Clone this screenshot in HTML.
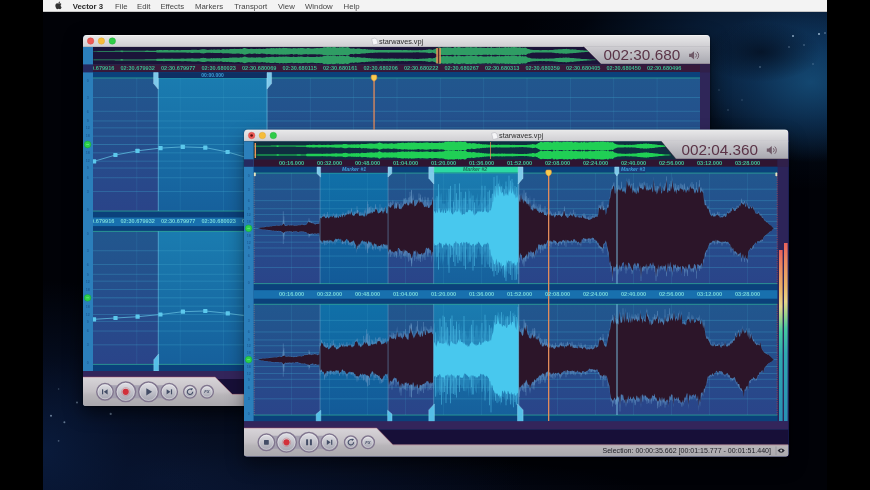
<!DOCTYPE html>
<html><head><meta charset="utf-8"><title>Vector 3</title>
<style>
html,body{margin:0;padding:0;background:#000;}
body{width:870px;height:490px;overflow:hidden;position:relative;font-family:"Liberation Sans", sans-serif;}
.abs{position:absolute;}
svg{position:absolute;left:0;top:0;overflow:hidden;}
.t{position:absolute;white-space:nowrap;line-height:1;}
.menu{font-size:7.8px;color:#454545;top:2.7px;}
.rl{font-size:5.6px;font-weight:bold;transform:translateX(-50%);}
.title{font-size:7.3px;color:#2e2e2e;}
.time{font-size:15.3px;color:#5b3447;}
.mk{font-size:5.2px;font-style:italic;font-weight:bold;}
.status{font-size:7.05px;color:#22222a;}
#all{position:absolute;left:0;top:0;width:870px;height:490px;overflow:hidden;filter:blur(0.45px);}
</style></head><body><div id="all">

<div class="abs" style="left:43px;top:0;width:784px;height:490px;overflow:hidden;
background:
radial-gradient(ellipse 60px 30px at 718px 52px, rgba(3,10,24,0.7) 0%, rgba(3,10,24,0) 100%),
radial-gradient(ellipse 110px 80px at 768px 82px, rgba(22,80,124,0.8) 0%, rgba(16,62,104,0.5) 50%, rgba(0,0,0,0) 100%),
radial-gradient(ellipse 300px 135px at 770px 55px, rgba(12,46,84,0.95) 0%, rgba(10,36,68,0.7) 45%, rgba(4,14,30,0.3) 80%, rgba(0,0,0,0) 100%),
radial-gradient(ellipse 170px 170px at 0px 450px, rgba(10,28,62,0.9) 0%, rgba(7,19,46,0.6) 50%, rgba(0,0,0,0) 100%),
radial-gradient(ellipse 360px 130px at 120px 480px, rgba(10,24,54,0.85) 0%, rgba(8,18,42,0.55) 55%, rgba(0,0,0,0) 100%),
radial-gradient(ellipse 430px 45px at 180px 495px, rgba(8,18,46,0.75) 0%, rgba(0,0,0,0) 100%),
#010207;"></div>

<svg width="870" height="490">
<circle cx="51" cy="415.7" r="1" fill="#bcd6ee" opacity="0.55"/>
<circle cx="64.4" cy="422.3" r="1" fill="#bcd6ee" opacity="0.5"/>
<circle cx="77" cy="402.5" r="1" fill="#bcd6ee" opacity="0.45"/>
<circle cx="110.7" cy="413.9" r="1.1" fill="#bcd6ee" opacity="0.5"/>
<circle cx="58.6" cy="440.8" r="0.9" fill="#bcd6ee" opacity="0.35"/>
<circle cx="58.6" cy="389" r="0.8" fill="#bcd6ee" opacity="0.3"/>
<circle cx="793" cy="36" r="1" fill="#bcd6ee" opacity="0.7"/>
<circle cx="819" cy="34" r="1" fill="#bcd6ee" opacity="0.8"/>
<circle cx="825" cy="33" r="0.8" fill="#bcd6ee" opacity="0.6"/>
<circle cx="804" cy="45" r="0.8" fill="#bcd6ee" opacity="0.45"/>
<circle cx="789" cy="47" r="0.8" fill="#bcd6ee" opacity="0.45"/>
<circle cx="760" cy="67" r="0.8" fill="#bcd6ee" opacity="0.5"/>
<circle cx="813" cy="64" r="0.8" fill="#bcd6ee" opacity="0.35"/>
<circle cx="728" cy="110" r="0.7" fill="#bcd6ee" opacity="0.35"/>
<circle cx="719" cy="90" r="0.7" fill="#bcd6ee" opacity="0.3"/>
<circle cx="742" cy="100" r="0.7" fill="#bcd6ee" opacity="0.3"/>
</svg>

<div class="abs" style="left:43px;top:0;width:784px;height:11.4px;background:#f3f3f3;border-bottom:0.6px solid #c6c6c6;"></div>

<svg width="870" height="490"><g transform="translate(54.4,1.3) scale(0.0094)" fill="#333">
<path d="M665 450c-1-105 86-156 90-158-49-72-125-82-152-83-64-7-126 38-159 38-33 0-83-37-137-36-70 1-135 41-171 104-74 127-19 315 52 418 35 50 76 107 130 105 53-2 72-34 136-34 63 0 81 34 136 33 56-1 92-51 126-102 40-58 56-115 57-118-1 0-109-42-110-167zM562 142c28-35 48-83 42-131-41 2-91 28-121 62-26 30-50 80-43 126 46 4 93-23 122-57z"/></g></svg>

<div class="t menu" style="left:72.7px;font-weight:bold;color:#2a2a2a;">Vector 3</div>
<div class="t menu" style="left:115px;">File</div>
<div class="t menu" style="left:137px;">Edit</div>
<div class="t menu" style="left:160.4px;">Effects</div>
<div class="t menu" style="left:195px;">Markers</div>
<div class="t menu" style="left:234.2px;">Transport</div>
<div class="t menu" style="left:278px;">View</div>
<div class="t menu" style="left:305px;">Window</div>
<div class="t menu" style="left:343.5px;">Help</div>


<div class="abs" style="left:83px;top:35px;width:627px;height:371px;border-radius:4px 4px 3px 3px;box-shadow:0 6px 18px rgba(0,0,0,0.6),0 0 2px rgba(0,0,0,0.7);background:#1a1240;"></div>

<svg width="870" height="490">
<defs>
<clipPath id="bw-win"><path d="M87,35 h619 a4,4 0 0 1 4,4 V403 a3,3 0 0 1 -3,3 H86 a3,3 0 0 1 -3,-3 V39 a4,4 0 0 1 4,-4z"/></clipPath>
<linearGradient id="bw-tb" x1="0" y1="0" x2="0" y2="1"><stop offset="0" stop-color="#e9e9ea"/><stop offset="1" stop-color="#cfced2"/></linearGradient>
<linearGradient id="bw-td" x1="0" y1="0" x2="0" y2="1"><stop offset="0" stop-color="#cfced2"/><stop offset="1" stop-color="#a8a8b0"/></linearGradient>
<linearGradient id="bw-un" x1="0" y1="0" x2="0" y2="1"><stop offset="0" stop-color="#21578e"/><stop offset="1" stop-color="#2a4489"/></linearGradient>
<linearGradient id="bw-sel" x1="0" y1="0" x2="0" y2="1"><stop offset="0" stop-color="#1a7cb0"/><stop offset="1" stop-color="#16609c"/></linearGradient>
<linearGradient id="bw-mk" x1="0" y1="0" x2="0" y2="1"><stop offset="0" stop-color="#1070a8"/><stop offset="1" stop-color="#135a98"/></linearGradient>
<linearGradient id="bw-tp" x1="0" y1="0" x2="0" y2="1"><stop offset="0" stop-color="#d8d5d9"/><stop offset="0.5" stop-color="#c4c0c5"/><stop offset="0.62" stop-color="#b8b5b9"/><stop offset="1" stop-color="#aaa8ad"/></linearGradient>
<linearGradient id="bw-btn" x1="0" y1="0" x2="0" y2="1"><stop offset="0" stop-color="#e2e2e7"/><stop offset="1" stop-color="#a3a3af"/></linearGradient>
<linearGradient id="bw-meter" x1="0" y1="0" x2="0" y2="1"><stop offset="0" stop-color="#e8615c"/><stop offset="0.1" stop-color="#ea8860"/><stop offset="0.24" stop-color="#e9b468"/><stop offset="0.33" stop-color="#e6d48a"/><stop offset="0.4" stop-color="#9fd48a"/><stop offset="0.48" stop-color="#45c9a0"/><stop offset="0.62" stop-color="#2fa8b0"/><stop offset="1" stop-color="#2890b4"/></linearGradient>
</defs>
<g clip-path="url(#bw-win)">
<rect x="83" y="35" width="627" height="371" fill="#0b417b"/>
<rect x="83" y="35" width="627" height="12" fill="url(#bw-tb)"/>
<rect x="83" y="35" width="627" height="0.6" fill="#fff" opacity="0.8"/>
<rect x="83" y="46.5" width="627" height="0.5" fill="#9a98a0" opacity="0.8"/>
<rect x="83" y="47" width="627" height="17.4" fill="#1b1439"/>
<rect x="83" y="64.4" width="627" height="8" fill="#37193a"/>
<rect x="93" y="72.4" width="607" height="5.6" fill="#0c4484"/>
<circle cx="90.6" cy="41" r="3.25" fill="#ee5a55" stroke="#d14540" stroke-width="0.4"/>
<circle cx="101.4" cy="41" r="3.25" fill="#f6bd3a" stroke="#d9a030" stroke-width="0.4"/>
<circle cx="112.3" cy="41" r="3.25" fill="#2fcc48" stroke="#22a838" stroke-width="0.4"/>
<path d="M93.4,50.9L94.5,50.9L95.7,50.9L96.9,50.9L98,50.9L99.2,50.9L100.3,50.9L101.5,50.9L102.6,50.9L103.8,50.9L105,50.9L106.1,50.9L107.3,50.9L108.4,50.9L109.6,50.9L110.7,50.9L111.9,50.9L113.1,50.9L114.2,50.9L115.4,50.8L116.5,50.8L117.7,50.8L118.8,50.8L120,50.8L121.2,50.5L122.3,50.4L123.5,50.8L124.6,50.8L125.8,50.8L126.9,50.8L128.1,50.8L129.3,50.8L130.4,50.8L131.6,50.8L132.7,50.8L133.9,50.8L135,50.8L136.2,50.8L137.4,50.8L138.5,50.8L139.7,50.8L140.8,50.8L142,50.8L143.1,50.8L144.3,50.8L145.5,50.7L146.6,50.6L147.8,50.6L148.9,50.7L150.1,50.7L151.2,50.7L152.4,50.7L153.6,50.7L154.7,50.7L155.9,50.7L157,50.1L158.2,50.2L159.3,50.1L160.5,50.1L161.7,50.1L162.8,50.2L164,50L165.1,50.1L166.3,50.1L167.4,50.1L168.6,50.2L169.8,50.2L170.9,50.1L172.1,50L173.2,50.1L174.4,50.2L175.5,50.2L176.7,50.1L177.9,50.1L179,50.2L180.2,50.2L181.3,50L182.5,50L183.6,50L184.8,50.1L185.9,50.1L187.1,49.9L188.3,49.9L189.4,50L190.6,49.9L191.7,49.7L192.9,49.7L194,49.8L195.2,49.8L196.4,49.8L197.5,49.9L198.7,49.9L199.8,49.8L201,49.4L202.1,49.3L203.3,49.2L204.5,49.3L205.6,49.5L206.8,49.8L207.9,49.9L209.1,49.8L210.2,49.8L211.4,49.5L212.6,49.8L213.7,49.5L214.9,49.6L216,49.7L217.2,49.5L218.3,49.6L219.5,49.5L220.7,49.9L221.8,49.6L223,49.1L224.1,49.3L225.3,49.4L226.4,49.3L227.6,49.3L228.8,49.4L229.9,49L231.1,49.1L232.2,48.9L233.4,48.9L234.5,48.8L235.7,48.9L236.9,49L238,49.1L239.2,49.1L240.3,48.7L241.5,48.9L242.6,48.7L243.8,48.1L245,47.9L246.1,48.4L247.3,48.7L248.4,48.9L249.6,49L250.7,48.8L251.9,48.7L253.1,48.9L254.2,49L255.4,49.1L256.5,48.7L257.7,48.9L258.8,48.7L260,48.7L261.2,49L262.3,49.1L263.5,48.8L264.6,48.9L265.8,48.7L266.9,48.2L268.1,48.6L269.3,48.5L270.4,48.3L271.6,48.1L272.7,48.2L273.9,48.1L275,48.6L276.2,48.1L277.4,48.3L278.5,48.2L279.7,47.8L280.8,48.2L282,48.2L283.1,47.8L284.3,48.1L285.5,47.9L286.6,48L287.8,48.2L288.9,48.2L290.1,48.3L291.2,48.5L292.4,48.5L293.6,47.9L294.7,48.3L295.9,48.3L297,48.5L298.2,47.9L299.3,48.2L300.5,47.9L301.7,47.9L302.8,48.1L304,48.3L305.1,48.4L306.3,48.5L307.4,48L308.6,48.1L309.8,48.3L310.9,48.4L312.1,48.4L313.2,48.4L314.4,48.3L315.5,48.3L316.7,48L317.9,48.1L319,48.3L320.2,48L321.3,48.1L322.5,47.9L323.6,47.3L324.8,47.3L326,47.4L327.1,47L328.3,47L329.4,47.3L330.6,47.1L331.7,47.4L332.9,47L334.1,47.1L335.2,47.1L336.4,47.7L337.5,47.4L338.7,47.7L339.8,46.9L341,47.5L342.2,47.1L343.3,47.3L344.5,47.5L345.6,47.6L346.8,47.2L347.9,47.1L349.1,47.7L350.3,48.5L351.4,48.5L352.6,48.6L353.7,48.2L354.9,48.8L356,48.9L357.2,48.5L358.4,48.6L359.5,48.6L360.7,48.9L361.8,49.1L363,49.2L364.1,49L365.3,49.1L366.5,49.5L367.6,49.3L368.8,49.7L369.9,49.5L371.1,49.8L372.2,49.6L373.4,49.8L374.5,49.8L375.7,50L376.9,49.9L378,50.1L379.2,50L380.3,50.1L381.5,50L382.6,50L383.8,50.1L385,50.1L386.1,50.1L387.3,50.1L388.4,49.9L389.6,50.1L390.7,50L391.9,50L393.1,50L394.2,50.1L395.4,50L396.5,50.1L397.7,50.1L398.8,50.1L400,50L401.2,50.1L402.3,50.2L403.5,50.1L404.6,50L405.8,50.1L406.9,50L408.1,50.2L409.3,50.2L410.4,50.1L411.6,50.2L412.7,50.2L413.9,50.3L415,50.2L416.2,50.3L417.4,50.3L418.5,50.3L419.7,50.1L420.8,50.2L422,50.2L423.1,50L424.3,50.1L425.5,50L426.6,49.8L427.8,49.8L428.9,49.3L430.1,49.5L431.2,49.6L432.4,50L433.6,49.5L434.7,49.3L435.9,48.5L437,48.3L438.2,47.6L439.3,47.3L440.5,47.4L441.7,47.9L442.8,47.4L444,47.5L445.1,47.6L446.3,47.4L447.4,47.3L448.6,47.6L449.8,47.6L450.9,47.5L452.1,47.9L453.2,47.9L454.4,47.1L455.5,47.1L456.7,47.8L457.9,47.1L459,47.1L460.2,47.3L461.3,47.7L462.5,47.5L463.6,47.7L464.8,47.7L466,47.3L467.1,47.2L468.3,47.3L469.4,47.4L470.6,47L471.7,47.2L472.9,47.4L474.1,47.5L475.2,47.2L476.4,47.1L477.5,47.7L478.7,47.8L479.8,47.5L481,47.4L482.2,47.7L483.3,47.8L484.5,47.8L485.6,47.9L486.8,47.9L487.9,47.3L489.1,48L490.3,47.7L491.4,47.1L492.6,47.9L493.7,47.7L494.9,47.9L496,47.8L497.2,47.5L498.4,47.7L499.5,47.1L500.7,47.9L501.8,47.5L503,47.7L504.1,47.6L505.3,47.1L506.5,47.4L507.6,47.4L508.8,47.1L509.9,47.7L511.1,47.1L512.2,47.2L513.4,47.1L514.6,47.1L515.7,47.3L516.9,47.3L518,47.8L519.2,47.2L520.3,47.2L521.5,48L522.7,47.4L523.8,48L525,47.6L526.1,47.7L527.3,48.7L528.4,49.1L529.6,49.2L530.8,49.7L531.9,49.8L533.1,50L534.2,49.9L535.4,50L536.5,50.1L537.7,50L538.9,50.1L540,50.2L541.2,50.2L542.3,50L543.5,50.1L544.6,50.1L545.8,50L547,50L548.1,50.2L549.3,50L550.4,50L551.6,50L552.7,49.9L553.9,49.8L555,49.6L556.2,49.4L557.4,49.5L558.5,49.3L559.7,49.2L560.8,49.2L562,49.3L563.1,48.9L564.3,49.1L565.5,48.9L566.6,48.8L567.8,49.2L568.9,49L570.1,49.4L571.2,49.4L572.4,49.3L573.6,49.5L574.7,49.6L575.9,49.6L577,49.9L578.2,49.9L579.3,50L580.5,50.2L581.7,50.3L582.8,50.3L584,50.4L585.1,50.5L586.3,50.5L587.4,50.6L588.6,50.7L589.8,50.8L590.9,50.8L592.1,50.9L593.2,50.9L594.4,50.9L595.5,50.9L595.5,51.6L594.4,51.6L593.2,51.7L592.1,51.7L590.9,51.8L589.8,51.8L588.6,51.9L587.4,52L586.3,52.1L585.1,52.1L584,52.2L582.8,52.3L581.7,52.3L580.5,52.4L579.3,52.6L578.2,52.7L577,52.7L575.9,53L574.7,53L573.6,53.1L572.4,53.3L571.2,53.2L570.1,53.2L568.9,53.6L567.8,53.4L566.6,53.8L565.5,53.7L564.3,53.5L563.1,53.7L562,53.3L560.8,53.4L559.7,53.4L558.5,53.3L557.4,53.1L556.2,53.2L555,53L553.9,52.8L552.7,52.7L551.6,52.6L550.4,52.6L549.3,52.6L548.1,52.4L547,52.6L545.8,52.6L544.6,52.5L543.5,52.5L542.3,52.6L541.2,52.4L540,52.4L538.9,52.5L537.7,52.6L536.5,52.5L535.4,52.6L534.2,52.7L533.1,52.6L531.9,52.8L530.8,52.9L529.6,53.4L528.4,53.5L527.3,53.9L526.1,54.9L525,55L523.8,54.6L522.7,55.2L521.5,54.6L520.3,55.4L519.2,55.4L518,54.8L516.9,55.3L515.7,55.3L514.6,55.5L513.4,55.5L512.2,55.4L511.1,55.5L509.9,54.9L508.8,55.5L507.6,55.2L506.5,55.2L505.3,55.5L504.1,55L503,54.9L501.8,55.1L500.7,54.7L499.5,55.5L498.4,54.9L497.2,55.1L496,54.8L494.9,54.7L493.7,54.9L492.6,54.7L491.4,55.5L490.3,54.9L489.1,54.6L487.9,55.3L486.8,54.7L485.6,54.7L484.5,54.8L483.3,54.8L482.2,54.9L481,55.2L479.8,55.1L478.7,54.8L477.5,54.9L476.4,55.5L475.2,55.4L474.1,55.1L472.9,55.2L471.7,55.4L470.6,55.6L469.4,55.2L468.3,55.3L467.1,55.4L466,55.3L464.8,54.9L463.6,54.9L462.5,55.1L461.3,54.9L460.2,55.3L459,55.5L457.9,55.5L456.7,54.8L455.5,55.5L454.4,55.5L453.2,54.7L452.1,54.7L450.9,55.1L449.8,55L448.6,55L447.4,55.3L446.3,55.2L445.1,55L444,55.1L442.8,55.2L441.7,54.7L440.5,55.2L439.3,55.3L438.2,55L437,54.3L435.9,54.1L434.7,53.3L433.6,53.1L432.4,52.6L431.2,53L430.1,53.1L428.9,53.3L427.8,52.8L426.6,52.8L425.5,52.6L424.3,52.5L423.1,52.6L422,52.4L420.8,52.4L419.7,52.5L418.5,52.3L417.4,52.3L416.2,52.3L415,52.4L413.9,52.3L412.7,52.4L411.6,52.4L410.4,52.5L409.3,52.4L408.1,52.4L406.9,52.6L405.8,52.5L404.6,52.6L403.5,52.5L402.3,52.4L401.2,52.5L400,52.6L398.8,52.5L397.7,52.5L396.5,52.5L395.4,52.6L394.2,52.5L393.1,52.6L391.9,52.6L390.7,52.6L389.6,52.5L388.4,52.7L387.3,52.5L386.1,52.5L385,52.5L383.8,52.5L382.6,52.6L381.5,52.6L380.3,52.5L379.2,52.6L378,52.5L376.9,52.7L375.7,52.6L374.5,52.8L373.4,52.8L372.2,53L371.1,52.8L369.9,53.1L368.8,52.9L367.6,53.3L366.5,53.1L365.3,53.5L364.1,53.6L363,53.4L361.8,53.5L360.7,53.7L359.5,54L358.4,54L357.2,54.1L356,53.7L354.9,53.8L353.7,54.4L352.6,54L351.4,54.1L350.3,54.1L349.1,54.9L347.9,55.5L346.8,55.4L345.6,55L344.5,55.1L343.3,55.3L342.2,55.5L341,55.1L339.8,55.7L338.7,54.9L337.5,55.2L336.4,54.9L335.2,55.5L334.1,55.5L332.9,55.6L331.7,55.2L330.6,55.5L329.4,55.3L328.3,55.6L327.1,55.6L326,55.2L324.8,55.3L323.6,55.3L322.5,54.7L321.3,54.5L320.2,54.6L319,54.3L317.9,54.5L316.7,54.6L315.5,54.3L314.4,54.3L313.2,54.2L312.1,54.2L310.9,54.2L309.8,54.3L308.6,54.5L307.4,54.6L306.3,54.1L305.1,54.2L304,54.3L302.8,54.5L301.7,54.7L300.5,54.7L299.3,54.4L298.2,54.7L297,54.1L295.9,54.3L294.7,54.3L293.6,54.7L292.4,54.1L291.2,54.1L290.1,54.3L288.9,54.4L287.8,54.4L286.6,54.6L285.5,54.7L284.3,54.5L283.1,54.8L282,54.4L280.8,54.4L279.7,54.8L278.5,54.4L277.4,54.3L276.2,54.5L275,54L273.9,54.5L272.7,54.4L271.6,54.5L270.4,54.3L269.3,54.1L268.1,54L266.9,54.4L265.8,53.9L264.6,53.7L263.5,53.8L262.3,53.5L261.2,53.6L260,53.9L258.8,53.9L257.7,53.7L256.5,53.9L255.4,53.5L254.2,53.6L253.1,53.7L251.9,53.9L250.7,53.8L249.6,53.6L248.4,53.7L247.3,53.9L246.1,54.2L245,54.7L243.8,54.5L242.6,53.9L241.5,53.7L240.3,53.9L239.2,53.5L238,53.5L236.9,53.6L235.7,53.7L234.5,53.8L233.4,53.7L232.2,53.7L231.1,53.5L229.9,53.6L228.8,53.2L227.6,53.3L226.4,53.3L225.3,53.2L224.1,53.3L223,53.5L221.8,53L220.7,52.7L219.5,53.1L218.3,53L217.2,53.1L216,52.9L214.9,53L213.7,53.1L212.6,52.8L211.4,53.1L210.2,52.8L209.1,52.8L207.9,52.7L206.8,52.8L205.6,53.1L204.5,53.3L203.3,53.4L202.1,53.3L201,53.2L199.8,52.8L198.7,52.7L197.5,52.7L196.4,52.8L195.2,52.8L194,52.8L192.9,52.9L191.7,52.9L190.6,52.7L189.4,52.6L188.3,52.7L187.1,52.7L185.9,52.5L184.8,52.5L183.6,52.6L182.5,52.6L181.3,52.6L180.2,52.4L179,52.4L177.9,52.5L176.7,52.5L175.5,52.4L174.4,52.4L173.2,52.5L172.1,52.6L170.9,52.5L169.8,52.4L168.6,52.4L167.4,52.5L166.3,52.5L165.1,52.5L164,52.6L162.8,52.4L161.7,52.5L160.5,52.5L159.3,52.5L158.2,52.4L157,52.5L155.9,51.9L154.7,51.9L153.6,51.9L152.4,51.9L151.2,51.9L150.1,51.9L148.9,51.9L147.8,52L146.6,52L145.5,51.9L144.3,51.8L143.1,51.8L142,51.8L140.8,51.8L139.7,51.8L138.5,51.8L137.4,51.8L136.2,51.8L135,51.8L133.9,51.8L132.7,51.8L131.6,51.8L130.4,51.8L129.3,51.8L128.1,51.8L126.9,51.8L125.8,51.8L124.6,51.8L123.5,51.8L122.3,52.2L121.2,52.1L120,51.8L118.8,51.8L117.7,51.8L116.5,51.8L115.4,51.8L114.2,51.7L113.1,51.7L111.9,51.7L110.7,51.7L109.6,51.7L108.4,51.7L107.3,51.7L106.1,51.7L105,51.7L103.8,51.7L102.6,51.7L101.5,51.7L100.3,51.7L99.2,51.7L98,51.7L96.9,51.6L95.7,51.6L94.5,51.6L93.4,51.6Z" fill="#2f9d64"/>
<path d="M93.4,59.5L94.5,59.5L95.7,59.5L96.9,59.5L98,59.5L99.2,59.5L100.3,59.5L101.5,59.5L102.6,59.5L103.8,59.5L105,59.5L106.1,59.5L107.3,59.5L108.4,59.5L109.6,59.5L110.7,59.5L111.9,59.5L113.1,59.5L114.2,59.5L115.4,59.4L116.5,59.4L117.7,59.4L118.8,59.4L120,59.4L121.2,59.1L122.3,59L123.5,59.4L124.6,59.4L125.8,59.4L126.9,59.4L128.1,59.4L129.3,59.4L130.4,59.4L131.6,59.4L132.7,59.4L133.9,59.4L135,59.4L136.2,59.4L137.4,59.4L138.5,59.4L139.7,59.4L140.8,59.4L142,59.4L143.1,59.4L144.3,59.4L145.5,59.3L146.6,59.2L147.8,59.2L148.9,59.3L150.1,59.3L151.2,59.3L152.4,59.3L153.6,59.3L154.7,59.3L155.9,59.3L157,58.7L158.2,58.8L159.3,58.7L160.5,58.7L161.7,58.7L162.8,58.8L164,58.6L165.1,58.7L166.3,58.7L167.4,58.7L168.6,58.8L169.8,58.8L170.9,58.7L172.1,58.6L173.2,58.7L174.4,58.8L175.5,58.8L176.7,58.7L177.9,58.7L179,58.8L180.2,58.8L181.3,58.6L182.5,58.6L183.6,58.6L184.8,58.7L185.9,58.7L187.1,58.5L188.3,58.5L189.4,58.6L190.6,58.5L191.7,58.3L192.9,58.3L194,58.4L195.2,58.4L196.4,58.4L197.5,58.5L198.7,58.5L199.8,58.4L201,58L202.1,57.9L203.3,57.8L204.5,57.9L205.6,58.1L206.8,58.4L207.9,58.5L209.1,58.4L210.2,58.4L211.4,58.1L212.6,58.4L213.7,58.1L214.9,58.2L216,58.3L217.2,58.1L218.3,58.2L219.5,58.1L220.7,58.5L221.8,58.2L223,57.7L224.1,57.9L225.3,58L226.4,57.9L227.6,57.9L228.8,58L229.9,57.6L231.1,57.7L232.2,57.5L233.4,57.5L234.5,57.4L235.7,57.5L236.9,57.6L238,57.7L239.2,57.7L240.3,57.3L241.5,57.5L242.6,57.3L243.8,56.7L245,56.5L246.1,57L247.3,57.3L248.4,57.5L249.6,57.6L250.7,57.4L251.9,57.3L253.1,57.5L254.2,57.6L255.4,57.7L256.5,57.3L257.7,57.5L258.8,57.3L260,57.3L261.2,57.6L262.3,57.7L263.5,57.4L264.6,57.5L265.8,57.3L266.9,56.8L268.1,57.2L269.3,57.1L270.4,56.9L271.6,56.7L272.7,56.8L273.9,56.7L275,57.2L276.2,56.7L277.4,56.9L278.5,56.8L279.7,56.4L280.8,56.8L282,56.8L283.1,56.4L284.3,56.7L285.5,56.5L286.6,56.6L287.8,56.8L288.9,56.8L290.1,56.9L291.2,57.1L292.4,57.1L293.6,56.5L294.7,56.9L295.9,56.9L297,57.1L298.2,56.5L299.3,56.8L300.5,56.5L301.7,56.5L302.8,56.7L304,56.9L305.1,57L306.3,57.1L307.4,56.6L308.6,56.7L309.8,56.9L310.9,57L312.1,57L313.2,57L314.4,56.9L315.5,56.9L316.7,56.6L317.9,56.7L319,56.9L320.2,56.6L321.3,56.7L322.5,56.5L323.6,55.9L324.8,55.9L326,56L327.1,55.6L328.3,55.6L329.4,55.9L330.6,55.7L331.7,56L332.9,55.6L334.1,55.7L335.2,55.7L336.4,56.3L337.5,56L338.7,56.3L339.8,55.5L341,56.1L342.2,55.7L343.3,55.9L344.5,56.1L345.6,56.2L346.8,55.8L347.9,55.7L349.1,56.3L350.3,57.1L351.4,57.1L352.6,57.2L353.7,56.8L354.9,57.4L356,57.5L357.2,57.1L358.4,57.2L359.5,57.2L360.7,57.5L361.8,57.7L363,57.8L364.1,57.6L365.3,57.7L366.5,58.1L367.6,57.9L368.8,58.3L369.9,58.1L371.1,58.4L372.2,58.2L373.4,58.4L374.5,58.4L375.7,58.6L376.9,58.5L378,58.7L379.2,58.6L380.3,58.7L381.5,58.6L382.6,58.6L383.8,58.7L385,58.7L386.1,58.7L387.3,58.7L388.4,58.5L389.6,58.7L390.7,58.6L391.9,58.6L393.1,58.6L394.2,58.7L395.4,58.6L396.5,58.7L397.7,58.7L398.8,58.7L400,58.6L401.2,58.7L402.3,58.8L403.5,58.7L404.6,58.6L405.8,58.7L406.9,58.6L408.1,58.8L409.3,58.8L410.4,58.7L411.6,58.8L412.7,58.8L413.9,58.9L415,58.8L416.2,58.9L417.4,58.9L418.5,58.9L419.7,58.7L420.8,58.8L422,58.8L423.1,58.6L424.3,58.7L425.5,58.6L426.6,58.4L427.8,58.4L428.9,57.9L430.1,58.1L431.2,58.2L432.4,58.6L433.6,58.1L434.7,57.9L435.9,57.1L437,56.9L438.2,56.2L439.3,55.9L440.5,56L441.7,56.5L442.8,56L444,56.1L445.1,56.2L446.3,56L447.4,55.9L448.6,56.2L449.8,56.2L450.9,56.1L452.1,56.5L453.2,56.5L454.4,55.7L455.5,55.7L456.7,56.4L457.9,55.7L459,55.7L460.2,55.9L461.3,56.3L462.5,56.1L463.6,56.3L464.8,56.3L466,55.9L467.1,55.8L468.3,55.9L469.4,56L470.6,55.6L471.7,55.8L472.9,56L474.1,56.1L475.2,55.8L476.4,55.7L477.5,56.3L478.7,56.4L479.8,56.1L481,56L482.2,56.3L483.3,56.4L484.5,56.4L485.6,56.5L486.8,56.5L487.9,55.9L489.1,56.6L490.3,56.3L491.4,55.7L492.6,56.5L493.7,56.3L494.9,56.5L496,56.4L497.2,56.1L498.4,56.3L499.5,55.7L500.7,56.5L501.8,56.1L503,56.3L504.1,56.2L505.3,55.7L506.5,56L507.6,56L508.8,55.7L509.9,56.3L511.1,55.7L512.2,55.8L513.4,55.7L514.6,55.7L515.7,55.9L516.9,55.9L518,56.4L519.2,55.8L520.3,55.8L521.5,56.6L522.7,56L523.8,56.6L525,56.2L526.1,56.3L527.3,57.3L528.4,57.7L529.6,57.8L530.8,58.3L531.9,58.4L533.1,58.6L534.2,58.5L535.4,58.6L536.5,58.7L537.7,58.6L538.9,58.7L540,58.8L541.2,58.8L542.3,58.6L543.5,58.7L544.6,58.7L545.8,58.6L547,58.6L548.1,58.8L549.3,58.6L550.4,58.6L551.6,58.6L552.7,58.5L553.9,58.4L555,58.2L556.2,58L557.4,58.1L558.5,57.9L559.7,57.8L560.8,57.8L562,57.9L563.1,57.5L564.3,57.7L565.5,57.5L566.6,57.4L567.8,57.8L568.9,57.6L570.1,58L571.2,58L572.4,57.9L573.6,58.1L574.7,58.2L575.9,58.2L577,58.5L578.2,58.5L579.3,58.6L580.5,58.8L581.7,58.9L582.8,58.9L584,59L585.1,59.1L586.3,59.1L587.4,59.2L588.6,59.3L589.8,59.4L590.9,59.4L592.1,59.5L593.2,59.5L594.4,59.5L595.5,59.5L595.5,60.2L594.4,60.2L593.2,60.3L592.1,60.3L590.9,60.4L589.8,60.4L588.6,60.5L587.4,60.6L586.3,60.7L585.1,60.7L584,60.8L582.8,60.9L581.7,60.9L580.5,61L579.3,61.2L578.2,61.3L577,61.3L575.9,61.6L574.7,61.6L573.6,61.7L572.4,61.9L571.2,61.8L570.1,61.8L568.9,62.2L567.8,62L566.6,62.4L565.5,62.3L564.3,62.1L563.1,62.3L562,61.9L560.8,62L559.7,62L558.5,61.9L557.4,61.7L556.2,61.8L555,61.6L553.9,61.4L552.7,61.3L551.6,61.2L550.4,61.2L549.3,61.2L548.1,61L547,61.2L545.8,61.2L544.6,61.1L543.5,61.1L542.3,61.2L541.2,61L540,61L538.9,61.1L537.7,61.2L536.5,61.1L535.4,61.2L534.2,61.3L533.1,61.2L531.9,61.4L530.8,61.5L529.6,62L528.4,62.1L527.3,62.5L526.1,63.5L525,63.6L523.8,63.2L522.7,63.8L521.5,63.2L520.3,64L519.2,64L518,63.4L516.9,63.9L515.7,63.9L514.6,64.1L513.4,64.1L512.2,64L511.1,64.1L509.9,63.5L508.8,64.1L507.6,63.8L506.5,63.8L505.3,64.1L504.1,63.6L503,63.5L501.8,63.7L500.7,63.3L499.5,64.1L498.4,63.5L497.2,63.7L496,63.4L494.9,63.3L493.7,63.5L492.6,63.3L491.4,64.1L490.3,63.5L489.1,63.2L487.9,63.9L486.8,63.3L485.6,63.3L484.5,63.4L483.3,63.4L482.2,63.5L481,63.8L479.8,63.7L478.7,63.4L477.5,63.5L476.4,64.1L475.2,64L474.1,63.7L472.9,63.8L471.7,64L470.6,64.2L469.4,63.8L468.3,63.9L467.1,64L466,63.9L464.8,63.5L463.6,63.5L462.5,63.7L461.3,63.5L460.2,63.9L459,64.1L457.9,64.1L456.7,63.4L455.5,64.1L454.4,64.1L453.2,63.3L452.1,63.3L450.9,63.7L449.8,63.6L448.6,63.6L447.4,63.9L446.3,63.8L445.1,63.6L444,63.7L442.8,63.8L441.7,63.3L440.5,63.8L439.3,63.9L438.2,63.6L437,62.9L435.9,62.7L434.7,61.9L433.6,61.7L432.4,61.2L431.2,61.6L430.1,61.7L428.9,61.9L427.8,61.4L426.6,61.4L425.5,61.2L424.3,61.1L423.1,61.2L422,61L420.8,61L419.7,61.1L418.5,60.9L417.4,60.9L416.2,60.9L415,61L413.9,60.9L412.7,61L411.6,61L410.4,61.1L409.3,61L408.1,61L406.9,61.2L405.8,61.1L404.6,61.2L403.5,61.1L402.3,61L401.2,61.1L400,61.2L398.8,61.1L397.7,61.1L396.5,61.1L395.4,61.2L394.2,61.1L393.1,61.2L391.9,61.2L390.7,61.2L389.6,61.1L388.4,61.3L387.3,61.1L386.1,61.1L385,61.1L383.8,61.1L382.6,61.2L381.5,61.2L380.3,61.1L379.2,61.2L378,61.1L376.9,61.3L375.7,61.2L374.5,61.4L373.4,61.4L372.2,61.6L371.1,61.4L369.9,61.7L368.8,61.5L367.6,61.9L366.5,61.7L365.3,62.1L364.1,62.2L363,62L361.8,62.1L360.7,62.3L359.5,62.6L358.4,62.6L357.2,62.7L356,62.3L354.9,62.4L353.7,63L352.6,62.6L351.4,62.7L350.3,62.7L349.1,63.5L347.9,64.1L346.8,64L345.6,63.6L344.5,63.7L343.3,63.9L342.2,64.1L341,63.7L339.8,64.3L338.7,63.5L337.5,63.8L336.4,63.5L335.2,64.1L334.1,64.1L332.9,64.2L331.7,63.8L330.6,64.1L329.4,63.9L328.3,64.2L327.1,64.2L326,63.8L324.8,63.9L323.6,63.9L322.5,63.3L321.3,63.1L320.2,63.2L319,62.9L317.9,63.1L316.7,63.2L315.5,62.9L314.4,62.9L313.2,62.8L312.1,62.8L310.9,62.8L309.8,62.9L308.6,63.1L307.4,63.2L306.3,62.7L305.1,62.8L304,62.9L302.8,63.1L301.7,63.3L300.5,63.3L299.3,63L298.2,63.3L297,62.7L295.9,62.9L294.7,62.9L293.6,63.3L292.4,62.7L291.2,62.7L290.1,62.9L288.9,63L287.8,63L286.6,63.2L285.5,63.3L284.3,63.1L283.1,63.4L282,63L280.8,63L279.7,63.4L278.5,63L277.4,62.9L276.2,63.1L275,62.6L273.9,63.1L272.7,63L271.6,63.1L270.4,62.9L269.3,62.7L268.1,62.6L266.9,63L265.8,62.5L264.6,62.3L263.5,62.4L262.3,62.1L261.2,62.2L260,62.5L258.8,62.5L257.7,62.3L256.5,62.5L255.4,62.1L254.2,62.2L253.1,62.3L251.9,62.5L250.7,62.4L249.6,62.2L248.4,62.3L247.3,62.5L246.1,62.8L245,63.3L243.8,63.1L242.6,62.5L241.5,62.3L240.3,62.5L239.2,62.1L238,62.1L236.9,62.2L235.7,62.3L234.5,62.4L233.4,62.3L232.2,62.3L231.1,62.1L229.9,62.2L228.8,61.8L227.6,61.9L226.4,61.9L225.3,61.8L224.1,61.9L223,62.1L221.8,61.6L220.7,61.3L219.5,61.7L218.3,61.6L217.2,61.7L216,61.5L214.9,61.6L213.7,61.7L212.6,61.4L211.4,61.7L210.2,61.4L209.1,61.4L207.9,61.3L206.8,61.4L205.6,61.7L204.5,61.9L203.3,62L202.1,61.9L201,61.8L199.8,61.4L198.7,61.3L197.5,61.3L196.4,61.4L195.2,61.4L194,61.4L192.9,61.5L191.7,61.5L190.6,61.3L189.4,61.2L188.3,61.3L187.1,61.3L185.9,61.1L184.8,61.1L183.6,61.2L182.5,61.2L181.3,61.2L180.2,61L179,61L177.9,61.1L176.7,61.1L175.5,61L174.4,61L173.2,61.1L172.1,61.2L170.9,61.1L169.8,61L168.6,61L167.4,61.1L166.3,61.1L165.1,61.1L164,61.2L162.8,61L161.7,61.1L160.5,61.1L159.3,61.1L158.2,61L157,61.1L155.9,60.5L154.7,60.5L153.6,60.5L152.4,60.5L151.2,60.5L150.1,60.5L148.9,60.5L147.8,60.6L146.6,60.6L145.5,60.5L144.3,60.4L143.1,60.4L142,60.4L140.8,60.4L139.7,60.4L138.5,60.4L137.4,60.4L136.2,60.4L135,60.4L133.9,60.4L132.7,60.4L131.6,60.4L130.4,60.4L129.3,60.4L128.1,60.4L126.9,60.4L125.8,60.4L124.6,60.4L123.5,60.4L122.3,60.8L121.2,60.7L120,60.4L118.8,60.4L117.7,60.4L116.5,60.4L115.4,60.4L114.2,60.3L113.1,60.3L111.9,60.3L110.7,60.3L109.6,60.3L108.4,60.3L107.3,60.3L106.1,60.3L105,60.3L103.8,60.3L102.6,60.3L101.5,60.3L100.3,60.3L99.2,60.3L98,60.3L96.9,60.2L95.7,60.2L94.5,60.2L93.4,60.2Z" fill="#2f9d64"/>
<rect x="436.3" y="48" width="1.6" height="15.5" fill="#e8955a"/>
<rect x="439.2" y="48" width="1.6" height="15.5" fill="#e8955a"/>
<rect x="437.9" y="48" width="1.3" height="15.5" fill="#5a2a30"/>
<path d="M583.5,46.4 L710,46.4 L710,64 L601,64Z" fill="url(#bw-td)"/>
<path d="M583.5,46.7 L601,64 L710,64" fill="none" stroke="#3a1830" stroke-width="0.7" opacity="0.55"/>
<g transform="translate(694.3,55.4)" fill="#6f5a68" stroke="none">
<path d="M-5.2,-1.6 h2 l3,-2.6 v8.4 l-3,-2.6 h-2z"/>
<path d="M1.3,-2 a2.8,2.8 0 0 1 0,4" fill="none" stroke="#6f5a68" stroke-width="1"/>
<path d="M2.7,-3.6 a4.8,4.8 0 0 1 0,7.2" fill="none" stroke="#6f5a68" stroke-width="1"/>
</g>
<rect x="93" y="72" width="607" height="145" fill="#0b417b"/>
<rect x="93" y="78" width="607" height="133" fill="url(#bw-un)"/>
<rect x="158.2" y="78" width="108.8" height="133" fill="url(#bw-sel)"/>
<rect x="93" y="77.5" width="607" height="0.9" fill="#2fb09a" opacity="0.8"/>
<rect x="93" y="210.6" width="607" height="0.9" fill="#2fb09a" opacity="0.8"/>
<rect x="93" y="97" width="607" height="0.9" fill="#3fa6cc" opacity="0.37"/>
<rect x="93" y="191.1" width="607" height="0.9" fill="#3fa6cc" opacity="0.37"/>
<rect x="93" y="110.8" width="607" height="0.9" fill="#3fa6cc" opacity="0.37"/>
<rect x="93" y="177.3" width="607" height="0.9" fill="#3fa6cc" opacity="0.37"/>
<rect x="93" y="120.5" width="607" height="0.9" fill="#3fa6cc" opacity="0.37"/>
<rect x="93" y="167.6" width="607" height="0.9" fill="#3fa6cc" opacity="0.37"/>
<rect x="93" y="127.4" width="607" height="0.9" fill="#3fa6cc" opacity="0.37"/>
<rect x="93" y="160.7" width="607" height="0.9" fill="#3fa6cc" opacity="0.37"/>
<rect x="93" y="135.7" width="607" height="0.9" fill="#3fa6cc" opacity="0.37"/>
<rect x="93" y="152.4" width="607" height="0.9" fill="#3fa6cc" opacity="0.37"/>
<rect x="93" y="144.1" width="607" height="0.9" fill="#3fa6cc" opacity="0.45"/>
<rect x="136.4" y="78" width="0.8" height="133" fill="#3fa6cc" opacity="0.2"/>
<rect x="179.8" y="78" width="0.8" height="133" fill="#3fa6cc" opacity="0.2"/>
<rect x="223.2" y="78" width="0.8" height="133" fill="#3fa6cc" opacity="0.2"/>
<rect x="266.5" y="78" width="0.8" height="133" fill="#3fa6cc" opacity="0.2"/>
<rect x="309.9" y="78" width="0.8" height="133" fill="#3fa6cc" opacity="0.2"/>
<rect x="353.2" y="78" width="0.8" height="133" fill="#3fa6cc" opacity="0.2"/>
<rect x="396.6" y="78" width="0.8" height="133" fill="#3fa6cc" opacity="0.2"/>
<rect x="439.9" y="78" width="0.8" height="133" fill="#3fa6cc" opacity="0.2"/>
<rect x="483.3" y="78" width="0.8" height="133" fill="#3fa6cc" opacity="0.2"/>
<rect x="526.6" y="78" width="0.8" height="133" fill="#3fa6cc" opacity="0.2"/>
<rect x="570" y="78" width="0.8" height="133" fill="#3fa6cc" opacity="0.2"/>
<rect x="613.3" y="78" width="0.8" height="133" fill="#3fa6cc" opacity="0.2"/>
<rect x="656.7" y="78" width="0.8" height="133" fill="#3fa6cc" opacity="0.2"/>
<rect x="93" y="225.3" width="607" height="145" fill="#0b417b"/>
<rect x="93" y="231.3" width="607" height="133" fill="url(#bw-un)"/>
<rect x="158.2" y="231.3" width="108.8" height="133" fill="url(#bw-sel)"/>
<rect x="93" y="230.9" width="607" height="0.9" fill="#2fb09a" opacity="0.8"/>
<rect x="93" y="363.9" width="607" height="0.9" fill="#2fb09a" opacity="0.8"/>
<rect x="93" y="250.3" width="607" height="0.9" fill="#3fa6cc" opacity="0.37"/>
<rect x="93" y="344.4" width="607" height="0.9" fill="#3fa6cc" opacity="0.37"/>
<rect x="93" y="264.1" width="607" height="0.9" fill="#3fa6cc" opacity="0.37"/>
<rect x="93" y="330.6" width="607" height="0.9" fill="#3fa6cc" opacity="0.37"/>
<rect x="93" y="273.8" width="607" height="0.9" fill="#3fa6cc" opacity="0.37"/>
<rect x="93" y="320.9" width="607" height="0.9" fill="#3fa6cc" opacity="0.37"/>
<rect x="93" y="280.7" width="607" height="0.9" fill="#3fa6cc" opacity="0.37"/>
<rect x="93" y="314" width="607" height="0.9" fill="#3fa6cc" opacity="0.37"/>
<rect x="93" y="289" width="607" height="0.9" fill="#3fa6cc" opacity="0.37"/>
<rect x="93" y="305.7" width="607" height="0.9" fill="#3fa6cc" opacity="0.37"/>
<rect x="93" y="297.4" width="607" height="0.9" fill="#3fa6cc" opacity="0.45"/>
<rect x="136.4" y="231.3" width="0.8" height="133" fill="#3fa6cc" opacity="0.2"/>
<rect x="179.8" y="231.3" width="0.8" height="133" fill="#3fa6cc" opacity="0.2"/>
<rect x="223.2" y="231.3" width="0.8" height="133" fill="#3fa6cc" opacity="0.2"/>
<rect x="266.5" y="231.3" width="0.8" height="133" fill="#3fa6cc" opacity="0.2"/>
<rect x="309.9" y="231.3" width="0.8" height="133" fill="#3fa6cc" opacity="0.2"/>
<rect x="353.2" y="231.3" width="0.8" height="133" fill="#3fa6cc" opacity="0.2"/>
<rect x="396.6" y="231.3" width="0.8" height="133" fill="#3fa6cc" opacity="0.2"/>
<rect x="439.9" y="231.3" width="0.8" height="133" fill="#3fa6cc" opacity="0.2"/>
<rect x="483.3" y="231.3" width="0.8" height="133" fill="#3fa6cc" opacity="0.2"/>
<rect x="526.6" y="231.3" width="0.8" height="133" fill="#3fa6cc" opacity="0.2"/>
<rect x="570" y="231.3" width="0.8" height="133" fill="#3fa6cc" opacity="0.2"/>
<rect x="613.3" y="231.3" width="0.8" height="133" fill="#3fa6cc" opacity="0.2"/>
<rect x="656.7" y="231.3" width="0.8" height="133" fill="#3fa6cc" opacity="0.2"/>
<rect x="93" y="217.5" width="607" height="8.6" fill="#1870ae"/>
<rect x="158.2" y="72.4" width="108.8" height="5.6" fill="#0e2f63"/>
<rect x="157.8" y="78" width="0.9" height="133" fill="#7fd3f2" opacity="0.55"/>
<rect x="266.6" y="78" width="0.9" height="133" fill="#7fd3f2" opacity="0.55"/>
<rect x="157.8" y="231.3" width="0.9" height="133" fill="#7fd3f2" opacity="0.55"/>
<rect x="266.6" y="231.3" width="0.9" height="133" fill="#7fd3f2" opacity="0.55"/>
<polyline points="94.1,161.3 115.4,155 137.5,150.8 160.5,148.1 182.8,146.9 205.3,147.6 227.6,152 250,158.5" fill="none" stroke="#5ab4d8" stroke-width="1" opacity="0.85"/>
<rect x="92" y="159.2" width="4.2" height="4.2" fill="#5cc8ec" rx="0.5"/>
<rect x="113.3" y="152.9" width="4.2" height="4.2" fill="#5cc8ec" rx="0.5"/>
<rect x="135.4" y="148.7" width="4.2" height="4.2" fill="#5cc8ec" rx="0.5"/>
<rect x="158.4" y="146" width="4.2" height="4.2" fill="#5cc8ec" rx="0.5"/>
<rect x="180.7" y="144.8" width="4.2" height="4.2" fill="#5cc8ec" rx="0.5"/>
<rect x="203.2" y="145.5" width="4.2" height="4.2" fill="#5cc8ec" rx="0.5"/>
<rect x="225.5" y="149.9" width="4.2" height="4.2" fill="#5cc8ec" rx="0.5"/>
<rect x="247.9" y="156.4" width="4.2" height="4.2" fill="#5cc8ec" rx="0.5"/>
<polyline points="94,319.3 115.5,318 137.6,316.7 160.4,314.5 182.9,311.7 205.3,311 227.8,313.3 250,316.5" fill="none" stroke="#5ab4d8" stroke-width="1" opacity="0.85"/>
<rect x="91.9" y="317.2" width="4.2" height="4.2" fill="#5cc8ec" rx="0.5"/>
<rect x="113.4" y="315.9" width="4.2" height="4.2" fill="#5cc8ec" rx="0.5"/>
<rect x="135.5" y="314.6" width="4.2" height="4.2" fill="#5cc8ec" rx="0.5"/>
<rect x="158.3" y="312.4" width="4.2" height="4.2" fill="#5cc8ec" rx="0.5"/>
<rect x="180.8" y="309.6" width="4.2" height="4.2" fill="#5cc8ec" rx="0.5"/>
<rect x="203.2" y="308.9" width="4.2" height="4.2" fill="#5cc8ec" rx="0.5"/>
<rect x="225.7" y="311.2" width="4.2" height="4.2" fill="#5cc8ec" rx="0.5"/>
<rect x="247.9" y="314.4" width="4.2" height="4.2" fill="#5cc8ec" rx="0.5"/>
<path d="M158.2,72.6 h-4.6 v10.9 l4.6,5.6z" fill="#86d4f3" stroke="#c6ecfc" stroke-width="0.4" opacity="0.92"/>
<path d="M267,72.6 h4.6 v10.9 l-4.6,5.6z" fill="#86d4f3" stroke="#c6ecfc" stroke-width="0.4" opacity="0.92"/>
<path d="M158.6,371 h-4.8 v-11.2 l4.8,-5.8z" fill="#58c5ed" stroke="#a4e2fb" stroke-width="0.4" opacity="0.95"/>
<rect x="373.4" y="78" width="1.3" height="293" fill="#e38b5a"/>
<path d="M371.2,76.3 a1.3,1.3 0 0 1 1.3,-1.3 h3 a1.3,1.3 0 0 1 1.3,1.3 v1.6 q0,1.8 -2.8,3.4 q-2.8,-1.6 -2.8,-3.4z" fill="#f8cc4e" stroke="#e8903e" stroke-width="0.6"/>
<rect x="700" y="64.4" width="10" height="306.6" fill="#2f2659"/>
<rect x="700" y="64.4" width="10" height="8" fill="#30204a"/>
<rect x="83" y="47" width="10" height="324" fill="#2b7fbb"/>
<rect x="83" y="64.4" width="10" height="8" fill="#252a60"/>
<text x="87.8" y="81.5" font-family='"Liberation Sans", sans-serif' font-size="3.6" font-weight="bold" fill="#1a5690" opacity="0.85" text-anchor="middle">0</text>
<text x="87.8" y="211.1" font-family='"Liberation Sans", sans-serif' font-size="3.6" font-weight="bold" fill="#1a5690" opacity="0.85" text-anchor="middle">0</text>
<text x="87.8" y="98.7" font-family='"Liberation Sans", sans-serif' font-size="3.6" font-weight="bold" fill="#1a5690" opacity="0.85" text-anchor="middle">3</text>
<text x="87.8" y="192.9" font-family='"Liberation Sans", sans-serif' font-size="3.6" font-weight="bold" fill="#1a5690" opacity="0.85" text-anchor="middle">3</text>
<text x="87.8" y="112.5" font-family='"Liberation Sans", sans-serif' font-size="3.6" font-weight="bold" fill="#1a5690" opacity="0.85" text-anchor="middle">6</text>
<text x="87.8" y="179.1" font-family='"Liberation Sans", sans-serif' font-size="3.6" font-weight="bold" fill="#1a5690" opacity="0.85" text-anchor="middle">6</text>
<text x="87.8" y="122.3" font-family='"Liberation Sans", sans-serif' font-size="3.6" font-weight="bold" fill="#1a5690" opacity="0.85" text-anchor="middle">9</text>
<text x="87.8" y="169.3" font-family='"Liberation Sans", sans-serif' font-size="3.6" font-weight="bold" fill="#1a5690" opacity="0.85" text-anchor="middle">9</text>
<text x="87.8" y="129.2" font-family='"Liberation Sans", sans-serif' font-size="3.6" font-weight="bold" fill="#1a5690" opacity="0.85" text-anchor="middle">12</text>
<text x="87.8" y="162.4" font-family='"Liberation Sans", sans-serif' font-size="3.6" font-weight="bold" fill="#1a5690" opacity="0.85" text-anchor="middle">12</text>
<text x="87.8" y="137.4" font-family='"Liberation Sans", sans-serif' font-size="3.6" font-weight="bold" fill="#1a5690" opacity="0.85" text-anchor="middle">18</text>
<text x="87.8" y="154.2" font-family='"Liberation Sans", sans-serif' font-size="3.6" font-weight="bold" fill="#1a5690" opacity="0.85" text-anchor="middle">18</text>
<circle cx="87.6" cy="144.5" r="3.4" fill="#2ad24a" stroke="#1a9a36" stroke-width="0.5"/>
<rect x="86.2" y="144.1" width="2.8" height="0.8" fill="#8af09a" opacity="0.7"/>
<text x="87.8" y="234.8" font-family='"Liberation Sans", sans-serif' font-size="3.6" font-weight="bold" fill="#1a5690" opacity="0.85" text-anchor="middle">0</text>
<text x="87.8" y="364.4" font-family='"Liberation Sans", sans-serif' font-size="3.6" font-weight="bold" fill="#1a5690" opacity="0.85" text-anchor="middle">0</text>
<text x="87.8" y="252" font-family='"Liberation Sans", sans-serif' font-size="3.6" font-weight="bold" fill="#1a5690" opacity="0.85" text-anchor="middle">3</text>
<text x="87.8" y="346.2" font-family='"Liberation Sans", sans-serif' font-size="3.6" font-weight="bold" fill="#1a5690" opacity="0.85" text-anchor="middle">3</text>
<text x="87.8" y="265.9" font-family='"Liberation Sans", sans-serif' font-size="3.6" font-weight="bold" fill="#1a5690" opacity="0.85" text-anchor="middle">6</text>
<text x="87.8" y="332.4" font-family='"Liberation Sans", sans-serif' font-size="3.6" font-weight="bold" fill="#1a5690" opacity="0.85" text-anchor="middle">6</text>
<text x="87.8" y="275.6" font-family='"Liberation Sans", sans-serif' font-size="3.6" font-weight="bold" fill="#1a5690" opacity="0.85" text-anchor="middle">9</text>
<text x="87.8" y="322.6" font-family='"Liberation Sans", sans-serif' font-size="3.6" font-weight="bold" fill="#1a5690" opacity="0.85" text-anchor="middle">9</text>
<text x="87.8" y="282.5" font-family='"Liberation Sans", sans-serif' font-size="3.6" font-weight="bold" fill="#1a5690" opacity="0.85" text-anchor="middle">12</text>
<text x="87.8" y="315.7" font-family='"Liberation Sans", sans-serif' font-size="3.6" font-weight="bold" fill="#1a5690" opacity="0.85" text-anchor="middle">12</text>
<text x="87.8" y="290.7" font-family='"Liberation Sans", sans-serif' font-size="3.6" font-weight="bold" fill="#1a5690" opacity="0.85" text-anchor="middle">18</text>
<text x="87.8" y="307.5" font-family='"Liberation Sans", sans-serif' font-size="3.6" font-weight="bold" fill="#1a5690" opacity="0.85" text-anchor="middle">18</text>
<circle cx="87.6" cy="297.8" r="3.4" fill="#2ad24a" stroke="#1a9a36" stroke-width="0.5"/>
<rect x="86.2" y="297.4" width="2.8" height="0.8" fill="#8af09a" opacity="0.7"/>
<rect x="83" y="371" width="627" height="8" fill="#33255b"/>
<rect x="83" y="379" width="627" height="15" fill="#170f38"/>
<rect x="83" y="394.3" width="627" height="12" fill="#b1b1b6"/>
<path d="M83,377 L215.2,377 L232.4,394.3 L710,394.3 L710,406 L83,406Z" fill="url(#bw-tp)"/>
<path d="M83,377 L215.2,377 L232.4,394.3 L710,394.3" fill="none" stroke="#b05a6a" stroke-width="0.6" opacity="0.8"/>
<rect x="99" y="385.3" width="76.2" height="13" rx="7" fill="#9f9aac" opacity="0.85"/>
<circle cx="105" cy="391.8" r="8.2" fill="url(#bw-btn)" stroke="#81768f" stroke-width="1.5"/>
<circle cx="105" cy="391.8" r="7.1" fill="none" stroke="#ffffff" stroke-width="0.6" opacity="0.6"/>
<circle cx="125.7" cy="391.8" r="9.8" fill="url(#bw-btn)" stroke="#81768f" stroke-width="1.5"/>
<circle cx="125.7" cy="391.8" r="8.7" fill="none" stroke="#ffffff" stroke-width="0.6" opacity="0.6"/>
<circle cx="148.5" cy="391.8" r="9.8" fill="url(#bw-btn)" stroke="#81768f" stroke-width="1.5"/>
<circle cx="148.5" cy="391.8" r="8.7" fill="none" stroke="#ffffff" stroke-width="0.6" opacity="0.6"/>
<circle cx="169.2" cy="391.8" r="8.2" fill="url(#bw-btn)" stroke="#81768f" stroke-width="1.5"/>
<circle cx="169.2" cy="391.8" r="7.1" fill="none" stroke="#ffffff" stroke-width="0.6" opacity="0.6"/>
<circle cx="190" cy="391.8" r="6.3" fill="url(#bw-btn)" stroke="#81768f" stroke-width="1.5"/>
<circle cx="190" cy="391.8" r="5.2" fill="none" stroke="#ffffff" stroke-width="0.6" opacity="0.6"/>
<circle cx="207" cy="391.8" r="6.3" fill="url(#bw-btn)" stroke="#81768f" stroke-width="1.5"/>
<circle cx="207" cy="391.8" r="5.2" fill="none" stroke="#ffffff" stroke-width="0.6" opacity="0.6"/>
<rect x="102" y="389.3" width="1.2" height="5" fill="#434d66"/>
<path d="M107.6,394.4 l-3.8,-2.6 l3.8,-2.6z" fill="#434d66"/>
<circle cx="125.7" cy="391.8" r="3.1" fill="#d2303a"/>
<circle cx="125.7" cy="391.8" r="4.2" fill="none" stroke="#c86a70" stroke-width="0.7" opacity="0.6"/>
<path d="M146.3,388.2 l5.8,3.6 l-5.8,3.6z" fill="#434d66"/>
<path d="M166.6,389.2 l3.8,2.6 l-3.8,2.6z" fill="#434d66"/>
<rect x="170.9" y="389.3" width="1.2" height="5" fill="#434d66"/>
<path d="M191.6,389.6 a2.7,2.7 0 1 0 1.1,2.2" fill="none" stroke="#434d66" stroke-width="1.1"/>
<path d="M190.6,388.2 l2.6,0.4 l-1.8,2z" fill="#434d66"/>
<text x="207" y="393.4" font-family='"Liberation Sans", sans-serif' font-size="4.2" font-weight="bold" font-style="italic" fill="#434d66" text-anchor="middle">FX</text>
</g></svg>

<div class="t title" style="left:379px;top:37.6px;">starwaves.vpj</div>
<svg width="870" height="490"><path d="M372.3,38.2 h3.4 l1.6,1.6 v4.8 h-5z" fill="#f6f6f8" stroke="#b4b4ba" stroke-width="0.5" transform="rotate(-14 374.8 41.4)"/></svg>
<div class="t time" style="left:603.6px;top:47.1px;">002:30.680</div>
<div class="abs" style="left:93px;top:64.4px;width:607px;height:8px;overflow:hidden;">
<div class="t rl" style="left:4.2px;top:1.3px;color:#3ab890;">02:30.679916</div>
<div class="t rl" style="left:44.7px;top:1.3px;color:#3ab890;">02:30.679932</div>
<div class="t rl" style="left:85.2px;top:1.3px;color:#3ab890;">02:30.679977</div>
<div class="t rl" style="left:125.7px;top:1.3px;color:#3ab890;">02:30.680023</div>
<div class="t rl" style="left:166.2px;top:1.3px;color:#3ab890;">02:30.680069</div>
<div class="t rl" style="left:206.7px;top:1.3px;color:#3ab890;">02:30.680115</div>
<div class="t rl" style="left:247.2px;top:1.3px;color:#3ab890;">02:30.680161</div>
<div class="t rl" style="left:287.7px;top:1.3px;color:#3ab890;">02:30.680206</div>
<div class="t rl" style="left:328.2px;top:1.3px;color:#3ab890;">02:30.680222</div>
<div class="t rl" style="left:368.7px;top:1.3px;color:#3ab890;">02:30.680267</div>
<div class="t rl" style="left:409.2px;top:1.3px;color:#3ab890;">02:30.680313</div>
<div class="t rl" style="left:449.7px;top:1.3px;color:#3ab890;">02:30.680359</div>
<div class="t rl" style="left:490.2px;top:1.3px;color:#3ab890;">02:30.680405</div>
<div class="t rl" style="left:530.7px;top:1.3px;color:#3ab890;">02:30.680450</div>
<div class="t rl" style="left:571.2px;top:1.3px;color:#3ab890;">02:30.680496</div>
</div>
<div class="abs" style="left:93px;top:217.5px;width:151px;height:8.6px;overflow:hidden;">
<div class="t rl" style="left:4.2px;top:1.6px;color:#74d4d8;">02:30.679916</div>
<div class="t rl" style="left:44.7px;top:1.6px;color:#74d4d8;">02:30.679932</div>
<div class="t rl" style="left:85.2px;top:1.6px;color:#74d4d8;">02:30.679977</div>
<div class="t rl" style="left:125.7px;top:1.6px;color:#74d4d8;">02:30.680023</div>
<div class="t rl" style="left:166.2px;top:1.6px;color:#74d4d8;">02:30.680069</div>
</div>
<div class="t rl" style="left:212.6px;top:72.9px;color:#3f9fd8;font-size:5px;">00:00.000</div>

<div class="abs" style="left:244px;top:129.5px;width:544.5px;height:327.0px;border-radius:4px 4px 3px 3px;box-shadow:0 8px 18px rgba(0,0,0,0.42),0 0 1.5px rgba(0,0,0,0.7);background:#1a1240;"></div>

<svg width="870" height="490">
<defs>
<clipPath id="fw-win"><path d="M248,129.5 h536.5 a4,4 0 0 1 4,4 V453.5 a3,3 0 0 1 -3,3 H247 a3,3 0 0 1 -3,-3 V133.5 a4,4 0 0 1 4,-4z"/></clipPath>
<linearGradient id="fw-tb" x1="0" y1="0" x2="0" y2="1"><stop offset="0" stop-color="#e9e9ea"/><stop offset="1" stop-color="#cfced2"/></linearGradient>
<linearGradient id="fw-td" x1="0" y1="0" x2="0" y2="1"><stop offset="0" stop-color="#cfced2"/><stop offset="1" stop-color="#a8a8b0"/></linearGradient>
<linearGradient id="fw-un" x1="0" y1="0" x2="0" y2="1"><stop offset="0" stop-color="#21578e"/><stop offset="1" stop-color="#2a4489"/></linearGradient>
<linearGradient id="fw-sel" x1="0" y1="0" x2="0" y2="1"><stop offset="0" stop-color="#1a7cb0"/><stop offset="1" stop-color="#16609c"/></linearGradient>
<linearGradient id="fw-mk" x1="0" y1="0" x2="0" y2="1"><stop offset="0" stop-color="#1070a8"/><stop offset="1" stop-color="#135a98"/></linearGradient>
<linearGradient id="fw-tp" x1="0" y1="0" x2="0" y2="1"><stop offset="0" stop-color="#d8d5d9"/><stop offset="0.5" stop-color="#c4c0c5"/><stop offset="0.62" stop-color="#b8b5b9"/><stop offset="1" stop-color="#aaa8ad"/></linearGradient>
<linearGradient id="fw-btn" x1="0" y1="0" x2="0" y2="1"><stop offset="0" stop-color="#e2e2e7"/><stop offset="1" stop-color="#a3a3af"/></linearGradient>
<linearGradient id="fw-meter" x1="0" y1="0" x2="0" y2="1"><stop offset="0" stop-color="#e8615c"/><stop offset="0.1" stop-color="#ea8860"/><stop offset="0.24" stop-color="#e9b468"/><stop offset="0.33" stop-color="#e6d48a"/><stop offset="0.4" stop-color="#9fd48a"/><stop offset="0.48" stop-color="#45c9a0"/><stop offset="0.62" stop-color="#2fa8b0"/><stop offset="1" stop-color="#2890b4"/></linearGradient>
</defs>
<defs><clipPath id="fw-selc"><rect x="433.6" y="160" width="84.9" height="270"/></clipPath>
<clipPath id="fw-unc"><path d="M253.6,160 H433.6 V430 H253.6z M518.5,160 H777.6 V430 H518.5z"/></clipPath></defs>
<g clip-path="url(#fw-win)">
<rect x="244" y="129.5" width="544.5" height="327" fill="#0b417b"/>
<rect x="244" y="129.5" width="544.5" height="11.9" fill="url(#fw-tb)"/>
<rect x="244" y="129.5" width="544.5" height="0.6" fill="#fff" opacity="0.8"/>
<rect x="244" y="140.9" width="544.5" height="0.5" fill="#9a98a0" opacity="0.8"/>
<rect x="244" y="141.4" width="544.5" height="17.9" fill="#0f2f40"/>
<rect x="244" y="159.3" width="544.5" height="7.5" fill="#2f1531"/>
<rect x="253.6" y="166.8" width="524" height="5.8" fill="#0c4484"/>
<circle cx="251.6" cy="135.5" r="3.25" fill="#ee5a55" stroke="#d14540" stroke-width="0.4"/>
<circle cx="262.4" cy="135.5" r="3.25" fill="#f6bd3a" stroke="#d9a030" stroke-width="0.4"/>
<circle cx="273.3" cy="135.5" r="3.25" fill="#2fcc48" stroke="#22a838" stroke-width="0.4"/>
<path d="M254,145.8L255,145.8L255.9,145.8L256.9,145.8L257.9,145.7L258.8,145.7L259.8,145.7L260.7,145.7L261.7,145.7L262.7,145.7L263.6,145.7L264.6,145.7L265.5,145.7L266.5,145.7L267.5,145.7L268.4,145.7L269.4,145.7L270.3,145.7L271.3,145.6L272.3,145.6L273.2,145.6L274.2,145.6L275.1,145.6L276.1,145.6L277.1,145.3L278,145.2L279,145.6L279.9,145.6L280.9,145.6L281.9,145.6L282.8,145.6L283.8,145.6L284.7,145.6L285.7,145.6L286.7,145.6L287.6,145.6L288.6,145.6L289.5,145.6L290.5,145.6L291.5,145.6L292.4,145.6L293.4,145.6L294.3,145.6L295.3,145.6L296.3,145.5L297.2,145.4L298.2,145.4L299.1,145.4L300.1,145.4L301.1,145.5L302,145.5L303,145.5L303.9,145.5L304.9,145.5L305.9,145.5L306.8,144.9L307.8,144.9L308.7,144.9L309.7,144.8L310.7,144.9L311.6,144.9L312.6,144.8L313.5,144.8L314.5,144.8L315.5,144.9L316.4,144.9L317.4,144.9L318.3,144.8L319.3,144.8L320.3,144.8L321.2,144.9L322.2,145L323.1,144.9L324.1,144.8L325.1,144.9L326,144.9L327,144.7L327.9,144.8L328.9,144.8L329.9,144.9L330.8,144.9L331.8,144.7L332.7,144.7L333.7,144.7L334.7,144.6L335.6,144.4L336.6,144.4L337.5,144.5L338.5,144.5L339.5,144.5L340.4,144.6L341.4,144.6L342.3,144.5L343.3,144.1L344.3,144L345.2,143.9L346.2,144L347.1,144.2L348.1,144.5L349.1,144.6L350,144.5L351,144.5L351.9,144.2L352.9,144.5L353.9,144.2L354.8,144.3L355.8,144.4L356.7,144.2L357.7,144.3L358.7,144.2L359.6,144.6L360.6,144.3L361.5,143.8L362.5,143.9L363.5,144.1L364.4,144L365.4,144L366.3,144.1L367.3,143.7L368.3,143.8L369.2,143.6L370.2,143.5L371.1,143.4L372.1,143.5L373.1,143.7L374,143.8L375,143.7L375.9,143.4L376.9,143.6L377.9,143.3L378.8,142.7L379.8,142.4L380.7,143L381.7,143.3L382.7,143.5L383.6,143.7L384.6,143.4L385.5,143.4L386.5,143.5L387.5,143.7L388.4,143.7L389.4,143.4L390.3,143.5L391.3,143.3L392.3,143.3L393.2,143.7L394.2,143.7L395.1,143.4L396.1,143.5L397.1,143.4L398,142.8L399,143.2L399.9,143.1L400.9,142.9L401.9,142.7L402.8,142.7L403.8,142.7L404.7,143.2L405.7,142.7L406.7,142.9L407.6,142.8L408.6,142.4L409.5,142.8L410.5,142.8L411.5,142.4L412.4,142.7L413.4,142.5L414.3,142.6L415.3,142.8L416.3,142.8L417.2,142.9L418.2,143.1L419.1,143.1L420.1,142.5L421.1,142.9L422,142.8L423,143.1L423.9,142.5L424.9,142.8L425.9,142.5L426.8,142.5L427.8,142.6L428.7,142.8L429.7,143L430.7,143.1L431.6,142.6L432.6,142.7L433.5,142.9L434.5,143L435.5,143L436.4,143L437.4,142.9L438.3,142.9L439.3,142.5L440.3,142.7L441.2,142.9L442.2,142.6L443.1,142.7L444.1,142.4L445.1,141.8L446,141.8L447,141.9L447.9,141.5L448.9,141.4L449.9,141.9L450.8,141.6L451.8,141.9L452.7,141.5L453.7,141.6L454.7,141.6L455.6,142.2L456.6,141.9L457.5,142.3L458.5,141.3L459.5,142.1L460.4,141.6L461.4,141.8L462.3,142.1L463.3,142.1L464.3,141.7L465.2,141.6L466.2,142.2L467.1,143.2L468.1,143.2L469.1,143.3L470,142.8L471,143.4L471.9,143.6L472.9,143.1L473.9,143.2L474.8,143.3L475.8,143.5L476.7,143.8L477.7,143.9L478.7,143.6L479.6,143.8L480.6,144.2L481.5,143.9L482.5,144.4L483.5,144.2L484.4,144.5L485.4,144.3L486.3,144.6L487.3,144.5L488.3,144.8L489.2,144.7L490.2,144.8L491.1,144.7L492.1,144.8L493.1,144.7L494,144.7L495,144.8L495.9,144.9L496.9,144.9L497.9,144.8L498.8,144.6L499.8,144.9L500.7,144.8L501.7,144.7L502.7,144.7L503.6,144.8L504.6,144.7L505.5,144.8L506.5,144.8L507.5,144.8L508.4,144.8L509.4,144.8L510.3,144.9L511.3,144.9L512.3,144.7L513.2,144.9L514.2,144.8L515.1,144.9L516.1,145L517.1,144.9L518,145L519,145L519.9,145.1L520.9,145L521.9,145.1L522.8,145.1L523.8,145L524.7,144.9L525.7,145L526.7,145L527.6,144.8L528.6,144.8L529.5,144.7L530.5,144.5L531.5,144.5L532.4,144L533.4,144.2L534.3,144.3L535.3,144.7L536.3,144.2L537.2,144L538.2,143.1L539.1,142.9L540.1,142.1L541.1,141.8L542,142L543,142.4L543.9,142L544.9,142L545.9,142.1L546.8,142L547.8,141.8L548.7,142.1L549.7,142.2L550.7,142.1L551.6,142.5L552.6,142.5L553.5,141.6L554.5,141.6L555.5,142.3L556.4,141.6L557.4,141.6L558.3,141.8L559.3,142.2L560.3,142L561.2,142.2L562.2,142.3L563.1,141.8L564.1,141.7L565.1,141.9L566,142L567,141.5L567.9,141.7L568.9,142L569.9,142.1L570.8,141.7L571.8,141.6L572.7,142.2L573.7,142.4L574.7,142.1L575.6,141.9L576.6,142.2L577.5,142.3L578.5,142.4L579.5,142.4L580.4,142.5L581.4,141.8L582.3,142.5L583.3,142.2L584.3,141.6L585.2,142.5L586.2,142.3L587.1,142.5L588.1,142.4L589.1,142L590,142.2L591,141.6L591.9,142.5L592.9,142L593.9,142.3L594.8,142.1L595.8,141.7L596.7,141.9L597.7,142L598.7,141.6L599.6,142.2L600.6,141.6L601.5,141.7L602.5,141.6L603.5,141.6L604.4,141.9L605.4,141.8L606.3,142.3L607.3,141.7L608.3,141.7L609.2,142.5L610.2,142L611.1,142.6L612.1,142.1L613.1,142.3L614,143.3L615,143.8L615.9,143.9L616.9,144.4L617.9,144.6L618.8,144.7L619.8,144.7L620.7,144.7L621.7,144.8L622.7,144.8L623.6,144.8L624.6,144.9L625.5,145L626.5,144.8L627.5,144.8L628.4,144.9L629.4,144.7L630.3,144.8L631.3,144.9L632.3,144.7L633.2,144.7L634.2,144.7L635.1,144.6L636.1,144.5L637.1,144.3L638,144.1L639,144.2L639.9,144L640.9,143.8L641.9,143.9L642.8,143.9L643.8,143.5L644.7,143.7L645.7,143.6L646.7,143.4L647.6,143.9L648.6,143.6L649.5,144L650.5,144.1L651.5,144L652.4,144.2L653.4,144.3L654.3,144.3L655.3,144.6L656.3,144.6L657.2,144.7L658.2,144.9L659.1,145.1L660.1,145L661.1,145.2L662,145.2L663,145.3L663.9,145.4L664.9,145.5L665.9,145.6L666.8,145.6L667.8,145.7L668.7,145.7L669.7,145.8L670.7,145.8L670.7,146.4L669.7,146.4L668.7,146.5L667.8,146.5L666.8,146.6L665.9,146.6L664.9,146.7L663.9,146.8L663,146.9L662,147L661.1,147L660.1,147.2L659.1,147.1L658.2,147.3L657.2,147.5L656.3,147.6L655.3,147.6L654.3,147.9L653.4,147.9L652.4,148L651.5,148.2L650.5,148.1L649.5,148.2L648.6,148.6L647.6,148.3L646.7,148.8L645.7,148.6L644.7,148.5L643.8,148.7L642.8,148.3L641.9,148.3L640.9,148.4L639.9,148.2L639,148L638,148.1L637.1,147.9L636.1,147.7L635.1,147.6L634.2,147.5L633.2,147.5L632.3,147.5L631.3,147.3L630.3,147.4L629.4,147.5L628.4,147.3L627.5,147.4L626.5,147.4L625.5,147.2L624.6,147.3L623.6,147.4L622.7,147.4L621.7,147.4L620.7,147.5L619.8,147.5L618.8,147.5L617.9,147.6L616.9,147.8L615.9,148.3L615,148.4L614,148.9L613.1,149.9L612.1,150.1L611.1,149.6L610.2,150.2L609.2,149.7L608.3,150.5L607.3,150.5L606.3,149.9L605.4,150.4L604.4,150.3L603.5,150.6L602.5,150.6L601.5,150.5L600.6,150.6L599.6,150L598.7,150.6L597.7,150.2L596.7,150.3L595.8,150.5L594.8,150.1L593.9,149.9L592.9,150.2L591.9,149.7L591,150.6L590,150L589.1,150.2L588.1,149.8L587.1,149.7L586.2,149.9L585.2,149.7L584.3,150.6L583.3,150L582.3,149.7L581.4,150.4L580.4,149.7L579.5,149.8L578.5,149.8L577.5,149.9L576.6,150L575.6,150.3L574.7,150.1L573.7,149.8L572.7,150L571.8,150.6L570.8,150.5L569.9,150.1L568.9,150.2L567.9,150.5L567,150.7L566,150.2L565.1,150.3L564.1,150.5L563.1,150.4L562.2,149.9L561.2,150L560.3,150.2L559.3,150L558.3,150.4L557.4,150.6L556.4,150.6L555.5,149.9L554.5,150.6L553.5,150.6L552.6,149.7L551.6,149.7L550.7,150.1L549.7,150L548.7,150.1L547.8,150.4L546.8,150.2L545.9,150.1L544.9,150.2L543.9,150.2L543,149.8L542,150.2L541.1,150.4L540.1,150.1L539.1,149.3L538.2,149.1L537.2,148.2L536.3,148L535.3,147.5L534.3,147.9L533.4,148L532.4,148.2L531.5,147.7L530.5,147.7L529.5,147.5L528.6,147.4L527.6,147.4L526.7,147.2L525.7,147.2L524.7,147.3L523.8,147.2L522.8,147.1L521.9,147.1L520.9,147.2L519.9,147.1L519,147.2L518,147.2L517.1,147.3L516.1,147.2L515.1,147.3L514.2,147.4L513.2,147.3L512.3,147.5L511.3,147.3L510.3,147.3L509.4,147.4L508.4,147.4L507.5,147.4L506.5,147.4L505.5,147.4L504.6,147.5L503.6,147.4L502.7,147.5L501.7,147.5L500.7,147.4L499.8,147.3L498.8,147.6L497.9,147.4L496.9,147.3L495.9,147.3L495,147.4L494,147.5L493.1,147.5L492.1,147.4L491.1,147.5L490.2,147.4L489.2,147.5L488.3,147.4L487.3,147.7L486.3,147.6L485.4,147.9L484.4,147.7L483.5,148L482.5,147.8L481.5,148.3L480.6,148L479.6,148.4L478.7,148.6L477.7,148.3L476.7,148.4L475.8,148.7L474.8,148.9L473.9,149L472.9,149.1L471.9,148.6L471,148.8L470,149.4L469.1,148.9L468.1,149L467.1,149L466.2,150L465.2,150.6L464.3,150.5L463.3,150.1L462.3,150.1L461.4,150.4L460.4,150.6L459.5,150.1L458.5,150.9L457.5,149.9L456.6,150.3L455.6,150L454.7,150.6L453.7,150.6L452.7,150.7L451.8,150.3L450.8,150.6L449.9,150.3L448.9,150.8L447.9,150.7L447,150.3L446,150.4L445.1,150.4L444.1,149.8L443.1,149.5L442.2,149.6L441.2,149.3L440.3,149.5L439.3,149.7L438.3,149.3L437.4,149.3L436.4,149.2L435.5,149.2L434.5,149.2L433.5,149.3L432.6,149.5L431.6,149.6L430.7,149.1L429.7,149.2L428.7,149.4L427.8,149.6L426.8,149.7L425.9,149.7L424.9,149.4L423.9,149.7L423,149.1L422,149.4L421.1,149.3L420.1,149.7L419.1,149.1L418.2,149.1L417.2,149.3L416.3,149.4L415.3,149.4L414.3,149.6L413.4,149.7L412.4,149.5L411.5,149.8L410.5,149.4L409.5,149.4L408.6,149.8L407.6,149.4L406.7,149.3L405.7,149.5L404.7,149L403.8,149.5L402.8,149.5L401.9,149.5L400.9,149.3L399.9,149.1L399,149L398,149.4L397.1,148.8L396.1,148.7L395.1,148.8L394.2,148.5L393.2,148.5L392.3,148.9L391.3,148.9L390.3,148.7L389.4,148.8L388.4,148.5L387.5,148.5L386.5,148.7L385.5,148.8L384.6,148.8L383.6,148.5L382.7,148.7L381.7,148.9L380.7,149.2L379.8,149.8L378.8,149.5L377.9,148.9L376.9,148.6L375.9,148.8L375,148.5L374,148.4L373.1,148.5L372.1,148.7L371.1,148.8L370.2,148.7L369.2,148.6L368.3,148.4L367.3,148.5L366.3,148.1L365.4,148.2L364.4,148.2L363.5,148.1L362.5,148.3L361.5,148.4L360.6,147.9L359.6,147.6L358.7,148L357.7,147.9L356.7,148L355.8,147.8L354.8,147.9L353.9,148L352.9,147.7L351.9,148L351,147.7L350,147.7L349.1,147.6L348.1,147.7L347.1,148L346.2,148.2L345.2,148.3L344.3,148.2L343.3,148.1L342.3,147.7L341.4,147.6L340.4,147.6L339.5,147.7L338.5,147.7L337.5,147.7L336.6,147.8L335.6,147.8L334.7,147.6L333.7,147.5L332.7,147.5L331.8,147.5L330.8,147.3L329.9,147.3L328.9,147.4L327.9,147.4L327,147.5L326,147.3L325.1,147.3L324.1,147.4L323.1,147.3L322.2,147.2L321.2,147.3L320.3,147.4L319.3,147.4L318.3,147.4L317.4,147.3L316.4,147.3L315.5,147.3L314.5,147.4L313.5,147.4L312.6,147.4L311.6,147.3L310.7,147.3L309.7,147.4L308.7,147.3L307.8,147.3L306.8,147.3L305.9,146.7L304.9,146.7L303.9,146.7L303,146.7L302,146.7L301.1,146.7L300.1,146.8L299.1,146.8L298.2,146.8L297.2,146.8L296.3,146.7L295.3,146.6L294.3,146.6L293.4,146.6L292.4,146.6L291.5,146.6L290.5,146.6L289.5,146.6L288.6,146.6L287.6,146.6L286.7,146.6L285.7,146.6L284.7,146.6L283.8,146.6L282.8,146.6L281.9,146.6L280.9,146.6L279.9,146.6L279,146.6L278,147L277.1,146.9L276.1,146.6L275.1,146.6L274.2,146.6L273.2,146.6L272.3,146.6L271.3,146.6L270.3,146.5L269.4,146.5L268.4,146.5L267.5,146.5L266.5,146.5L265.5,146.5L264.6,146.5L263.6,146.5L262.7,146.5L261.7,146.5L260.7,146.5L259.8,146.5L258.8,146.5L257.9,146.5L256.9,146.4L255.9,146.4L255,146.4L254,146.4Z" fill="#20cf55"/>
<path d="M254,154.7L255,154.7L255.9,154.7L256.9,154.7L257.9,154.6L258.8,154.6L259.8,154.6L260.7,154.6L261.7,154.6L262.7,154.6L263.6,154.6L264.6,154.6L265.5,154.6L266.5,154.6L267.5,154.6L268.4,154.6L269.4,154.6L270.3,154.6L271.3,154.5L272.3,154.5L273.2,154.5L274.2,154.5L275.1,154.5L276.1,154.5L277.1,154.2L278,154.1L279,154.5L279.9,154.5L280.9,154.5L281.9,154.5L282.8,154.5L283.8,154.5L284.7,154.5L285.7,154.5L286.7,154.5L287.6,154.5L288.6,154.5L289.5,154.5L290.5,154.5L291.5,154.5L292.4,154.5L293.4,154.5L294.3,154.5L295.3,154.5L296.3,154.4L297.2,154.3L298.2,154.3L299.1,154.3L300.1,154.3L301.1,154.4L302,154.4L303,154.4L303.9,154.4L304.9,154.4L305.9,154.4L306.8,153.8L307.8,153.8L308.7,153.8L309.7,153.7L310.7,153.8L311.6,153.8L312.6,153.7L313.5,153.7L314.5,153.7L315.5,153.8L316.4,153.8L317.4,153.8L318.3,153.7L319.3,153.7L320.3,153.7L321.2,153.8L322.2,153.9L323.1,153.8L324.1,153.7L325.1,153.8L326,153.8L327,153.6L327.9,153.7L328.9,153.7L329.9,153.8L330.8,153.8L331.8,153.6L332.7,153.6L333.7,153.6L334.7,153.5L335.6,153.3L336.6,153.3L337.5,153.4L338.5,153.4L339.5,153.4L340.4,153.5L341.4,153.5L342.3,153.4L343.3,153L344.3,152.9L345.2,152.8L346.2,152.9L347.1,153.1L348.1,153.4L349.1,153.5L350,153.4L351,153.4L351.9,153.1L352.9,153.4L353.9,153.1L354.8,153.2L355.8,153.3L356.7,153.1L357.7,153.2L358.7,153.1L359.6,153.5L360.6,153.2L361.5,152.7L362.5,152.8L363.5,153L364.4,152.9L365.4,152.9L366.3,153L367.3,152.6L368.3,152.7L369.2,152.5L370.2,152.4L371.1,152.3L372.1,152.4L373.1,152.6L374,152.7L375,152.6L375.9,152.3L376.9,152.5L377.9,152.2L378.8,151.6L379.8,151.3L380.7,151.9L381.7,152.2L382.7,152.4L383.6,152.6L384.6,152.3L385.5,152.3L386.5,152.4L387.5,152.6L388.4,152.6L389.4,152.3L390.3,152.4L391.3,152.2L392.3,152.2L393.2,152.6L394.2,152.6L395.1,152.3L396.1,152.4L397.1,152.3L398,151.7L399,152.1L399.9,152L400.9,151.8L401.9,151.6L402.8,151.6L403.8,151.6L404.7,152.1L405.7,151.6L406.7,151.8L407.6,151.7L408.6,151.3L409.5,151.7L410.5,151.7L411.5,151.3L412.4,151.6L413.4,151.4L414.3,151.5L415.3,151.7L416.3,151.7L417.2,151.8L418.2,152L419.1,152L420.1,151.4L421.1,151.8L422,151.7L423,152L423.9,151.4L424.9,151.7L425.9,151.4L426.8,151.4L427.8,151.5L428.7,151.7L429.7,151.9L430.7,152L431.6,151.5L432.6,151.6L433.5,151.8L434.5,151.9L435.5,151.9L436.4,151.9L437.4,151.8L438.3,151.8L439.3,151.4L440.3,151.6L441.2,151.8L442.2,151.5L443.1,151.6L444.1,151.3L445.1,150.7L446,150.7L447,150.8L447.9,150.4L448.9,150.3L449.9,150.8L450.8,150.5L451.8,150.8L452.7,150.4L453.7,150.5L454.7,150.5L455.6,151.1L456.6,150.8L457.5,151.2L458.5,150.2L459.5,151L460.4,150.5L461.4,150.7L462.3,151L463.3,151L464.3,150.6L465.2,150.5L466.2,151.1L467.1,152.1L468.1,152.1L469.1,152.2L470,151.7L471,152.3L471.9,152.5L472.9,152L473.9,152.1L474.8,152.2L475.8,152.4L476.7,152.7L477.7,152.8L478.7,152.5L479.6,152.7L480.6,153.1L481.5,152.8L482.5,153.3L483.5,153.1L484.4,153.4L485.4,153.2L486.3,153.5L487.3,153.4L488.3,153.7L489.2,153.6L490.2,153.7L491.1,153.6L492.1,153.7L493.1,153.6L494,153.6L495,153.7L495.9,153.8L496.9,153.8L497.9,153.7L498.8,153.5L499.8,153.8L500.7,153.7L501.7,153.6L502.7,153.6L503.6,153.7L504.6,153.6L505.5,153.7L506.5,153.7L507.5,153.7L508.4,153.7L509.4,153.7L510.3,153.8L511.3,153.8L512.3,153.6L513.2,153.8L514.2,153.7L515.1,153.8L516.1,153.9L517.1,153.8L518,153.9L519,153.9L519.9,154L520.9,153.9L521.9,154L522.8,154L523.8,153.9L524.7,153.8L525.7,153.9L526.7,153.9L527.6,153.7L528.6,153.7L529.5,153.6L530.5,153.4L531.5,153.4L532.4,152.9L533.4,153.1L534.3,153.2L535.3,153.6L536.3,153.1L537.2,152.9L538.2,152L539.1,151.8L540.1,151L541.1,150.7L542,150.9L543,151.3L543.9,150.9L544.9,150.9L545.9,151L546.8,150.9L547.8,150.7L548.7,151L549.7,151.1L550.7,151L551.6,151.4L552.6,151.4L553.5,150.5L554.5,150.5L555.5,151.2L556.4,150.5L557.4,150.5L558.3,150.7L559.3,151.1L560.3,150.9L561.2,151.1L562.2,151.2L563.1,150.7L564.1,150.6L565.1,150.8L566,150.9L567,150.4L567.9,150.6L568.9,150.9L569.9,151L570.8,150.6L571.8,150.5L572.7,151.1L573.7,151.3L574.7,151L575.6,150.8L576.6,151.1L577.5,151.2L578.5,151.3L579.5,151.3L580.4,151.4L581.4,150.7L582.3,151.4L583.3,151.1L584.3,150.5L585.2,151.4L586.2,151.2L587.1,151.4L588.1,151.3L589.1,150.9L590,151.1L591,150.5L591.9,151.4L592.9,150.9L593.9,151.2L594.8,151L595.8,150.6L596.7,150.8L597.7,150.9L598.7,150.5L599.6,151.1L600.6,150.5L601.5,150.6L602.5,150.5L603.5,150.5L604.4,150.8L605.4,150.7L606.3,151.2L607.3,150.6L608.3,150.6L609.2,151.4L610.2,150.9L611.1,151.5L612.1,151L613.1,151.2L614,152.2L615,152.7L615.9,152.8L616.9,153.3L617.9,153.5L618.8,153.6L619.8,153.6L620.7,153.6L621.7,153.7L622.7,153.7L623.6,153.7L624.6,153.8L625.5,153.9L626.5,153.7L627.5,153.7L628.4,153.8L629.4,153.6L630.3,153.7L631.3,153.8L632.3,153.6L633.2,153.6L634.2,153.6L635.1,153.5L636.1,153.4L637.1,153.2L638,153L639,153.1L639.9,152.9L640.9,152.7L641.9,152.8L642.8,152.8L643.8,152.4L644.7,152.6L645.7,152.5L646.7,152.3L647.6,152.8L648.6,152.5L649.5,152.9L650.5,153L651.5,152.9L652.4,153.1L653.4,153.2L654.3,153.2L655.3,153.5L656.3,153.5L657.2,153.6L658.2,153.8L659.1,154L660.1,153.9L661.1,154.1L662,154.1L663,154.2L663.9,154.3L664.9,154.4L665.9,154.5L666.8,154.5L667.8,154.6L668.7,154.6L669.7,154.7L670.7,154.7L670.7,155.3L669.7,155.3L668.7,155.4L667.8,155.4L666.8,155.5L665.9,155.5L664.9,155.6L663.9,155.7L663,155.8L662,155.9L661.1,155.9L660.1,156.1L659.1,156L658.2,156.2L657.2,156.4L656.3,156.5L655.3,156.5L654.3,156.8L653.4,156.8L652.4,156.9L651.5,157.1L650.5,157L649.5,157.1L648.6,157.5L647.6,157.2L646.7,157.7L645.7,157.5L644.7,157.4L643.8,157.6L642.8,157.2L641.9,157.2L640.9,157.3L639.9,157.1L639,156.9L638,157L637.1,156.8L636.1,156.6L635.1,156.5L634.2,156.4L633.2,156.4L632.3,156.4L631.3,156.2L630.3,156.3L629.4,156.4L628.4,156.2L627.5,156.3L626.5,156.3L625.5,156.1L624.6,156.2L623.6,156.3L622.7,156.3L621.7,156.3L620.7,156.4L619.8,156.4L618.8,156.4L617.9,156.5L616.9,156.7L615.9,157.2L615,157.3L614,157.8L613.1,158.8L612.1,159L611.1,158.5L610.2,159.1L609.2,158.6L608.3,159.4L607.3,159.4L606.3,158.8L605.4,159.3L604.4,159.2L603.5,159.5L602.5,159.5L601.5,159.4L600.6,159.5L599.6,158.9L598.7,159.5L597.7,159.1L596.7,159.2L595.8,159.4L594.8,159L593.9,158.8L592.9,159.1L591.9,158.6L591,159.5L590,158.9L589.1,159.1L588.1,158.7L587.1,158.6L586.2,158.8L585.2,158.6L584.3,159.5L583.3,158.9L582.3,158.6L581.4,159.3L580.4,158.6L579.5,158.7L578.5,158.7L577.5,158.8L576.6,158.9L575.6,159.2L574.7,159L573.7,158.7L572.7,158.9L571.8,159.5L570.8,159.4L569.9,159L568.9,159.1L567.9,159.4L567,159.6L566,159.1L565.1,159.2L564.1,159.4L563.1,159.3L562.2,158.8L561.2,158.9L560.3,159.1L559.3,158.9L558.3,159.3L557.4,159.5L556.4,159.5L555.5,158.8L554.5,159.5L553.5,159.5L552.6,158.6L551.6,158.6L550.7,159L549.7,158.9L548.7,159L547.8,159.3L546.8,159.1L545.9,159L544.9,159.1L543.9,159.1L543,158.7L542,159.1L541.1,159.3L540.1,159L539.1,158.2L538.2,158L537.2,157.1L536.3,156.9L535.3,156.4L534.3,156.8L533.4,156.9L532.4,157.1L531.5,156.6L530.5,156.6L529.5,156.4L528.6,156.3L527.6,156.3L526.7,156.1L525.7,156.1L524.7,156.2L523.8,156.1L522.8,156L521.9,156L520.9,156.1L519.9,156L519,156.1L518,156.1L517.1,156.2L516.1,156.1L515.1,156.2L514.2,156.3L513.2,156.2L512.3,156.4L511.3,156.2L510.3,156.2L509.4,156.3L508.4,156.3L507.5,156.3L506.5,156.3L505.5,156.3L504.6,156.4L503.6,156.3L502.7,156.4L501.7,156.4L500.7,156.3L499.8,156.2L498.8,156.5L497.9,156.3L496.9,156.2L495.9,156.2L495,156.3L494,156.4L493.1,156.4L492.1,156.3L491.1,156.4L490.2,156.3L489.2,156.4L488.3,156.3L487.3,156.6L486.3,156.5L485.4,156.8L484.4,156.6L483.5,156.9L482.5,156.7L481.5,157.2L480.6,156.9L479.6,157.3L478.7,157.5L477.7,157.2L476.7,157.3L475.8,157.6L474.8,157.8L473.9,157.9L472.9,158L471.9,157.5L471,157.7L470,158.3L469.1,157.8L468.1,157.9L467.1,157.9L466.2,158.9L465.2,159.5L464.3,159.4L463.3,159L462.3,159L461.4,159.3L460.4,159.5L459.5,159L458.5,159.8L457.5,158.8L456.6,159.2L455.6,158.9L454.7,159.5L453.7,159.5L452.7,159.6L451.8,159.2L450.8,159.5L449.9,159.2L448.9,159.7L447.9,159.6L447,159.2L446,159.3L445.1,159.3L444.1,158.7L443.1,158.4L442.2,158.5L441.2,158.2L440.3,158.4L439.3,158.6L438.3,158.2L437.4,158.2L436.4,158.1L435.5,158.1L434.5,158.1L433.5,158.2L432.6,158.4L431.6,158.5L430.7,158L429.7,158.1L428.7,158.3L427.8,158.5L426.8,158.6L425.9,158.6L424.9,158.3L423.9,158.6L423,158L422,158.3L421.1,158.2L420.1,158.6L419.1,158L418.2,158L417.2,158.2L416.3,158.3L415.3,158.3L414.3,158.5L413.4,158.6L412.4,158.4L411.5,158.7L410.5,158.3L409.5,158.3L408.6,158.7L407.6,158.3L406.7,158.2L405.7,158.4L404.7,157.9L403.8,158.4L402.8,158.4L401.9,158.4L400.9,158.2L399.9,158L399,157.9L398,158.3L397.1,157.7L396.1,157.6L395.1,157.7L394.2,157.4L393.2,157.4L392.3,157.8L391.3,157.8L390.3,157.6L389.4,157.7L388.4,157.4L387.5,157.4L386.5,157.6L385.5,157.7L384.6,157.7L383.6,157.4L382.7,157.6L381.7,157.8L380.7,158.1L379.8,158.7L378.8,158.4L377.9,157.8L376.9,157.5L375.9,157.7L375,157.4L374,157.3L373.1,157.4L372.1,157.6L371.1,157.7L370.2,157.6L369.2,157.5L368.3,157.3L367.3,157.4L366.3,157L365.4,157.1L364.4,157.1L363.5,157L362.5,157.2L361.5,157.3L360.6,156.8L359.6,156.5L358.7,156.9L357.7,156.8L356.7,156.9L355.8,156.7L354.8,156.8L353.9,156.9L352.9,156.6L351.9,156.9L351,156.6L350,156.6L349.1,156.5L348.1,156.6L347.1,156.9L346.2,157.1L345.2,157.2L344.3,157.1L343.3,157L342.3,156.6L341.4,156.5L340.4,156.5L339.5,156.6L338.5,156.6L337.5,156.6L336.6,156.7L335.6,156.7L334.7,156.5L333.7,156.4L332.7,156.4L331.8,156.4L330.8,156.2L329.9,156.2L328.9,156.3L327.9,156.3L327,156.4L326,156.2L325.1,156.2L324.1,156.3L323.1,156.2L322.2,156.1L321.2,156.2L320.3,156.3L319.3,156.3L318.3,156.3L317.4,156.2L316.4,156.2L315.5,156.2L314.5,156.3L313.5,156.3L312.6,156.3L311.6,156.2L310.7,156.2L309.7,156.3L308.7,156.2L307.8,156.2L306.8,156.2L305.9,155.6L304.9,155.6L303.9,155.6L303,155.6L302,155.6L301.1,155.6L300.1,155.7L299.1,155.7L298.2,155.7L297.2,155.7L296.3,155.6L295.3,155.5L294.3,155.5L293.4,155.5L292.4,155.5L291.5,155.5L290.5,155.5L289.5,155.5L288.6,155.5L287.6,155.5L286.7,155.5L285.7,155.5L284.7,155.5L283.8,155.5L282.8,155.5L281.9,155.5L280.9,155.5L279.9,155.5L279,155.5L278,155.9L277.1,155.8L276.1,155.5L275.1,155.5L274.2,155.5L273.2,155.5L272.3,155.5L271.3,155.5L270.3,155.4L269.4,155.4L268.4,155.4L267.5,155.4L266.5,155.4L265.5,155.4L264.6,155.4L263.6,155.4L262.7,155.4L261.7,155.4L260.7,155.4L259.8,155.4L258.8,155.4L257.9,155.4L256.9,155.3L255.9,155.3L255,155.3L254,155.3Z" fill="#20cf55"/>
<rect x="254.6" y="143" width="1.4" height="15" fill="#e8955a"/>
<rect x="490" y="142" width="0.9" height="17" fill="#e8955a" opacity="0.8"/>
<path d="M661,140.8 L788.5,140.8 L788.5,158.9 L676,158.9Z" fill="url(#fw-td)"/>
<path d="M661,141.1 L676,158.9 L788.5,158.9" fill="none" stroke="#3a1830" stroke-width="0.7" opacity="0.55"/>
<g transform="translate(772,150.2)" fill="#6f5a68" stroke="none">
<path d="M-5.2,-1.6 h2 l3,-2.6 v8.4 l-3,-2.6 h-2z"/>
<path d="M1.3,-2 a2.8,2.8 0 0 1 0,4" fill="none" stroke="#6f5a68" stroke-width="1"/>
<path d="M2.7,-3.6 a4.8,4.8 0 0 1 0,7.2" fill="none" stroke="#6f5a68" stroke-width="1"/>
</g>
<circle cx="251.6" cy="135.5" r="1.3" fill="#5a1010"/>
<rect x="253.6" y="167" width="524" height="122.7" fill="#0b417b"/>
<rect x="253.6" y="173" width="524" height="110.7" fill="url(#fw-un)"/>
<rect x="320" y="173" width="68" height="110.7" fill="url(#fw-mk)"/>
<rect x="433.6" y="173" width="84.9" height="110.7" fill="url(#fw-sel)"/>
<rect x="253.6" y="172.6" width="524" height="0.9" fill="#2fb09a" opacity="0.8"/>
<rect x="253.6" y="283.2" width="524" height="0.9" fill="#2fb09a" opacity="0.8"/>
<rect x="253.6" y="188.7" width="524" height="0.9" fill="#3fa6cc" opacity="0.37"/>
<rect x="253.6" y="267.1" width="524" height="0.9" fill="#3fa6cc" opacity="0.37"/>
<rect x="253.6" y="200.2" width="524" height="0.9" fill="#3fa6cc" opacity="0.37"/>
<rect x="253.6" y="255.6" width="524" height="0.9" fill="#3fa6cc" opacity="0.37"/>
<rect x="253.6" y="208.3" width="524" height="0.9" fill="#3fa6cc" opacity="0.37"/>
<rect x="253.6" y="247.5" width="524" height="0.9" fill="#3fa6cc" opacity="0.37"/>
<rect x="253.6" y="214.1" width="524" height="0.9" fill="#3fa6cc" opacity="0.37"/>
<rect x="253.6" y="241.7" width="524" height="0.9" fill="#3fa6cc" opacity="0.37"/>
<rect x="253.6" y="220.9" width="524" height="0.9" fill="#3fa6cc" opacity="0.37"/>
<rect x="253.6" y="234.9" width="524" height="0.9" fill="#3fa6cc" opacity="0.37"/>
<rect x="253.6" y="227.9" width="524" height="0.9" fill="#3fa6cc" opacity="0.45"/>
<rect x="291.2" y="173" width="0.8" height="110.7" fill="#3fa6cc" opacity="0.2"/>
<rect x="329.2" y="173" width="0.8" height="110.7" fill="#3fa6cc" opacity="0.2"/>
<rect x="367.2" y="173" width="0.8" height="110.7" fill="#3fa6cc" opacity="0.2"/>
<rect x="405.2" y="173" width="0.8" height="110.7" fill="#3fa6cc" opacity="0.2"/>
<rect x="443.2" y="173" width="0.8" height="110.7" fill="#3fa6cc" opacity="0.2"/>
<rect x="481.2" y="173" width="0.8" height="110.7" fill="#3fa6cc" opacity="0.2"/>
<rect x="519.2" y="173" width="0.8" height="110.7" fill="#3fa6cc" opacity="0.2"/>
<rect x="557.2" y="173" width="0.8" height="110.7" fill="#3fa6cc" opacity="0.2"/>
<rect x="595.2" y="173" width="0.8" height="110.7" fill="#3fa6cc" opacity="0.2"/>
<rect x="633.2" y="173" width="0.8" height="110.7" fill="#3fa6cc" opacity="0.2"/>
<rect x="671.2" y="173" width="0.8" height="110.7" fill="#3fa6cc" opacity="0.2"/>
<rect x="709.2" y="173" width="0.8" height="110.7" fill="#3fa6cc" opacity="0.2"/>
<rect x="747.2" y="173" width="0.8" height="110.7" fill="#3fa6cc" opacity="0.2"/>
<rect x="253.6" y="298.2" width="524" height="122.8" fill="#0b417b"/>
<rect x="253.6" y="304.2" width="524" height="110.8" fill="url(#fw-un)"/>
<rect x="320" y="304.2" width="68" height="110.8" fill="url(#fw-mk)"/>
<rect x="433.6" y="304.2" width="84.9" height="110.8" fill="url(#fw-sel)"/>
<rect x="253.6" y="303.8" width="524" height="0.9" fill="#2fb09a" opacity="0.8"/>
<rect x="253.6" y="414.6" width="524" height="0.9" fill="#2fb09a" opacity="0.8"/>
<rect x="253.6" y="319.9" width="524" height="0.9" fill="#3fa6cc" opacity="0.37"/>
<rect x="253.6" y="398.4" width="524" height="0.9" fill="#3fa6cc" opacity="0.37"/>
<rect x="253.6" y="331.5" width="524" height="0.9" fill="#3fa6cc" opacity="0.37"/>
<rect x="253.6" y="386.9" width="524" height="0.9" fill="#3fa6cc" opacity="0.37"/>
<rect x="253.6" y="339.5" width="524" height="0.9" fill="#3fa6cc" opacity="0.37"/>
<rect x="253.6" y="378.8" width="524" height="0.9" fill="#3fa6cc" opacity="0.37"/>
<rect x="253.6" y="345.3" width="524" height="0.9" fill="#3fa6cc" opacity="0.37"/>
<rect x="253.6" y="373" width="524" height="0.9" fill="#3fa6cc" opacity="0.37"/>
<rect x="253.6" y="352.2" width="524" height="0.9" fill="#3fa6cc" opacity="0.37"/>
<rect x="253.6" y="366.1" width="524" height="0.9" fill="#3fa6cc" opacity="0.37"/>
<rect x="253.6" y="359.2" width="524" height="0.9" fill="#3fa6cc" opacity="0.45"/>
<rect x="291.2" y="304.2" width="0.8" height="110.8" fill="#3fa6cc" opacity="0.2"/>
<rect x="329.2" y="304.2" width="0.8" height="110.8" fill="#3fa6cc" opacity="0.2"/>
<rect x="367.2" y="304.2" width="0.8" height="110.8" fill="#3fa6cc" opacity="0.2"/>
<rect x="405.2" y="304.2" width="0.8" height="110.8" fill="#3fa6cc" opacity="0.2"/>
<rect x="443.2" y="304.2" width="0.8" height="110.8" fill="#3fa6cc" opacity="0.2"/>
<rect x="481.2" y="304.2" width="0.8" height="110.8" fill="#3fa6cc" opacity="0.2"/>
<rect x="519.2" y="304.2" width="0.8" height="110.8" fill="#3fa6cc" opacity="0.2"/>
<rect x="557.2" y="304.2" width="0.8" height="110.8" fill="#3fa6cc" opacity="0.2"/>
<rect x="595.2" y="304.2" width="0.8" height="110.8" fill="#3fa6cc" opacity="0.2"/>
<rect x="633.2" y="304.2" width="0.8" height="110.8" fill="#3fa6cc" opacity="0.2"/>
<rect x="671.2" y="304.2" width="0.8" height="110.8" fill="#3fa6cc" opacity="0.2"/>
<rect x="709.2" y="304.2" width="0.8" height="110.8" fill="#3fa6cc" opacity="0.2"/>
<rect x="747.2" y="304.2" width="0.8" height="110.8" fill="#3fa6cc" opacity="0.2"/>
<rect x="253.6" y="290.2" width="524" height="8.5" fill="#1870ae"/>
<rect x="320.6" y="166.8" width="67.4" height="5.8" fill="#262a5c"/>
<rect x="433.6" y="166.8" width="84.9" height="5.8" fill="#2bd9a2"/>
<rect x="619.4" y="166.8" width="26" height="5.8" fill="#1d3a78" opacity="0.9"/>
<g clip-path="url(#fw-unc)"><path d="M254,228.3L254.8,228.3L255.5,228.3L256.2,228.3L257,228.3L257.8,228.3L258.5,228.2L259.2,227.9L260,227.8L260.8,227.4L261.5,227.1L262.2,227.1L263,227.1L263.8,226.9L264.5,226.8L265.2,226.8L266,226.6L266.8,226.5L267.5,226.5L268.2,226.6L269,226.5L269.8,226.2L270.5,225.7L271.2,226.2L272,225.7L272.8,225.9L273.5,225.7L274.2,226L275,225.6L275.8,225.6L276.5,225.2L277.2,225.1L278,225L278.8,225.4L279.5,225.2L280.2,224.7L281,224.9L281.8,225.2L282.5,222.7L283.2,219.5L284,219.8L284.8,224.7L285.5,225.3L286.2,225.2L287,224.9L287.8,224.8L288.5,224.9L289.2,224.9L290,224.6L290.8,224.7L291.5,224.4L292.2,224.7L293,224.9L293.8,225L294.5,225.3L295.2,225.1L296,224.9L296.8,224.9L297.5,225L298.2,224.8L299,224.8L299.8,225L300.5,224.8L301.2,224.2L302,223.5L302.8,224.5L303.5,224.6L304.2,224.6L305,224.7L305.8,224.7L306.5,223.7L307.2,223L308,220.5L308.8,220.8L309.5,221.9L310.2,220.2L311,221.9L311.8,221.6L312.5,222.4L313.2,222.4L314,222.4L314.8,223.4L315.5,223.3L316.2,223.7L317,222.8L317.8,222.8L318.5,222.6L319.2,223L320,216.4L320.8,216.4L321.5,216L322.2,216.1L323,215.8L323.8,213.6L324.5,213.1L325.2,217.2L326,216L326.8,214.1L327.5,214.9L328.2,215.4L329,217.4L329.8,215.9L330.5,215.7L331.2,214.9L332,216.6L332.8,214.1L333.5,212.6L334.2,216.2L335,215.7L335.8,214.3L336.5,215.8L337.2,214.4L338,216.5L338.8,215.3L339.5,214.9L340.2,214L341,215.8L341.8,213.5L342.5,215.8L343.2,213.4L344,213.2L344.8,216.2L345.5,213.5L346.2,212.2L347,213.4L347.8,209.8L348.5,212.2L349.2,213.7L350,210L350.8,213.4L351.5,207L352.2,212.5L353,213.4L353.8,214.2L354.5,212.6L355.2,210.2L356,212.9L356.8,210.6L357.5,210L358.2,210.3L359,211.7L359.8,213.2L360.5,211.7L361.2,211.9L362,213.9L362.8,211.8L363.5,214.4L364.2,209.4L365,211.6L365.8,207.7L366.5,213L367.2,205.9L368,210.7L368.8,206.7L369.5,208.5L370.2,205.7L371,210.7L371.8,209.9L372.5,212.1L373.2,209.7L374,209.2L374.8,210.8L375.5,204.3L376.2,208.1L377,206.5L377.8,210L378.5,211L379.2,211.8L380,208.3L380.8,209.3L381.5,206.7L382.2,206.9L383,210.1L383.8,210L384.5,210.1L385.2,205.3L386,210L386.8,211.2L387.5,209.1L388.2,202.9L389,204.5L389.8,205.5L390.5,203.8L391.2,203L392,202.3L392.8,199.4L393.5,201.2L394.2,206.3L395,203.2L395.8,202.1L396.5,204.1L397.2,202.6L398,200.9L398.8,203.3L399.5,204.4L400.2,204.4L401,207.9L401.8,205.6L402.5,203.5L403.2,203.9L404,199.7L404.8,198.3L405.5,203.1L406.2,200.2L407,197.6L407.8,203.4L408.5,203.6L409.2,197.3L410,196.9L410.8,195.2L411.5,195.8L412.2,201.5L413,192.5L413.8,198.2L414.5,203.5L415.2,203.8L416,199L416.8,201.7L417.5,199.8L418.2,200L419,197.4L419.8,198.3L420.5,197.3L421.2,200L422,198.4L422.8,196.3L423.5,203L424.2,200.4L425,201.1L425.8,198.9L426.5,201.4L427.2,202.9L428,201.5L428.8,205.8L429.5,200.8L430.2,201.6L431,202.9L431.8,199.1L432.5,196.8L433.2,198.3L434,203.6L434.8,198.6L435.5,197L436.2,203.7L437,197.2L437.8,197.6L438.5,191.8L439.2,190.1L440,200.6L440.8,193.7L441.5,193.2L442.2,202.7L443,204.4L443.8,202.9L444.5,204.2L445.2,202.3L446,207.3L446.8,190.2L447.5,203L448.2,200.9L449,202.5L449.8,191.4L450.5,195.8L451.2,207.8L452,206.6L452.8,209.1L453.5,195.4L454.2,207.1L455,205L455.8,196.1L456.5,200.1L457.2,205.6L458,195.9L458.8,202.1L459.5,198.5L460.2,207.8L461,204.6L461.8,196.3L462.5,202L463.2,207.9L464,193.7L464.8,204.4L465.5,200.6L466.2,191.5L467,203.9L467.8,203.5L468.5,188.3L469.2,190.6L470,191.6L470.8,198.8L471.5,191.7L472.2,199.8L473,202.8L473.8,209.7L474.5,204L475.2,209.1L476,196.7L476.8,199.5L477.5,192.5L478.2,206.1L479,205L479.8,203L480.5,192.6L481.2,203L482,202.1L482.8,204.2L483.5,197.6L484.2,198L485,194.7L485.8,200.4L486.5,205.6L487.2,206.6L488,202.9L488.8,205.2L489.5,198.8L490.2,198.5L491,197.2L491.8,194.1L492.5,193.2L493.2,194.6L494,184.3L494.8,190L495.5,191L496.2,187.8L497,179.8L497.8,189.4L498.5,184.4L499.2,178.3L500,183.2L500.8,186.6L501.5,188.6L502.2,183.3L503,189.4L503.8,187.7L504.5,191.4L505.2,185.2L506,186L506.8,186.5L507.5,186.2L508.2,190L509,180.6L509.8,189.6L510.5,185.3L511.2,186.9L512,181.5L512.8,182.8L513.5,182.8L514.2,190.7L515,187.6L515.8,194.3L516.5,190.4L517.2,193.3L518,184.9L518.8,192.9L519.5,198.4L520.2,197.6L521,192.3L521.8,197.4L522.5,191.7L523.2,201.1L524,191.9L524.8,199.6L525.5,196.8L526.2,196.1L527,196.3L527.8,199.3L528.5,200.7L529.2,202.3L530,194.5L530.8,205.2L531.5,206L532.2,205.7L533,204.6L533.8,203.5L534.5,204.5L535.2,206.3L536,202.1L536.8,207.3L537.5,205.4L538.2,209.3L539,208.3L539.8,205.9L540.5,208.4L541.2,210.6L542,209.6L542.8,209.8L543.5,209L544.2,209.4L545,213.8L545.8,210.9L546.5,212.4L547.2,213.1L548,210.5L548.8,215.3L549.5,211.9L550.2,210.6L551,211.7L551.8,213.4L552.5,215.1L553.2,213.5L554,215.3L554.8,214.4L555.5,212.7L556.2,214.2L557,213.5L557.8,214.3L558.5,213.6L559.2,211.3L560,214L560.8,214.4L561.5,213.8L562.2,212.2L563,213.1L563.8,210.1L564.5,208.1L565.2,212.1L566,214.6L566.8,213.6L567.5,214.5L568.2,216.1L569,214.7L569.8,212.7L570.5,211.2L571.2,214.6L572,214.1L572.8,215.4L573.5,212.7L574.2,214.1L575,216.2L575.8,214.5L576.5,216L577.2,213.9L578,216.9L578.8,215.5L579.5,215.4L580.2,215.9L581,216.7L581.8,214.9L582.5,214.2L583.2,214.8L584,214.4L584.8,214.9L585.5,217.4L586.2,217.4L587,217.9L587.8,216.5L588.5,218.6L589.2,218.3L590,218.9L590.8,216.8L591.5,215.9L592.2,215.9L593,215.5L593.8,217.1L594.5,214.8L595.2,214.3L596,214.7L596.8,214.5L597.5,216L598.2,213.5L599,204.9L599.8,206.3L600.5,206.6L601.2,206.4L602,203.9L602.8,207.6L603.5,208.5L604.2,207.9L605,207.4L605.8,213.5L606.5,211.6L607.2,203.5L608,205.3L608.8,204.8L609.5,197.7L610.2,195.7L611,190.1L611.8,187.1L612.5,186L613.2,184.2L614,182.6L614.8,192.3L615.5,189.2L616.2,185L617,188.7L617.8,187.6L618.5,184.8L619.2,185.3L620,187.8L620.8,188.6L621.5,183L622.2,189.8L623,189.4L623.8,186.9L624.5,186.8L625.2,191.2L626,187.3L626.8,177.6L627.5,181.9L628.2,185.6L629,179.9L629.8,182.7L630.5,185.5L631.2,182.8L632,186.7L632.8,191.8L633.5,188.1L634.2,189.1L635,189.1L635.8,190.7L636.5,191.9L637.2,185L638,190.3L638.8,187.2L639.5,181.3L640.2,184.3L641,185.2L641.8,183.8L642.5,187.3L643.2,188L644,186L644.8,180.6L645.5,184.9L646.2,188.2L647,187.4L647.8,185L648.5,188.9L649.2,184.3L650,187.7L650.8,187.3L651.5,183.5L652.2,186L653,188.7L653.8,176.1L654.5,187.5L655.2,191.1L656,185.2L656.8,192.8L657.5,187.8L658.2,186L659,187.1L659.8,183.2L660.5,182.1L661.2,191.2L662,190.8L662.8,185L663.5,187.9L664.2,186.3L665,185.3L665.8,182.6L666.5,177.9L667.2,188.8L668,188.8L668.8,187L669.5,189.7L670.2,188.5L671,181.5L671.8,185.3L672.5,176.1L673.2,184.4L674,186.8L674.8,190.1L675.5,185.4L676.2,189L677,187.8L677.8,186.1L678.5,189.1L679.2,189.1L680,182.4L680.8,183.9L681.5,183.5L682.2,185.5L683,185L683.8,190.2L684.5,183.6L685.2,186.4L686,190.9L686.8,189.7L687.5,186.4L688.2,187.5L689,189.7L689.8,185.2L690.5,182.5L691.2,187.9L692,182.4L692.8,187.6L693.5,187L694.2,188.9L695,190.7L695.8,189.8L696.5,187.6L697.2,188.4L698,190.7L698.8,183.9L699.5,183.3L700.2,188.7L701,186.7L701.8,189.1L702.5,190.1L703.2,188.5L704,197.3L704.8,201.9L705.5,203.8L706.2,204.1L707,206.6L707.8,206.3L708.5,205.4L709.2,208.4L710,211.1L710.8,214.4L711.5,215.2L712.2,213.3L713,215.1L713.8,215L714.5,214.2L715.2,214.7L716,214.2L716.8,214L717.5,212.5L718.2,215.2L719,212.9L719.8,216.8L720.5,216.7L721.2,216.3L722,216.6L722.8,216L723.5,214.2L724.2,213.6L725,214L725.8,215.8L726.5,214.5L727.2,210.7L728,211.9L728.8,211.9L729.5,211.1L730.2,210.6L731,208L731.8,210.9L732.5,206.9L733.2,207.3L734,209.9L734.8,209.6L735.5,209.5L736.2,207.8L737,208.2L737.8,205.5L738.5,207.6L739.2,203.2L740,205.7L740.8,203.5L741.5,200.8L742.2,201L743,202.8L743.8,202.3L744.5,200.8L745.2,205.2L746,204.8L746.8,200.2L747.5,205L748.2,206.2L749,207.2L749.8,207L750.5,205.1L751.2,207.2L752,207.2L752.8,205.2L753.5,208.6L754.2,209.3L755,211L755.8,212.4L756.5,212.9L757.2,213.1L758,212L758.8,211.1L759.5,213L760.2,215.7L761,214.1L761.8,216.7L762.5,217.1L763.2,217.7L764,218.6L764.8,220.4L765.5,220.6L766.2,221.5L767,221.9L767.8,222.2L768.5,223.3L769.2,223.8L770,224.9L770.8,225L771.5,226L772.2,227L773,227.7L773.8,228.3L774.5,228.3L775.2,228.3L776,228.3L776.8,228.3L776.8,228.3L776,228.3L775.2,228.3L774.5,228.3L773.8,228.3L773,229L772.2,229.8L771.5,231L770.8,231.5L770,231.9L769.2,232.5L768.5,233.5L767.8,233.9L767,234.1L766.2,235.3L765.5,235.8L764.8,236.3L764,237.3L763.2,238.7L762.5,241.6L761.8,240.3L761,242L760.2,241.6L759.5,243.1L758.8,241.9L758,242.4L757.2,241.8L756.5,245.1L755.8,242.7L755,244.7L754.2,245.1L753.5,246L752.8,247.7L752,249.3L751.2,250.3L750.5,248.2L749.8,250.3L749,250.5L748.2,254.4L747.5,262.4L746.8,260.7L746,259.1L745.2,255.5L744.5,260.2L743.8,259.1L743,256.3L742.2,258.1L741.5,261.2L740.8,253.3L740,256.3L739.2,255L738.5,255.1L737.8,256.8L737,254.5L736.2,254L735.5,253.8L734.8,251.7L734,254.4L733.2,249.3L732.5,250.8L731.8,247.3L731,251.9L730.2,246.3L729.5,245.1L728.8,244.6L728,243L727.2,244.6L726.5,244.6L725.8,242.1L725,243.8L724.2,242.7L723.5,243.8L722.8,242.6L722,245.3L721.2,242.6L720.5,243L719.8,243.3L719,242.7L718.2,241.9L717.5,243.1L716.8,242.5L716,245.1L715.2,240.2L714.5,242.3L713.8,242L713,241.2L712.2,242.6L711.5,244.3L710.8,245.3L710,244L709.2,246.2L708.5,246.5L707.8,249.1L707,253.1L706.2,251.4L705.5,255.8L704.8,255.3L704,264L703.2,261.7L702.5,269.3L701.8,264.3L701,267.1L700.2,269L699.5,267.7L698.8,269.3L698,265.4L697.2,265.7L696.5,274.1L695.8,270.7L695,267.7L694.2,268.3L693.5,271.8L692.8,271.3L692,269.1L691.2,272.6L690.5,271L689.8,267.8L689,266.7L688.2,268.3L687.5,276.1L686.8,269.9L686,274.2L685.2,271.1L684.5,273.6L683.8,268.6L683,269.6L682.2,267.5L681.5,276L680.8,267.5L680,270.5L679.2,269L678.5,268.4L677.8,270L677,270.7L676.2,271L675.5,265.5L674.8,268.2L674,265.8L673.2,269.6L672.5,277.6L671.8,272.7L671,268.1L670.2,263.2L669.5,269.8L668.8,268.3L668,267.5L667.2,271L666.5,277.5L665.8,266.3L665,272.3L664.2,269.1L663.5,268.3L662.8,270.6L662,268.9L661.2,269.6L660.5,271.2L659.8,268.1L659,274.5L658.2,267L657.5,272.9L656.8,269.2L656,280.6L655.2,270L654.5,268.2L653.8,268L653,265.3L652.2,270.4L651.5,270.5L650.8,264.9L650,268.3L649.2,267.9L648.5,270.5L647.8,268L647,274L646.2,266.7L645.5,268.9L644.8,268.1L644,269.8L643.2,270.8L642.5,271L641.8,269.7L641,279.2L640.2,268.8L639.5,271.8L638.8,266.8L638,265.9L637.2,267.1L636.5,271.6L635.8,267.6L635,264.4L634.2,266.5L633.5,267.6L632.8,273.8L632,271.6L631.2,271.1L630.5,268.3L629.8,267.6L629,264.7L628.2,263.9L627.5,271.5L626.8,268.6L626,271.5L625.2,266.8L624.5,270.5L623.8,264.3L623,264.5L622.2,266.2L621.5,269.4L620.8,270.3L620,272.6L619.2,268.6L618.5,273.8L617.8,275.4L617,266.2L616.2,267L615.5,271.2L614.8,271.2L614,270.4L613.2,270.5L612.5,280.6L611.8,268.7L611,270.3L610.2,263.4L609.5,265.5L608.8,255.6L608,252.5L607.2,250.4L606.5,245.3L605.8,243.1L605,244.4L604.2,244.5L603.5,245.9L602.8,249.9L602,248.7L601.2,248.9L600.5,248.2L599.8,247.3L599,248.4L598.2,244.6L597.5,245.3L596.8,243.5L596,243.2L595.2,241.1L594.5,241L593.8,240L593,240.6L592.2,239.6L591.5,239.6L590.8,240.5L590,242.4L589.2,238.9L588.5,240.1L587.8,239.9L587,241.1L586.2,240.2L585.5,242.2L584.8,241.2L584,239.5L583.2,239.2L582.5,242.4L581.8,242.9L581,247.4L580.2,244.7L579.5,244.9L578.8,242.6L578,245.6L577.2,244.4L576.5,241.6L575.8,243.4L575,242.2L574.2,241.8L573.5,240.5L572.8,242.3L572,242L571.2,242L570.5,242.9L569.8,242.3L569,243.1L568.2,243.3L567.5,242.5L566.8,241.5L566,244L565.2,241.9L564.5,242.4L563.8,242L563,241.8L562.2,243.3L561.5,245.4L560.8,243.1L560,242.1L559.2,243.2L558.5,243.7L557.8,245.6L557,243.8L556.2,244.1L555.5,242.6L554.8,242.9L554,241.4L553.2,241.1L552.5,244.2L551.8,243.9L551,244.7L550.2,242.7L549.5,242.8L548.8,241.3L548,241.5L547.2,243.5L546.5,245.9L545.8,247.6L545,249.2L544.2,247.3L543.5,250.3L542.8,251.8L542,246.7L541.2,246.5L540.5,249.8L539.8,249.8L539,247.3L538.2,249.9L537.5,253.9L536.8,250.3L536,256.1L535.2,254.1L534.5,259.3L533.8,255.9L533,256.5L532.2,259.6L531.5,256.7L530.8,256L530,256.2L529.2,254.1L528.5,255.2L527.8,259.6L527,257.2L526.2,258.8L525.5,259.2L524.8,259.8L524,266.2L523.2,261.8L522.5,265.2L521.8,261L521,259.7L520.2,255.7L519.5,259.6L518.8,264.6L518,271L517.2,268.2L516.5,268.4L515.8,270.2L515,276.7L514.2,265.1L513.5,268.4L512.8,266.9L512,269.5L511.2,265.2L510.5,271L509.8,269L509,264.6L508.2,263.6L507.5,271.8L506.8,270.9L506,280.6L505.2,274.2L504.5,274.6L503.8,268.2L503,276.9L502.2,272.6L501.5,265.2L500.8,272.3L500,270.8L499.2,270.3L498.5,264.9L497.8,268L497,265.3L496.2,264.8L495.5,267.5L494.8,267L494,270.8L493.2,270.9L492.5,268.3L491.8,262.4L491,263.4L490.2,261.8L489.5,255.1L488.8,257.2L488,251.3L487.2,258.8L486.5,264L485.8,252.9L485,250.3L484.2,252.9L483.5,255.2L482.8,259.2L482,252.8L481.2,259.6L480.5,253.1L479.8,255.8L479,248.1L478.2,246.5L477.5,253L476.8,258.4L476,258.5L475.2,256.9L474.5,251.9L473.8,252.7L473,251.7L472.2,255.3L471.5,256.8L470.8,260L470,262.5L469.2,258.2L468.5,262.6L467.8,264.7L467,251.5L466.2,247.8L465.5,257.6L464.8,259.9L464,250.9L463.2,259.9L462.5,252.8L461.8,251.1L461,261.2L460.2,253.5L459.5,255.5L458.8,257L458,255.8L457.2,264.3L456.5,256.3L455.8,257.6L455,251.9L454.2,249.5L453.5,254.3L452.8,254.4L452,255.3L451.2,255.2L450.5,254.4L449.8,249L449,263.1L448.2,266L447.5,264.8L446.8,250.8L446,249.1L445.2,258.1L444.5,250.9L443.8,262.8L443,258.2L442.2,266.3L441.5,252L440.8,264.2L440,254.2L439.2,251.9L438.5,253L437.8,257.8L437,255.8L436.2,264.3L435.5,250.7L434.8,263.3L434,252.7L433.2,256.9L432.5,253.3L431.8,263.1L431,255.1L430.2,253.1L429.5,253.5L428.8,251.7L428,255.7L427.2,255.4L426.5,249.3L425.8,255.3L425,253.9L424.2,258.7L423.5,256.3L422.8,262L422,255.4L421.2,256.7L420.5,258.7L419.8,259.1L419,257.2L418.2,260.1L417.5,258.4L416.8,262.7L416,251.3L415.2,254.3L414.5,253.8L413.8,252.8L413,258.1L412.2,264.3L411.5,266.9L410.8,259.4L410,259.7L409.2,254.7L408.5,255.4L407.8,258.9L407,253L406.2,257.1L405.5,252.6L404.8,258.8L404,254.2L403.2,256.5L402.5,252.6L401.8,254.5L401,254.9L400.2,252.4L399.5,254L398.8,249.4L398,249.4L397.2,255.4L396.5,256.4L395.8,254.9L395,256L394.2,257.3L393.5,255.1L392.8,252.8L392,255.4L391.2,254.4L390.5,252.6L389.8,252.1L389,252.9L388.2,258.3L387.5,247.7L386.8,249.5L386,248.3L385.2,249L384.5,246L383.8,247L383,245.2L382.2,248.6L381.5,245.3L380.8,248L380,247.5L379.2,247.5L378.5,249.6L377.8,249.3L377,249L376.2,245.5L375.5,246.3L374.8,244.7L374,247.7L373.2,251L372.5,249L371.8,245.5L371,243.4L370.2,247.2L369.5,244.4L368.8,248.8L368,248.1L367.2,253.5L366.5,245.2L365.8,251.1L365,246.2L364.2,244.5L363.5,244.4L362.8,243.9L362,243.1L361.2,245.8L360.5,244.2L359.8,249.1L359,245.6L358.2,248.7L357.5,246.7L356.8,253.8L356,247.8L355.2,245.8L354.5,244.7L353.8,242.7L353,244.9L352.2,245.3L351.5,242.6L350.8,245.5L350,244L349.2,244.8L348.5,242.1L347.8,243.8L347,240.1L346.2,240.9L345.5,242.5L344.8,243.5L344,243.3L343.2,244.8L342.5,243.6L341.8,245L341,239.3L340.2,240.9L339.5,240.6L338.8,239.4L338,240.6L337.2,241.6L336.5,241.9L335.8,240.4L335,242.1L334.2,241.5L333.5,242.9L332.8,245L332,241.8L331.2,243.8L330.5,241.4L329.8,244.7L329,242.2L328.2,243.3L327.5,241.2L326.8,242.4L326,242.9L325.2,242L324.5,243.5L323.8,241.2L323,241.3L322.2,244.5L321.5,244.3L320.8,242.7L320,243.2L319.2,234.4L318.5,234.1L317.8,233.7L317,234.5L316.2,234.5L315.5,234.2L314.8,234.1L314,234.2L313.2,235.4L312.5,234.2L311.8,234.9L311,235.2L310.2,235.8L309.5,234.7L308.8,235.3L308,233.9L307.2,234.2L306.5,232.5L305.8,232.5L305,232.2L304.2,232L303.5,232.3L302.8,232.1L302,232L301.2,231.5L300.5,231.9L299.8,231.9L299,232.6L298.2,233.2L297.5,232.6L296.8,231.8L296,231.3L295.2,232.1L294.5,231.8L293.8,232.1L293,232.3L292.2,233.1L291.5,231.8L290.8,232.6L290,232L289.2,231.8L288.5,232L287.8,232.1L287,232.1L286.2,232.7L285.5,231.8L284.8,234.5L284,235.8L283.2,237.9L282.5,233L281.8,232.8L281,231.7L280.2,231.4L279.5,231.3L278.8,231.1L278,231.7L277.2,231.7L276.5,231L275.8,231.4L275,231.1L274.2,231.2L273.5,230.9L272.8,231.3L272,230.6L271.2,230.5L270.5,230.5L269.8,230.5L269,230.3L268.2,230.5L267.5,230.3L266.8,230.5L266,229.7L265.2,229.9L264.5,229.8L263.8,229.6L263,229.7L262.2,229.7L261.5,229.5L260.8,229.1L260,228.9L259.2,228.7L258.5,228.5L257.8,228.3L257,228.3L256.2,228.3L255.5,228.3L254.8,228.3L254,228.3Z" fill="#5888ba" opacity="0.5"/><path d="M309.5,220.8V236.2M311,221.5V234.6M320,215.2V242.2M323,214.5V243.9M324.5,214.6V245.3M326,215.4V245M327.5,212V243.6M329,215.3V242.7M335,214.7V244.5M336.5,213.6V241.8M342.5,214V244.1M345.5,212.9V244.7M348.5,210.3V245M350,210.4V245.6M351.5,208.6V245.9M353,211.7V245.5M354.5,211.6V248M357.5,209.9V249M359,212.5V247.2M368,204V248.7M369.5,207.1V247.4M371,206.4V245.8M372.5,207.7V249.4M374,207.9V248.1M375.5,204.2V249.6M380,209V251.4M381.5,207.9V248.3M383,208.3V249.4M384.5,207.8V248.4M386,206.6V247.6M387.5,209.1V248.4M389,202.7V254.3M390.5,201.8V256.8M396.5,203.3V257.8M399.5,203.9V255.7M401,202.5V258.7M404,199.4V256M405.5,198V255.8M407,199.9V256.7M408.5,197.6V261.6M410,191.8V260.7M411.5,189.8V266.4M414.5,200.8V260.7M416,199.6V259M419,193.4V260.9M420.5,194.6V262M425,196.7V260M428,198V253.4M437,196V256.9M438.5,184.2V269.6M449,189V272.8M450.5,185.9V257.4M453.5,201.7V261.9M455,184V266.2M456.5,193.2V254.8M458,200.1V263.1M459.5,183.4V260.4M461,191.9V261.5M464,198.2V265.8M465.5,191.7V269.3M470,198.4V261.8M473,195.5V270.6M474.5,202.4V266M482,185.7V264.5M485,185.8V267.1M488,191.8V264.4M489.5,190.3V266.9M491,198V268.7M492.5,193.8V271.3M494,177V276.4M495.5,186V271M497,175.6V274.9M498.5,183.7V272.7M501.5,186.3V268.5M504.5,189.2V277.6M506,181.5V281.1M509,175.6V273.6M510.5,180.6V275M512,178.9V279.9M515,185.9V280.1M516.5,187.1V279.6M518,182.9V274.3M519.5,194.6V262.6M524,190.1V266.6M525.5,192.9V261.4M528.5,198.1V258.7M533,204.5V257.5M539,204.3V249.7M540.5,204.6V253.1M542,209.1V250.1M545,209.6V248.7M549.5,209.2V246.1M551,212.6V247.4M554,212.6V243.6M555.5,211.9V245M558.5,211V246M560,210.8V243.7M561.5,214.1V244.4M563,211.6V242.3M564.5,206.5V245.4M566,213.7V246.9M572,212.9V244.7M573.5,209.7V242.5M575,212.3V241.6M584,213.1V243M585.5,215.2V241.1M588.5,216.5V242.3M590,215.2V243.8M593,213.7V242.1M599,204.7V247.9M600.5,205.1V248.7M602,201.8V251.2M603.5,205.9V247.9M608,205.3V255.3M611,188.8V271.7M612.5,185.5V281.1M614,182.4V271.5M621.5,181.7V271.2M626,187.5V273.5M629,178.7V269.4M632,183.8V274.1M633.5,183V268.4M635,187.6V269.7M638,187.6V267.6M641,182.8V281.1M642.5,183.2V271.6M644,182.2V271.3M647,183.2V274.2M654.5,183.4V271.8M656,186V281.1M657.5,186V276.4M665,183.5V270.7M666.5,176.4V276.2M669.5,184.1V271.4M671,180.8V271.6M674,183.4V271.7M675.5,183.6V268.4M677,184.8V272.4M678.5,185V271.1M683,184.5V269.3M684.5,183.5V276.2M687.5,186.5V276.1M689,188.3V268.9M692,181.9V271.6M693.5,184.2V272.3M695,188.4V269.6M696.5,182.2V278.6M698,189.7V268.7M699.5,180.2V270.9M701,187.5V269.1M705.5,200.3V256.6M710,210V244.3M713,212.7V243.5M714.5,212.8V244.6M717.5,211.7V244.2M719,211.9V243.2M722,216V245.7M725,213.7V243M731,208.6V252.6M734,208.3V255.4M735.5,208.4V253.3M737,205.7V254.9M738.5,206.2V256M741.5,198.7V261.7M743,202.7V256M744.5,201V261.9M747.5,203.7V262.7M752,207.1V249.3M753.5,207.4V248.2M761,213.8V241.9M762.5,216.7V241.3M283.3,211.3V244M283.9,216.3V239.4M309,218.3V237.5M343,212.3V243.1M357,206.3V248.6M357.6,210.3V244.9M367.5,201.3V253.2M368.1,208.3V246.8M380,204.3V250.4M396,201.3V253.2M404,198.3V255.9M411.5,190.3V263.3M412.1,198.3V255.9M420,198.3V255.9M428,197.3V256.9M526,192.3V261.5M534,198.3V255.9M545,206.3V248.6M603,201.3V253.2" stroke="#6c9cc8" stroke-width="0.8" opacity="0.5" fill="none"/><path d="M254,228.3L254.8,228.3L255.5,228.3L256.2,228.3L257,228.3L257.8,228.3L258.5,228.2L259.2,228L260,227.8L260.8,227.6L261.5,227.4L262.2,227.3L263,227.4L263.8,227.3L264.5,227.2L265.2,227L266,226.9L266.8,226.6L267.5,226.7L268.2,226.8L269,226.7L269.8,226.6L270.5,226.2L271.2,226.4L272,226.3L272.8,226L273.5,226.1L274.2,226.1L275,226.1L275.8,225.7L276.5,225.5L277.2,225.4L278,225.7L278.8,225.7L279.5,225.7L280.2,225.3L281,225.6L281.8,225.4L282.5,225L283.2,223.8L284,224.1L284.8,225.7L285.5,226L286.2,225.9L287,225.6L287.8,225.6L288.5,225.1L289.2,225.5L290,225.5L290.8,225.2L291.5,225.5L292.2,225.5L293,225.1L293.8,225.7L294.5,225.7L295.2,225.6L296,225.8L296.8,225.6L297.5,225.4L298.2,225.2L299,225.3L299.8,225.3L300.5,225.2L301.2,225L302,224.3L302.8,225L303.5,225.1L304.2,225.3L305,225L305.8,225.1L306.5,224.5L307.2,223.4L308,222.4L308.8,221.4L309.5,222.4L310.2,222.2L311,223.2L311.8,223L312.5,223.3L313.2,223.4L314,223.4L314.8,224.4L315.5,224.4L316.2,224.1L317,223.9L317.8,223.8L318.5,223.8L319.2,223.9L320,217.8L320.8,217.9L321.5,218.5L322.2,216.9L323,216.6L323.8,216.6L324.5,216.6L325.2,218L326,218.3L326.8,217.8L327.5,216.6L328.2,217.9L329,218.4L329.8,216.7L330.5,216.7L331.2,215.8L332,217.6L332.8,216.8L333.5,215.4L334.2,217.1L335,218.4L335.8,217.1L336.5,218.3L337.2,216.3L338,217.8L338.8,218L339.5,215.7L340.2,217.1L341,217.3L341.8,214.5L342.5,217.8L343.2,215L344,215L344.8,217.2L345.5,215.1L346.2,214.6L347,215L347.8,213.4L348.5,214.4L349.2,214.6L350,212.7L350.8,215L351.5,210.9L352.2,215L353,215.4L353.8,216L354.5,215.4L355.2,213.8L356,213.9L356.8,212.8L357.5,213.9L358.2,211.4L359,215.6L359.8,216L360.5,215.7L361.2,215.2L362,215.9L362.8,215L363.5,216.4L364.2,216.3L365,216.8L365.8,212.4L366.5,216.5L367.2,214.7L368,213.3L368.8,214.1L369.5,213.6L370.2,212.2L371,213.9L371.8,211.4L372.5,213.5L373.2,211.7L374,211.4L374.8,212.1L375.5,209L376.2,209.3L377,210.2L377.8,212.9L378.5,213.6L379.2,212.9L380,212.4L380.8,212.1L381.5,210.5L382.2,211.3L383,214L383.8,211.6L384.5,211.6L385.2,206.4L386,212.8L386.8,213.5L387.5,213.4L388.2,206.5L389,206L389.8,207.5L390.5,207.7L391.2,207.1L392,205.2L392.8,205.3L393.5,203.2L394.2,208.4L395,208.9L395.8,207.4L396.5,209.1L397.2,206.9L398,202.4L398.8,208.3L399.5,208.9L400.2,208.5L401,209.6L401.8,208L402.5,207.1L403.2,206.2L404,204.6L404.8,203.5L405.5,204.7L406.2,202.6L407,204.1L407.8,205.5L408.5,205.6L409.2,204.8L410,201.7L410.8,204L411.5,203.1L412.2,204.9L413,199.6L413.8,200.7L414.5,206.4L415.2,205.9L416,205.4L416.8,203.9L417.5,202.8L418.2,201.9L419,199.2L419.8,203.4L420.5,201.2L421.2,202.7L422,201.6L422.8,203.9L423.5,204.9L424.2,207.2L425,206.7L425.8,206.4L426.5,207.5L427.2,205L428,207.8L428.8,208L429.5,207.7L430.2,206.1L431,205.1L431.8,204.5L432.5,198.6L433.2,203.1L434,210.9L434.8,211.5L435.5,213.8L436.2,210.1L437,212.5L437.8,212.8L438.5,208.8L439.2,207.8L440,211.7L440.8,213L441.5,211.7L442.2,209.1L443,213.6L443.8,212.2L444.5,208.8L445.2,212.9L446,213L446.8,208.2L447.5,211.6L448.2,210.5L449,207.6L449.8,212.7L450.5,208.2L451.2,212.6L452,213.8L452.8,214.7L453.5,213.5L454.2,212.6L455,211.7L455.8,209.7L456.5,212.3L457.2,211.2L458,211.7L458.8,207.9L459.5,210.2L460.2,213.5L461,210.5L461.8,215.1L462.5,214.8L463.2,214.1L464,214L464.8,214.5L465.5,212.6L466.2,211.8L467,212.6L467.8,212.1L468.5,209.4L469.2,210.1L470,209.7L470.8,210.5L471.5,211.7L472.2,209.8L473,211.9L473.8,214.7L474.5,215.5L475.2,214.9L476,213.3L476.8,213.4L477.5,211.4L478.2,210.8L479,212.5L479.8,210.6L480.5,212.3L481.2,210.3L482,212.3L482.8,212.1L483.5,211.7L484.2,211L485,206.3L485.8,211.2L486.5,211.5L487.2,212.4L488,212.6L488.8,212.2L489.5,210.3L490.2,210.8L491,209.7L491.8,206.4L492.5,201.9L493.2,201.4L494,188.1L494.8,196.2L495.5,197.9L496.2,192.5L497,183.5L497.8,195.3L498.5,195.7L499.2,187.1L500,185.8L500.8,192.1L501.5,193.7L502.2,191.7L503,193.1L503.8,196.2L504.5,196L505.2,193L506,195.7L506.8,192.8L507.5,194.7L508.2,195.9L509,188.8L509.8,192.6L510.5,187.7L511.2,193.8L512,192.4L512.8,188.1L513.5,192.8L514.2,195.6L515,193.3L515.8,198.5L516.5,197L517.2,197.8L518,194.6L518.8,198L519.5,201.3L520.2,202.2L521,194.2L521.8,200.5L522.5,198.6L523.2,203.7L524,199.7L524.8,201.5L525.5,201.2L526.2,202.4L527,204.4L527.8,203.6L528.5,204.2L529.2,207L530,201.7L530.8,209.4L531.5,209.2L532.2,210L533,211L533.8,207.2L534.5,209.1L535.2,209.2L536,207.9L536.8,210L537.5,211.1L538.2,211L539,213L539.8,212.5L540.5,211.5L541.2,213L542,212.9L542.8,211.6L543.5,212.6L544.2,215L545,215L545.8,215L546.5,215.9L547.2,215L548,213.3L548.8,216.7L549.5,214.4L550.2,213.4L551,215.9L551.8,215.3L552.5,216.3L553.2,214.5L554,216.5L554.8,217.8L555.5,215.9L556.2,215.1L557,215.1L557.8,215.9L558.5,214.9L559.2,214.7L560,215.6L560.8,216L561.5,217.2L562.2,215.9L563,215.6L563.8,211L564.5,211.3L565.2,215.5L566,216.1L566.8,217.2L567.5,218.1L568.2,217.8L569,215.9L569.8,216.1L570.5,214.2L571.2,215.7L572,215.3L572.8,216.8L573.5,213.7L574.2,215.8L575,217.1L575.8,217.6L576.5,217.3L577.2,215.3L578,217.7L578.8,217.1L579.5,218.1L580.2,217.2L581,217.7L581.8,218L582.5,215.3L583.2,217.6L584,218.1L584.8,218.5L585.5,218.7L586.2,218.4L587,219.2L587.8,218.8L588.5,219.9L589.2,219.5L590,219.9L590.8,219L591.5,218.9L592.2,218.4L593,217L593.8,218.1L594.5,218L595.2,216.8L596,216.9L596.8,216.5L597.5,216.9L598.2,214.7L599,207.7L599.8,208L600.5,209.6L601.2,209.7L602,205.3L602.8,210.3L603.5,210L604.2,210.5L605,208.7L605.8,215.1L606.5,212.8L607.2,207.3L608,208.4L608.8,205.9L609.5,199.2L610.2,197.9L611,192.2L611.8,188.8L612.5,189.4L613.2,186.1L614,186.5L614.8,193.5L615.5,193.6L616.2,186.3L617,192.2L617.8,189.5L618.5,189.3L619.2,190.5L620,189.2L620.8,191.1L621.5,187.7L622.2,191.2L623,192.1L623.8,190.9L624.5,191.5L625.2,194L626,191.3L626.8,180.7L627.5,183.4L628.2,186.9L629,184.5L629.8,186L630.5,189.2L631.2,184.7L632,189.1L632.8,193.6L633.5,189.6L634.2,193L635,191L635.8,193.5L636.5,194.2L637.2,190.1L638,193.6L638.8,191.9L639.5,185.6L640.2,188.2L641,188L641.8,188.5L642.5,189.4L643.2,189.7L644,188.1L644.8,184.6L645.5,186.4L646.2,191.1L647,188.7L647.8,190.7L648.5,190.2L649.2,189.9L650,189.1L650.8,190L651.5,186.7L652.2,191.2L653,192.4L653.8,179L654.5,189.5L655.2,192.3L656,190L656.8,194.5L657.5,192.6L658.2,187.7L659,191.8L659.8,185.4L660.5,186.8L661.2,193.6L662,193.2L662.8,186.9L663.5,191.2L664.2,191L665,190.4L665.8,185.6L666.5,179.5L667.2,192.2L668,192.7L668.8,189.8L669.5,191.1L670.2,191.2L671,185.6L671.8,190.1L672.5,179.7L673.2,186.4L674,189.9L674.8,192.4L675.5,189.2L676.2,194.2L677,189.9L677.8,189.4L678.5,190.9L679.2,191.3L680,187.9L680.8,188.8L681.5,189L682.2,190.1L683,188.9L683.8,192.3L684.5,189.1L685.2,190.2L686,193.2L686.8,191L687.5,190.3L688.2,188.9L689,192.2L689.8,187.8L690.5,185.9L691.2,189.3L692,187.4L692.8,189L693.5,189L694.2,192.1L695,193.7L695.8,191.7L696.5,189.1L697.2,191.9L698,193.3L698.8,186.7L699.5,186.6L700.2,193L701,192.1L701.8,190.4L702.5,192.3L703.2,193L704,200.8L704.8,205.3L705.5,205.2L706.2,205L707,207.8L707.8,209L708.5,208.6L709.2,211.4L710,214.1L710.8,215.3L711.5,216.4L712.2,215.2L713,215.8L713.8,217.1L714.5,216.3L715.2,216.5L716,215.8L716.8,214.7L717.5,214.4L718.2,216.1L719,215.3L719.8,217.6L720.5,217.5L721.2,217.1L722,217.6L722.8,217.3L723.5,216.7L724.2,215.6L725,216.7L725.8,216.9L726.5,216L727.2,213L728,212.8L728.8,213.9L729.5,212.6L730.2,213L731,210.5L731.8,211.6L732.5,207.8L733.2,209L734,210.7L734.8,211L735.5,210.8L736.2,208.4L737,209.3L737.8,206.9L738.5,208.3L739.2,205.1L740,206.8L740.8,204.5L741.5,202.4L742.2,203.8L743,204.5L743.8,204.7L744.5,202.6L745.2,206.4L746,207L746.8,202.7L747.5,206L748.2,208.2L749,208.8L749.8,208.5L750.5,205.7L751.2,208.2L752,208.4L752.8,206L753.5,209.5L754.2,209.8L755,212.1L755.8,213.7L756.5,213.5L757.2,213.9L758,213.5L758.8,213L759.5,214.8L760.2,216.1L761,215.1L761.8,217.4L762.5,217.8L763.2,218.1L764,219.8L764.8,220.9L765.5,220.9L766.2,222.2L767,222.3L767.8,222.7L768.5,223.8L769.2,224.2L770,225.2L770.8,225.3L771.5,226.1L772.2,227L773,227.8L773.8,228.3L774.5,228.3L775.2,228.3L776,228.3L776.8,228.3L776.8,228.3L776,228.3L775.2,228.3L774.5,228.3L773.8,228.3L773,228.9L772.2,229.7L771.5,230.9L770.8,231.2L770,231.6L769.2,232L768.5,233L767.8,233.6L767,233.9L766.2,234.7L765.5,235.2L764.8,235.7L764,236.6L763.2,238L762.5,240.1L761.8,239.3L761,240.7L760.2,239.9L759.5,241.6L758.8,241.3L758,241.3L757.2,241.2L756.5,244.5L755.8,242.2L755,243.3L754.2,244.4L753.5,245.3L752.8,245.7L752,247.9L751.2,249L750.5,247.4L749.8,249.4L749,249.9L748.2,252.1L747.5,260.1L746.8,258.2L746,258.3L745.2,254.7L744.5,258.4L743.8,258.3L743,253.8L742.2,256.5L741.5,258.8L740.8,252.2L740,253.6L739.2,253.4L738.5,253.9L737.8,255.6L737,252.6L736.2,252.6L735.5,251.2L734.8,250.9L734,252L733.2,248L732.5,249.3L731.8,246.6L731,249.4L730.2,244.5L729.5,244L728.8,243.1L728,241.4L727.2,242L726.5,242L725.8,241.5L725,241.2L724.2,242L723.5,241.7L722.8,241.3L722,242.8L721.2,241.6L720.5,241.8L719.8,241.7L719,240.7L718.2,240.8L717.5,240.5L716.8,239.7L716,243.1L715.2,239.6L714.5,241.4L713.8,241.1L713,240.4L712.2,241.4L711.5,242.4L710.8,243.1L710,242.5L709.2,244L708.5,245.7L707.8,248.1L707,249.9L706.2,250.3L705.5,252.2L704.8,253.8L704,259.7L703.2,258.2L702.5,267.7L701.8,262.8L701,264.3L700.2,265.7L699.5,265.8L698.8,264.9L698,264.2L697.2,264.4L696.5,271.9L695.8,265.7L695,264.4L694.2,263.7L693.5,267.5L692.8,268.8L692,267.6L691.2,269.3L690.5,267.8L689.8,264.9L689,263.8L688.2,265.6L687.5,270.6L686.8,266.2L686,269.8L685.2,265.8L684.5,269.3L683.8,266.9L683,266.2L682.2,265.7L681.5,274.5L680.8,266.1L680,267L679.2,267.3L678.5,266.7L677.8,265.1L677,267.4L676.2,267.8L675.5,263.7L674.8,266.1L674,264.4L673.2,264.7L672.5,272.7L671.8,267.5L671,266.4L670.2,261.4L669.5,266.2L668.8,266.9L668,262.5L667.2,267.9L666.5,272.8L665.8,264.1L665,266.8L664.2,266L663.5,265.8L662.8,268.3L662,265.1L661.2,266.8L660.5,266L659.8,266.6L659,269.7L658.2,264.3L657.5,269.9L656.8,267.8L656,276.8L655.2,266.5L654.5,266L653.8,265L653,262.1L652.2,265.2L651.5,265.4L650.8,263.6L650,263.3L649.2,266.4L648.5,266.5L647.8,265.4L647,269L646.2,263.6L645.5,266.5L644.8,266.7L644,266.5L643.2,266.1L642.5,267.5L641.8,267.2L641,277.6L640.2,265.2L639.5,270.4L638.8,263.3L638,263.7L637.2,262.7L636.5,266.4L635.8,265.3L635,262.6L634.2,264.3L633.5,264.7L632.8,270.5L632,270L631.2,267.5L630.5,266.2L629.8,264.3L629,263.1L628.2,262.5L627.5,269.2L626.8,264.5L626,268.1L625.2,263.5L624.5,269.2L623.8,261.9L623,262.4L622.2,263.3L621.5,266.5L620.8,266.3L620,267.8L619.2,264.4L618.5,268.8L617.8,269.9L617,263.6L616.2,265.6L615.5,267.3L614.8,266.6L614,268.3L613.2,265.7L612.5,278.6L611.8,266.2L611,265.7L610.2,260.9L609.5,263.5L608.8,252.7L608,250.1L607.2,246.3L606.5,242.7L605.8,240.2L605,242.8L604.2,243.4L603.5,244.1L602.8,248.9L602,247.1L601.2,247.3L600.5,246.6L599.8,246.1L599,244.8L598.2,242.6L597.5,243L596.8,240.6L596,240.9L595.2,239.6L594.5,239.9L593.8,237.9L593,238L592.2,237.4L591.5,238.6L590.8,238.6L590,239L589.2,237.9L588.5,238.6L587.8,238.4L587,239.7L586.2,238.7L585.5,238.8L584.8,238.8L584,238.2L583.2,238.1L582.5,239.7L581.8,239.2L581,244.3L580.2,241.4L579.5,243.7L578.8,241.4L578,241.9L577.2,242.4L576.5,240.5L575.8,241.5L575,239.5L574.2,239.2L573.5,239.2L572.8,241.4L572,240.7L571.2,240L570.5,241.3L569.8,241.4L569,240.9L568.2,240.2L567.5,240.2L566.8,239.8L566,242.9L565.2,239.5L564.5,241.5L563.8,239.7L563,240.3L562.2,240.4L561.5,241.9L560.8,241.6L560,240.9L559.2,241.7L558.5,241.7L557.8,243.4L557,242.7L556.2,241.5L555.5,241L554.8,240.6L554,240.4L553.2,240.2L552.5,242.5L551.8,240.9L551,242.1L550.2,240.2L549.5,241.8L548.8,239.3L548,239.8L547.2,241L546.5,243.3L545.8,243.9L545,244.6L544.2,243.2L543.5,245.1L542.8,246L542,243.9L541.2,244.9L540.5,245.3L539.8,244.4L539,244.8L538.2,244.2L537.5,251.9L536.8,247.3L536,250.2L535.2,250.7L534.5,256.4L533.8,251.5L533,252.5L532.2,252.4L531.5,251.9L530.8,250.3L530,253L529.2,251.9L528.5,251.6L527.8,257.5L527,253.6L526.2,255.3L525.5,255.7L524.8,257L524,257.9L523.2,257.4L522.5,260.2L521.8,254.8L521,255L520.2,252.8L519.5,257.4L518.8,258.8L518,263.2L517.2,261.5L516.5,265.3L515.8,264.6L515,266.2L514.2,261.9L513.5,264.1L512.8,262.6L512,265.3L511.2,260.8L510.5,260.9L509.8,261.7L509,260.8L508.2,260.5L507.5,263.7L506.8,259.9L506,272.4L505.2,264.3L504.5,271.1L503.8,264.8L503,265.7L502.2,266.7L501.5,262L500.8,266.7L500,262.6L499.2,262.4L498.5,261L497.8,265L497,261.3L496.2,258.6L495.5,262.7L494.8,264.2L494,264.2L493.2,260.1L492.5,258.9L491.8,254.9L491,257.9L490.2,249.2L489.5,250.1L488.8,244.6L488,242.9L487.2,242.4L486.5,244.3L485.8,244.4L485,243.6L484.2,244.4L483.5,244.4L482.8,246.9L482,246.7L481.2,245.7L480.5,245L479.8,243.6L479,242.4L478.2,241.6L477.5,244.3L476.8,243.2L476,245.7L475.2,244.3L474.5,247L473.8,243.7L473,244L472.2,244.5L471.5,245.9L470.8,245.1L470,244.6L469.2,242.3L468.5,243.6L467.8,244.1L467,241.7L466.2,242.3L465.5,242.8L464.8,242.4L464,242.8L463.2,241.7L462.5,246.6L461.8,241.8L461,242.9L460.2,243.1L459.5,246.9L458.8,243.5L458,243.8L457.2,243.1L456.5,242.2L455.8,241L455,242.8L454.2,243.2L453.5,244.1L452.8,248.6L452,245.5L451.2,245.7L450.5,245.2L449.8,243.8L449,243.7L448.2,247.1L447.5,244.9L446.8,244.4L446,242.4L445.2,244.7L444.5,245.4L443.8,243.8L443,246.5L442.2,248.4L441.5,243.6L440.8,243.8L440,242.7L439.2,242.6L438.5,244.3L437.8,244L437,245.4L436.2,245.2L435.5,245.1L434.8,245.9L434,243.1L433.2,252.8L432.5,251.5L431.8,256.5L431,250.4L430.2,250.1L429.5,249.5L428.8,247.4L428,248.7L427.2,248.5L426.5,247.6L425.8,248.5L425,251.9L424.2,253.2L423.5,252.9L422.8,255.3L422,252.8L421.2,253.5L420.5,254.6L419.8,253.9L419,254.5L418.2,253.3L417.5,251L416.8,257.5L416,249.7L415.2,252.1L414.5,251.2L413.8,250.5L413,254L412.2,257.5L411.5,258.6L410.8,254.6L410,253.5L409.2,252.6L408.5,253.2L407.8,252.5L407,250.9L406.2,250.8L405.5,250.1L404.8,251.9L404,248.9L403.2,254.3L402.5,250.5L401.8,250.9L401,251L400.2,250.2L399.5,248.9L398.8,248L398,248L397.2,252.9L396.5,250.9L395.8,251.3L395,251L394.2,252.6L393.5,252.5L392.8,251.2L392,251.9L391.2,251L390.5,249.6L389.8,249.2L389,250.2L388.2,252.8L387.5,244.6L386.8,245.8L386,243.9L385.2,245.4L384.5,244.5L383.8,244.2L383,243.8L382.2,247.3L381.5,244.1L380.8,245.1L380,246.1L379.2,246.1L378.5,245.5L377.8,246.5L377,246.3L376.2,244L375.5,244.6L374.8,243.6L374,243.6L373.2,246.9L372.5,244.7L371.8,244L371,241.5L370.2,242.7L369.5,242.2L368.8,240.4L368,242.3L367.2,244.2L366.5,241.2L365.8,242.1L365,241.6L364.2,241.2L363.5,241.7L362.8,240.2L362,240.7L361.2,241.4L360.5,242.9L359.8,245.1L359,243.4L358.2,246.1L357.5,245.5L356.8,249.7L356,245L355.2,244L354.5,242.4L353.8,240.3L353,241.1L352.2,241.6L351.5,241.7L350.8,242.1L350,243L349.2,242L348.5,240.4L347.8,240.5L347,238.8L346.2,239.2L345.5,240.4L344.8,240.9L344,242L343.2,241.4L342.5,239.9L341.8,242.4L341,238.5L340.2,239.8L339.5,239.4L338.8,238.5L338,238.9L337.2,239.2L336.5,239.2L335.8,238.6L335,239.6L334.2,240.6L333.5,241.8L332.8,241.8L332,240.8L331.2,240.5L330.5,240.1L329.8,241L329,239.4L328.2,242.1L327.5,240.1L326.8,240.4L326,240.7L325.2,240.7L324.5,240.5L323.8,240.4L323,240.5L322.2,243L321.5,240.9L320.8,240.5L320,240.2L319.2,233.3L318.5,233.5L317.8,233.3L317,233.7L316.2,233.7L315.5,233.4L314.8,233.4L314,233.5L313.2,234L312.5,233.3L311.8,233.7L311,233.4L310.2,234.1L309.5,233.9L308.8,233.8L308,233.2L307.2,233.7L306.5,232.2L305.8,232L305,231.9L304.2,231.7L303.5,231.5L302.8,231.5L302,231.4L301.2,231.2L300.5,231.6L299.8,231.6L299,231.7L298.2,232.4L297.5,231.8L296.8,231.5L296,231L295.2,231.4L294.5,231.5L293.8,231.2L293,231.7L292.2,232.1L291.5,231.3L290.8,231.5L290,231.3L289.2,231.3L288.5,231.5L287.8,231.3L287,231.4L286.2,231.4L285.5,231.4L284.8,232L284,232.3L283.2,233.2L282.5,232L281.8,231.9L281,231.1L280.2,231L279.5,230.9L278.8,230.7L278,230.9L277.2,231L276.5,230.8L275.8,230.8L275,230.9L274.2,230.8L273.5,230.6L272.8,230.7L272,230.4L271.2,230.3L270.5,230.2L269.8,230.1L269,230.1L268.2,230L267.5,229.8L266.8,230.1L266,229.6L265.2,229.7L264.5,229.6L263.8,229.5L263,229.5L262.2,229.4L261.5,229.2L260.8,228.9L260,228.8L259.2,228.6L258.5,228.5L257.8,228.3L257,228.3L256.2,228.3L255.5,228.3L254.8,228.3L254,228.3Z" fill="#2c1529"/></g>
<g clip-path="url(#fw-selc)"><path d="M254,228.3L254.8,228.3L255.5,228.3L256.2,228.3L257,228.3L257.8,228.3L258.5,228.2L259.2,227.9L260,227.8L260.8,227.4L261.5,227.1L262.2,227.1L263,227.1L263.8,226.9L264.5,226.8L265.2,226.8L266,226.6L266.8,226.5L267.5,226.5L268.2,226.6L269,226.5L269.8,226.2L270.5,225.7L271.2,226.2L272,225.7L272.8,225.9L273.5,225.7L274.2,226L275,225.6L275.8,225.6L276.5,225.2L277.2,225.1L278,225L278.8,225.4L279.5,225.2L280.2,224.7L281,224.9L281.8,225.2L282.5,222.7L283.2,219.5L284,219.8L284.8,224.7L285.5,225.3L286.2,225.2L287,224.9L287.8,224.8L288.5,224.9L289.2,224.9L290,224.6L290.8,224.7L291.5,224.4L292.2,224.7L293,224.9L293.8,225L294.5,225.3L295.2,225.1L296,224.9L296.8,224.9L297.5,225L298.2,224.8L299,224.8L299.8,225L300.5,224.8L301.2,224.2L302,223.5L302.8,224.5L303.5,224.6L304.2,224.6L305,224.7L305.8,224.7L306.5,223.7L307.2,223L308,220.5L308.8,220.8L309.5,221.9L310.2,220.2L311,221.9L311.8,221.6L312.5,222.4L313.2,222.4L314,222.4L314.8,223.4L315.5,223.3L316.2,223.7L317,222.8L317.8,222.8L318.5,222.6L319.2,223L320,216.4L320.8,216.4L321.5,216L322.2,216.1L323,215.8L323.8,213.6L324.5,213.1L325.2,217.2L326,216L326.8,214.1L327.5,214.9L328.2,215.4L329,217.4L329.8,215.9L330.5,215.7L331.2,214.9L332,216.6L332.8,214.1L333.5,212.6L334.2,216.2L335,215.7L335.8,214.3L336.5,215.8L337.2,214.4L338,216.5L338.8,215.3L339.5,214.9L340.2,214L341,215.8L341.8,213.5L342.5,215.8L343.2,213.4L344,213.2L344.8,216.2L345.5,213.5L346.2,212.2L347,213.4L347.8,209.8L348.5,212.2L349.2,213.7L350,210L350.8,213.4L351.5,207L352.2,212.5L353,213.4L353.8,214.2L354.5,212.6L355.2,210.2L356,212.9L356.8,210.6L357.5,210L358.2,210.3L359,211.7L359.8,213.2L360.5,211.7L361.2,211.9L362,213.9L362.8,211.8L363.5,214.4L364.2,209.4L365,211.6L365.8,207.7L366.5,213L367.2,205.9L368,210.7L368.8,206.7L369.5,208.5L370.2,205.7L371,210.7L371.8,209.9L372.5,212.1L373.2,209.7L374,209.2L374.8,210.8L375.5,204.3L376.2,208.1L377,206.5L377.8,210L378.5,211L379.2,211.8L380,208.3L380.8,209.3L381.5,206.7L382.2,206.9L383,210.1L383.8,210L384.5,210.1L385.2,205.3L386,210L386.8,211.2L387.5,209.1L388.2,202.9L389,204.5L389.8,205.5L390.5,203.8L391.2,203L392,202.3L392.8,199.4L393.5,201.2L394.2,206.3L395,203.2L395.8,202.1L396.5,204.1L397.2,202.6L398,200.9L398.8,203.3L399.5,204.4L400.2,204.4L401,207.9L401.8,205.6L402.5,203.5L403.2,203.9L404,199.7L404.8,198.3L405.5,203.1L406.2,200.2L407,197.6L407.8,203.4L408.5,203.6L409.2,197.3L410,196.9L410.8,195.2L411.5,195.8L412.2,201.5L413,192.5L413.8,198.2L414.5,203.5L415.2,203.8L416,199L416.8,201.7L417.5,199.8L418.2,200L419,197.4L419.8,198.3L420.5,197.3L421.2,200L422,198.4L422.8,196.3L423.5,203L424.2,200.4L425,201.1L425.8,198.9L426.5,201.4L427.2,202.9L428,201.5L428.8,205.8L429.5,200.8L430.2,201.6L431,202.9L431.8,199.1L432.5,196.8L433.2,198.3L434,203.6L434.8,198.6L435.5,197L436.2,203.7L437,197.2L437.8,197.6L438.5,191.8L439.2,190.1L440,200.6L440.8,193.7L441.5,193.2L442.2,202.7L443,204.4L443.8,202.9L444.5,204.2L445.2,202.3L446,207.3L446.8,190.2L447.5,203L448.2,200.9L449,202.5L449.8,191.4L450.5,195.8L451.2,207.8L452,206.6L452.8,209.1L453.5,195.4L454.2,207.1L455,205L455.8,196.1L456.5,200.1L457.2,205.6L458,195.9L458.8,202.1L459.5,198.5L460.2,207.8L461,204.6L461.8,196.3L462.5,202L463.2,207.9L464,193.7L464.8,204.4L465.5,200.6L466.2,191.5L467,203.9L467.8,203.5L468.5,188.3L469.2,190.6L470,191.6L470.8,198.8L471.5,191.7L472.2,199.8L473,202.8L473.8,209.7L474.5,204L475.2,209.1L476,196.7L476.8,199.5L477.5,192.5L478.2,206.1L479,205L479.8,203L480.5,192.6L481.2,203L482,202.1L482.8,204.2L483.5,197.6L484.2,198L485,194.7L485.8,200.4L486.5,205.6L487.2,206.6L488,202.9L488.8,205.2L489.5,198.8L490.2,198.5L491,197.2L491.8,194.1L492.5,193.2L493.2,194.6L494,184.3L494.8,190L495.5,191L496.2,187.8L497,179.8L497.8,189.4L498.5,184.4L499.2,178.3L500,183.2L500.8,186.6L501.5,188.6L502.2,183.3L503,189.4L503.8,187.7L504.5,191.4L505.2,185.2L506,186L506.8,186.5L507.5,186.2L508.2,190L509,180.6L509.8,189.6L510.5,185.3L511.2,186.9L512,181.5L512.8,182.8L513.5,182.8L514.2,190.7L515,187.6L515.8,194.3L516.5,190.4L517.2,193.3L518,184.9L518.8,192.9L519.5,198.4L520.2,197.6L521,192.3L521.8,197.4L522.5,191.7L523.2,201.1L524,191.9L524.8,199.6L525.5,196.8L526.2,196.1L527,196.3L527.8,199.3L528.5,200.7L529.2,202.3L530,194.5L530.8,205.2L531.5,206L532.2,205.7L533,204.6L533.8,203.5L534.5,204.5L535.2,206.3L536,202.1L536.8,207.3L537.5,205.4L538.2,209.3L539,208.3L539.8,205.9L540.5,208.4L541.2,210.6L542,209.6L542.8,209.8L543.5,209L544.2,209.4L545,213.8L545.8,210.9L546.5,212.4L547.2,213.1L548,210.5L548.8,215.3L549.5,211.9L550.2,210.6L551,211.7L551.8,213.4L552.5,215.1L553.2,213.5L554,215.3L554.8,214.4L555.5,212.7L556.2,214.2L557,213.5L557.8,214.3L558.5,213.6L559.2,211.3L560,214L560.8,214.4L561.5,213.8L562.2,212.2L563,213.1L563.8,210.1L564.5,208.1L565.2,212.1L566,214.6L566.8,213.6L567.5,214.5L568.2,216.1L569,214.7L569.8,212.7L570.5,211.2L571.2,214.6L572,214.1L572.8,215.4L573.5,212.7L574.2,214.1L575,216.2L575.8,214.5L576.5,216L577.2,213.9L578,216.9L578.8,215.5L579.5,215.4L580.2,215.9L581,216.7L581.8,214.9L582.5,214.2L583.2,214.8L584,214.4L584.8,214.9L585.5,217.4L586.2,217.4L587,217.9L587.8,216.5L588.5,218.6L589.2,218.3L590,218.9L590.8,216.8L591.5,215.9L592.2,215.9L593,215.5L593.8,217.1L594.5,214.8L595.2,214.3L596,214.7L596.8,214.5L597.5,216L598.2,213.5L599,204.9L599.8,206.3L600.5,206.6L601.2,206.4L602,203.9L602.8,207.6L603.5,208.5L604.2,207.9L605,207.4L605.8,213.5L606.5,211.6L607.2,203.5L608,205.3L608.8,204.8L609.5,197.7L610.2,195.7L611,190.1L611.8,187.1L612.5,186L613.2,184.2L614,182.6L614.8,192.3L615.5,189.2L616.2,185L617,188.7L617.8,187.6L618.5,184.8L619.2,185.3L620,187.8L620.8,188.6L621.5,183L622.2,189.8L623,189.4L623.8,186.9L624.5,186.8L625.2,191.2L626,187.3L626.8,177.6L627.5,181.9L628.2,185.6L629,179.9L629.8,182.7L630.5,185.5L631.2,182.8L632,186.7L632.8,191.8L633.5,188.1L634.2,189.1L635,189.1L635.8,190.7L636.5,191.9L637.2,185L638,190.3L638.8,187.2L639.5,181.3L640.2,184.3L641,185.2L641.8,183.8L642.5,187.3L643.2,188L644,186L644.8,180.6L645.5,184.9L646.2,188.2L647,187.4L647.8,185L648.5,188.9L649.2,184.3L650,187.7L650.8,187.3L651.5,183.5L652.2,186L653,188.7L653.8,176.1L654.5,187.5L655.2,191.1L656,185.2L656.8,192.8L657.5,187.8L658.2,186L659,187.1L659.8,183.2L660.5,182.1L661.2,191.2L662,190.8L662.8,185L663.5,187.9L664.2,186.3L665,185.3L665.8,182.6L666.5,177.9L667.2,188.8L668,188.8L668.8,187L669.5,189.7L670.2,188.5L671,181.5L671.8,185.3L672.5,176.1L673.2,184.4L674,186.8L674.8,190.1L675.5,185.4L676.2,189L677,187.8L677.8,186.1L678.5,189.1L679.2,189.1L680,182.4L680.8,183.9L681.5,183.5L682.2,185.5L683,185L683.8,190.2L684.5,183.6L685.2,186.4L686,190.9L686.8,189.7L687.5,186.4L688.2,187.5L689,189.7L689.8,185.2L690.5,182.5L691.2,187.9L692,182.4L692.8,187.6L693.5,187L694.2,188.9L695,190.7L695.8,189.8L696.5,187.6L697.2,188.4L698,190.7L698.8,183.9L699.5,183.3L700.2,188.7L701,186.7L701.8,189.1L702.5,190.1L703.2,188.5L704,197.3L704.8,201.9L705.5,203.8L706.2,204.1L707,206.6L707.8,206.3L708.5,205.4L709.2,208.4L710,211.1L710.8,214.4L711.5,215.2L712.2,213.3L713,215.1L713.8,215L714.5,214.2L715.2,214.7L716,214.2L716.8,214L717.5,212.5L718.2,215.2L719,212.9L719.8,216.8L720.5,216.7L721.2,216.3L722,216.6L722.8,216L723.5,214.2L724.2,213.6L725,214L725.8,215.8L726.5,214.5L727.2,210.7L728,211.9L728.8,211.9L729.5,211.1L730.2,210.6L731,208L731.8,210.9L732.5,206.9L733.2,207.3L734,209.9L734.8,209.6L735.5,209.5L736.2,207.8L737,208.2L737.8,205.5L738.5,207.6L739.2,203.2L740,205.7L740.8,203.5L741.5,200.8L742.2,201L743,202.8L743.8,202.3L744.5,200.8L745.2,205.2L746,204.8L746.8,200.2L747.5,205L748.2,206.2L749,207.2L749.8,207L750.5,205.1L751.2,207.2L752,207.2L752.8,205.2L753.5,208.6L754.2,209.3L755,211L755.8,212.4L756.5,212.9L757.2,213.1L758,212L758.8,211.1L759.5,213L760.2,215.7L761,214.1L761.8,216.7L762.5,217.1L763.2,217.7L764,218.6L764.8,220.4L765.5,220.6L766.2,221.5L767,221.9L767.8,222.2L768.5,223.3L769.2,223.8L770,224.9L770.8,225L771.5,226L772.2,227L773,227.7L773.8,228.3L774.5,228.3L775.2,228.3L776,228.3L776.8,228.3L776.8,228.3L776,228.3L775.2,228.3L774.5,228.3L773.8,228.3L773,229L772.2,229.8L771.5,231L770.8,231.5L770,231.9L769.2,232.5L768.5,233.5L767.8,233.9L767,234.1L766.2,235.3L765.5,235.8L764.8,236.3L764,237.3L763.2,238.7L762.5,241.6L761.8,240.3L761,242L760.2,241.6L759.5,243.1L758.8,241.9L758,242.4L757.2,241.8L756.5,245.1L755.8,242.7L755,244.7L754.2,245.1L753.5,246L752.8,247.7L752,249.3L751.2,250.3L750.5,248.2L749.8,250.3L749,250.5L748.2,254.4L747.5,262.4L746.8,260.7L746,259.1L745.2,255.5L744.5,260.2L743.8,259.1L743,256.3L742.2,258.1L741.5,261.2L740.8,253.3L740,256.3L739.2,255L738.5,255.1L737.8,256.8L737,254.5L736.2,254L735.5,253.8L734.8,251.7L734,254.4L733.2,249.3L732.5,250.8L731.8,247.3L731,251.9L730.2,246.3L729.5,245.1L728.8,244.6L728,243L727.2,244.6L726.5,244.6L725.8,242.1L725,243.8L724.2,242.7L723.5,243.8L722.8,242.6L722,245.3L721.2,242.6L720.5,243L719.8,243.3L719,242.7L718.2,241.9L717.5,243.1L716.8,242.5L716,245.1L715.2,240.2L714.5,242.3L713.8,242L713,241.2L712.2,242.6L711.5,244.3L710.8,245.3L710,244L709.2,246.2L708.5,246.5L707.8,249.1L707,253.1L706.2,251.4L705.5,255.8L704.8,255.3L704,264L703.2,261.7L702.5,269.3L701.8,264.3L701,267.1L700.2,269L699.5,267.7L698.8,269.3L698,265.4L697.2,265.7L696.5,274.1L695.8,270.7L695,267.7L694.2,268.3L693.5,271.8L692.8,271.3L692,269.1L691.2,272.6L690.5,271L689.8,267.8L689,266.7L688.2,268.3L687.5,276.1L686.8,269.9L686,274.2L685.2,271.1L684.5,273.6L683.8,268.6L683,269.6L682.2,267.5L681.5,276L680.8,267.5L680,270.5L679.2,269L678.5,268.4L677.8,270L677,270.7L676.2,271L675.5,265.5L674.8,268.2L674,265.8L673.2,269.6L672.5,277.6L671.8,272.7L671,268.1L670.2,263.2L669.5,269.8L668.8,268.3L668,267.5L667.2,271L666.5,277.5L665.8,266.3L665,272.3L664.2,269.1L663.5,268.3L662.8,270.6L662,268.9L661.2,269.6L660.5,271.2L659.8,268.1L659,274.5L658.2,267L657.5,272.9L656.8,269.2L656,280.6L655.2,270L654.5,268.2L653.8,268L653,265.3L652.2,270.4L651.5,270.5L650.8,264.9L650,268.3L649.2,267.9L648.5,270.5L647.8,268L647,274L646.2,266.7L645.5,268.9L644.8,268.1L644,269.8L643.2,270.8L642.5,271L641.8,269.7L641,279.2L640.2,268.8L639.5,271.8L638.8,266.8L638,265.9L637.2,267.1L636.5,271.6L635.8,267.6L635,264.4L634.2,266.5L633.5,267.6L632.8,273.8L632,271.6L631.2,271.1L630.5,268.3L629.8,267.6L629,264.7L628.2,263.9L627.5,271.5L626.8,268.6L626,271.5L625.2,266.8L624.5,270.5L623.8,264.3L623,264.5L622.2,266.2L621.5,269.4L620.8,270.3L620,272.6L619.2,268.6L618.5,273.8L617.8,275.4L617,266.2L616.2,267L615.5,271.2L614.8,271.2L614,270.4L613.2,270.5L612.5,280.6L611.8,268.7L611,270.3L610.2,263.4L609.5,265.5L608.8,255.6L608,252.5L607.2,250.4L606.5,245.3L605.8,243.1L605,244.4L604.2,244.5L603.5,245.9L602.8,249.9L602,248.7L601.2,248.9L600.5,248.2L599.8,247.3L599,248.4L598.2,244.6L597.5,245.3L596.8,243.5L596,243.2L595.2,241.1L594.5,241L593.8,240L593,240.6L592.2,239.6L591.5,239.6L590.8,240.5L590,242.4L589.2,238.9L588.5,240.1L587.8,239.9L587,241.1L586.2,240.2L585.5,242.2L584.8,241.2L584,239.5L583.2,239.2L582.5,242.4L581.8,242.9L581,247.4L580.2,244.7L579.5,244.9L578.8,242.6L578,245.6L577.2,244.4L576.5,241.6L575.8,243.4L575,242.2L574.2,241.8L573.5,240.5L572.8,242.3L572,242L571.2,242L570.5,242.9L569.8,242.3L569,243.1L568.2,243.3L567.5,242.5L566.8,241.5L566,244L565.2,241.9L564.5,242.4L563.8,242L563,241.8L562.2,243.3L561.5,245.4L560.8,243.1L560,242.1L559.2,243.2L558.5,243.7L557.8,245.6L557,243.8L556.2,244.1L555.5,242.6L554.8,242.9L554,241.4L553.2,241.1L552.5,244.2L551.8,243.9L551,244.7L550.2,242.7L549.5,242.8L548.8,241.3L548,241.5L547.2,243.5L546.5,245.9L545.8,247.6L545,249.2L544.2,247.3L543.5,250.3L542.8,251.8L542,246.7L541.2,246.5L540.5,249.8L539.8,249.8L539,247.3L538.2,249.9L537.5,253.9L536.8,250.3L536,256.1L535.2,254.1L534.5,259.3L533.8,255.9L533,256.5L532.2,259.6L531.5,256.7L530.8,256L530,256.2L529.2,254.1L528.5,255.2L527.8,259.6L527,257.2L526.2,258.8L525.5,259.2L524.8,259.8L524,266.2L523.2,261.8L522.5,265.2L521.8,261L521,259.7L520.2,255.7L519.5,259.6L518.8,264.6L518,271L517.2,268.2L516.5,268.4L515.8,270.2L515,276.7L514.2,265.1L513.5,268.4L512.8,266.9L512,269.5L511.2,265.2L510.5,271L509.8,269L509,264.6L508.2,263.6L507.5,271.8L506.8,270.9L506,280.6L505.2,274.2L504.5,274.6L503.8,268.2L503,276.9L502.2,272.6L501.5,265.2L500.8,272.3L500,270.8L499.2,270.3L498.5,264.9L497.8,268L497,265.3L496.2,264.8L495.5,267.5L494.8,267L494,270.8L493.2,270.9L492.5,268.3L491.8,262.4L491,263.4L490.2,261.8L489.5,255.1L488.8,257.2L488,251.3L487.2,258.8L486.5,264L485.8,252.9L485,250.3L484.2,252.9L483.5,255.2L482.8,259.2L482,252.8L481.2,259.6L480.5,253.1L479.8,255.8L479,248.1L478.2,246.5L477.5,253L476.8,258.4L476,258.5L475.2,256.9L474.5,251.9L473.8,252.7L473,251.7L472.2,255.3L471.5,256.8L470.8,260L470,262.5L469.2,258.2L468.5,262.6L467.8,264.7L467,251.5L466.2,247.8L465.5,257.6L464.8,259.9L464,250.9L463.2,259.9L462.5,252.8L461.8,251.1L461,261.2L460.2,253.5L459.5,255.5L458.8,257L458,255.8L457.2,264.3L456.5,256.3L455.8,257.6L455,251.9L454.2,249.5L453.5,254.3L452.8,254.4L452,255.3L451.2,255.2L450.5,254.4L449.8,249L449,263.1L448.2,266L447.5,264.8L446.8,250.8L446,249.1L445.2,258.1L444.5,250.9L443.8,262.8L443,258.2L442.2,266.3L441.5,252L440.8,264.2L440,254.2L439.2,251.9L438.5,253L437.8,257.8L437,255.8L436.2,264.3L435.5,250.7L434.8,263.3L434,252.7L433.2,256.9L432.5,253.3L431.8,263.1L431,255.1L430.2,253.1L429.5,253.5L428.8,251.7L428,255.7L427.2,255.4L426.5,249.3L425.8,255.3L425,253.9L424.2,258.7L423.5,256.3L422.8,262L422,255.4L421.2,256.7L420.5,258.7L419.8,259.1L419,257.2L418.2,260.1L417.5,258.4L416.8,262.7L416,251.3L415.2,254.3L414.5,253.8L413.8,252.8L413,258.1L412.2,264.3L411.5,266.9L410.8,259.4L410,259.7L409.2,254.7L408.5,255.4L407.8,258.9L407,253L406.2,257.1L405.5,252.6L404.8,258.8L404,254.2L403.2,256.5L402.5,252.6L401.8,254.5L401,254.9L400.2,252.4L399.5,254L398.8,249.4L398,249.4L397.2,255.4L396.5,256.4L395.8,254.9L395,256L394.2,257.3L393.5,255.1L392.8,252.8L392,255.4L391.2,254.4L390.5,252.6L389.8,252.1L389,252.9L388.2,258.3L387.5,247.7L386.8,249.5L386,248.3L385.2,249L384.5,246L383.8,247L383,245.2L382.2,248.6L381.5,245.3L380.8,248L380,247.5L379.2,247.5L378.5,249.6L377.8,249.3L377,249L376.2,245.5L375.5,246.3L374.8,244.7L374,247.7L373.2,251L372.5,249L371.8,245.5L371,243.4L370.2,247.2L369.5,244.4L368.8,248.8L368,248.1L367.2,253.5L366.5,245.2L365.8,251.1L365,246.2L364.2,244.5L363.5,244.4L362.8,243.9L362,243.1L361.2,245.8L360.5,244.2L359.8,249.1L359,245.6L358.2,248.7L357.5,246.7L356.8,253.8L356,247.8L355.2,245.8L354.5,244.7L353.8,242.7L353,244.9L352.2,245.3L351.5,242.6L350.8,245.5L350,244L349.2,244.8L348.5,242.1L347.8,243.8L347,240.1L346.2,240.9L345.5,242.5L344.8,243.5L344,243.3L343.2,244.8L342.5,243.6L341.8,245L341,239.3L340.2,240.9L339.5,240.6L338.8,239.4L338,240.6L337.2,241.6L336.5,241.9L335.8,240.4L335,242.1L334.2,241.5L333.5,242.9L332.8,245L332,241.8L331.2,243.8L330.5,241.4L329.8,244.7L329,242.2L328.2,243.3L327.5,241.2L326.8,242.4L326,242.9L325.2,242L324.5,243.5L323.8,241.2L323,241.3L322.2,244.5L321.5,244.3L320.8,242.7L320,243.2L319.2,234.4L318.5,234.1L317.8,233.7L317,234.5L316.2,234.5L315.5,234.2L314.8,234.1L314,234.2L313.2,235.4L312.5,234.2L311.8,234.9L311,235.2L310.2,235.8L309.5,234.7L308.8,235.3L308,233.9L307.2,234.2L306.5,232.5L305.8,232.5L305,232.2L304.2,232L303.5,232.3L302.8,232.1L302,232L301.2,231.5L300.5,231.9L299.8,231.9L299,232.6L298.2,233.2L297.5,232.6L296.8,231.8L296,231.3L295.2,232.1L294.5,231.8L293.8,232.1L293,232.3L292.2,233.1L291.5,231.8L290.8,232.6L290,232L289.2,231.8L288.5,232L287.8,232.1L287,232.1L286.2,232.7L285.5,231.8L284.8,234.5L284,235.8L283.2,237.9L282.5,233L281.8,232.8L281,231.7L280.2,231.4L279.5,231.3L278.8,231.1L278,231.7L277.2,231.7L276.5,231L275.8,231.4L275,231.1L274.2,231.2L273.5,230.9L272.8,231.3L272,230.6L271.2,230.5L270.5,230.5L269.8,230.5L269,230.3L268.2,230.5L267.5,230.3L266.8,230.5L266,229.7L265.2,229.9L264.5,229.8L263.8,229.6L263,229.7L262.2,229.7L261.5,229.5L260.8,229.1L260,228.9L259.2,228.7L258.5,228.5L257.8,228.3L257,228.3L256.2,228.3L255.5,228.3L254.8,228.3L254,228.3Z" fill="#3aa8d8" opacity="0.36"/><path d="M309.5,220.8V236.2M311,221.5V234.6M320,215.2V242.2M323,214.5V243.9M324.5,214.6V245.3M326,215.4V245M327.5,212V243.6M329,215.3V242.7M335,214.7V244.5M336.5,213.6V241.8M342.5,214V244.1M345.5,212.9V244.7M348.5,210.3V245M350,210.4V245.6M351.5,208.6V245.9M353,211.7V245.5M354.5,211.6V248M357.5,209.9V249M359,212.5V247.2M368,204V248.7M369.5,207.1V247.4M371,206.4V245.8M372.5,207.7V249.4M374,207.9V248.1M375.5,204.2V249.6M380,209V251.4M381.5,207.9V248.3M383,208.3V249.4M384.5,207.8V248.4M386,206.6V247.6M387.5,209.1V248.4M389,202.7V254.3M390.5,201.8V256.8M396.5,203.3V257.8M399.5,203.9V255.7M401,202.5V258.7M404,199.4V256M405.5,198V255.8M407,199.9V256.7M408.5,197.6V261.6M410,191.8V260.7M411.5,189.8V266.4M414.5,200.8V260.7M416,199.6V259M419,193.4V260.9M420.5,194.6V262M425,196.7V260M428,198V253.4M437,196V256.9M438.5,184.2V269.6M449,189V272.8M450.5,185.9V257.4M453.5,201.7V261.9M455,184V266.2M456.5,193.2V254.8M458,200.1V263.1M459.5,183.4V260.4M461,191.9V261.5M464,198.2V265.8M465.5,191.7V269.3M470,198.4V261.8M473,195.5V270.6M474.5,202.4V266M482,185.7V264.5M485,185.8V267.1M488,191.8V264.4M489.5,190.3V266.9M491,198V268.7M492.5,193.8V271.3M494,177V276.4M495.5,186V271M497,175.6V274.9M498.5,183.7V272.7M501.5,186.3V268.5M504.5,189.2V277.6M506,181.5V281.1M509,175.6V273.6M510.5,180.6V275M512,178.9V279.9M515,185.9V280.1M516.5,187.1V279.6M518,182.9V274.3M519.5,194.6V262.6M524,190.1V266.6M525.5,192.9V261.4M528.5,198.1V258.7M533,204.5V257.5M539,204.3V249.7M540.5,204.6V253.1M542,209.1V250.1M545,209.6V248.7M549.5,209.2V246.1M551,212.6V247.4M554,212.6V243.6M555.5,211.9V245M558.5,211V246M560,210.8V243.7M561.5,214.1V244.4M563,211.6V242.3M564.5,206.5V245.4M566,213.7V246.9M572,212.9V244.7M573.5,209.7V242.5M575,212.3V241.6M584,213.1V243M585.5,215.2V241.1M588.5,216.5V242.3M590,215.2V243.8M593,213.7V242.1M599,204.7V247.9M600.5,205.1V248.7M602,201.8V251.2M603.5,205.9V247.9M608,205.3V255.3M611,188.8V271.7M612.5,185.5V281.1M614,182.4V271.5M621.5,181.7V271.2M626,187.5V273.5M629,178.7V269.4M632,183.8V274.1M633.5,183V268.4M635,187.6V269.7M638,187.6V267.6M641,182.8V281.1M642.5,183.2V271.6M644,182.2V271.3M647,183.2V274.2M654.5,183.4V271.8M656,186V281.1M657.5,186V276.4M665,183.5V270.7M666.5,176.4V276.2M669.5,184.1V271.4M671,180.8V271.6M674,183.4V271.7M675.5,183.6V268.4M677,184.8V272.4M678.5,185V271.1M683,184.5V269.3M684.5,183.5V276.2M687.5,186.5V276.1M689,188.3V268.9M692,181.9V271.6M693.5,184.2V272.3M695,188.4V269.6M696.5,182.2V278.6M698,189.7V268.7M699.5,180.2V270.9M701,187.5V269.1M705.5,200.3V256.6M710,210V244.3M713,212.7V243.5M714.5,212.8V244.6M717.5,211.7V244.2M719,211.9V243.2M722,216V245.7M725,213.7V243M731,208.6V252.6M734,208.3V255.4M735.5,208.4V253.3M737,205.7V254.9M738.5,206.2V256M741.5,198.7V261.7M743,202.7V256M744.5,201V261.9M747.5,203.7V262.7M752,207.1V249.3M753.5,207.4V248.2M761,213.8V241.9M762.5,216.7V241.3M283.3,211.3V244M283.9,216.3V239.4M309,218.3V237.5M343,212.3V243.1M357,206.3V248.6M357.6,210.3V244.9M367.5,201.3V253.2M368.1,208.3V246.8M380,204.3V250.4M396,201.3V253.2M404,198.3V255.9M411.5,190.3V263.3M412.1,198.3V255.9M420,198.3V255.9M428,197.3V256.9M526,192.3V261.5M534,198.3V255.9M545,206.3V248.6M603,201.3V253.2" stroke="#4fc2ea" stroke-width="0.85" opacity="0.62" fill="none"/><path d="M254,228.3L254.8,228.3L255.5,228.3L256.2,228.3L257,228.3L257.8,228.3L258.5,228.2L259.2,228L260,227.8L260.8,227.6L261.5,227.4L262.2,227.3L263,227.4L263.8,227.3L264.5,227.2L265.2,227L266,226.9L266.8,226.6L267.5,226.7L268.2,226.8L269,226.7L269.8,226.6L270.5,226.2L271.2,226.4L272,226.3L272.8,226L273.5,226.1L274.2,226.1L275,226.1L275.8,225.7L276.5,225.5L277.2,225.4L278,225.7L278.8,225.7L279.5,225.7L280.2,225.3L281,225.6L281.8,225.4L282.5,225L283.2,223.8L284,224.1L284.8,225.7L285.5,226L286.2,225.9L287,225.6L287.8,225.6L288.5,225.1L289.2,225.5L290,225.5L290.8,225.2L291.5,225.5L292.2,225.5L293,225.1L293.8,225.7L294.5,225.7L295.2,225.6L296,225.8L296.8,225.6L297.5,225.4L298.2,225.2L299,225.3L299.8,225.3L300.5,225.2L301.2,225L302,224.3L302.8,225L303.5,225.1L304.2,225.3L305,225L305.8,225.1L306.5,224.5L307.2,223.4L308,222.4L308.8,221.4L309.5,222.4L310.2,222.2L311,223.2L311.8,223L312.5,223.3L313.2,223.4L314,223.4L314.8,224.4L315.5,224.4L316.2,224.1L317,223.9L317.8,223.8L318.5,223.8L319.2,223.9L320,217.8L320.8,217.9L321.5,218.5L322.2,216.9L323,216.6L323.8,216.6L324.5,216.6L325.2,218L326,218.3L326.8,217.8L327.5,216.6L328.2,217.9L329,218.4L329.8,216.7L330.5,216.7L331.2,215.8L332,217.6L332.8,216.8L333.5,215.4L334.2,217.1L335,218.4L335.8,217.1L336.5,218.3L337.2,216.3L338,217.8L338.8,218L339.5,215.7L340.2,217.1L341,217.3L341.8,214.5L342.5,217.8L343.2,215L344,215L344.8,217.2L345.5,215.1L346.2,214.6L347,215L347.8,213.4L348.5,214.4L349.2,214.6L350,212.7L350.8,215L351.5,210.9L352.2,215L353,215.4L353.8,216L354.5,215.4L355.2,213.8L356,213.9L356.8,212.8L357.5,213.9L358.2,211.4L359,215.6L359.8,216L360.5,215.7L361.2,215.2L362,215.9L362.8,215L363.5,216.4L364.2,216.3L365,216.8L365.8,212.4L366.5,216.5L367.2,214.7L368,213.3L368.8,214.1L369.5,213.6L370.2,212.2L371,213.9L371.8,211.4L372.5,213.5L373.2,211.7L374,211.4L374.8,212.1L375.5,209L376.2,209.3L377,210.2L377.8,212.9L378.5,213.6L379.2,212.9L380,212.4L380.8,212.1L381.5,210.5L382.2,211.3L383,214L383.8,211.6L384.5,211.6L385.2,206.4L386,212.8L386.8,213.5L387.5,213.4L388.2,206.5L389,206L389.8,207.5L390.5,207.7L391.2,207.1L392,205.2L392.8,205.3L393.5,203.2L394.2,208.4L395,208.9L395.8,207.4L396.5,209.1L397.2,206.9L398,202.4L398.8,208.3L399.5,208.9L400.2,208.5L401,209.6L401.8,208L402.5,207.1L403.2,206.2L404,204.6L404.8,203.5L405.5,204.7L406.2,202.6L407,204.1L407.8,205.5L408.5,205.6L409.2,204.8L410,201.7L410.8,204L411.5,203.1L412.2,204.9L413,199.6L413.8,200.7L414.5,206.4L415.2,205.9L416,205.4L416.8,203.9L417.5,202.8L418.2,201.9L419,199.2L419.8,203.4L420.5,201.2L421.2,202.7L422,201.6L422.8,203.9L423.5,204.9L424.2,207.2L425,206.7L425.8,206.4L426.5,207.5L427.2,205L428,207.8L428.8,208L429.5,207.7L430.2,206.1L431,205.1L431.8,204.5L432.5,198.6L433.2,203.1L434,210.9L434.8,211.5L435.5,213.8L436.2,210.1L437,212.5L437.8,212.8L438.5,208.8L439.2,207.8L440,211.7L440.8,213L441.5,211.7L442.2,209.1L443,213.6L443.8,212.2L444.5,208.8L445.2,212.9L446,213L446.8,208.2L447.5,211.6L448.2,210.5L449,207.6L449.8,212.7L450.5,208.2L451.2,212.6L452,213.8L452.8,214.7L453.5,213.5L454.2,212.6L455,211.7L455.8,209.7L456.5,212.3L457.2,211.2L458,211.7L458.8,207.9L459.5,210.2L460.2,213.5L461,210.5L461.8,215.1L462.5,214.8L463.2,214.1L464,214L464.8,214.5L465.5,212.6L466.2,211.8L467,212.6L467.8,212.1L468.5,209.4L469.2,210.1L470,209.7L470.8,210.5L471.5,211.7L472.2,209.8L473,211.9L473.8,214.7L474.5,215.5L475.2,214.9L476,213.3L476.8,213.4L477.5,211.4L478.2,210.8L479,212.5L479.8,210.6L480.5,212.3L481.2,210.3L482,212.3L482.8,212.1L483.5,211.7L484.2,211L485,206.3L485.8,211.2L486.5,211.5L487.2,212.4L488,212.6L488.8,212.2L489.5,210.3L490.2,210.8L491,209.7L491.8,206.4L492.5,201.9L493.2,201.4L494,188.1L494.8,196.2L495.5,197.9L496.2,192.5L497,183.5L497.8,195.3L498.5,195.7L499.2,187.1L500,185.8L500.8,192.1L501.5,193.7L502.2,191.7L503,193.1L503.8,196.2L504.5,196L505.2,193L506,195.7L506.8,192.8L507.5,194.7L508.2,195.9L509,188.8L509.8,192.6L510.5,187.7L511.2,193.8L512,192.4L512.8,188.1L513.5,192.8L514.2,195.6L515,193.3L515.8,198.5L516.5,197L517.2,197.8L518,194.6L518.8,198L519.5,201.3L520.2,202.2L521,194.2L521.8,200.5L522.5,198.6L523.2,203.7L524,199.7L524.8,201.5L525.5,201.2L526.2,202.4L527,204.4L527.8,203.6L528.5,204.2L529.2,207L530,201.7L530.8,209.4L531.5,209.2L532.2,210L533,211L533.8,207.2L534.5,209.1L535.2,209.2L536,207.9L536.8,210L537.5,211.1L538.2,211L539,213L539.8,212.5L540.5,211.5L541.2,213L542,212.9L542.8,211.6L543.5,212.6L544.2,215L545,215L545.8,215L546.5,215.9L547.2,215L548,213.3L548.8,216.7L549.5,214.4L550.2,213.4L551,215.9L551.8,215.3L552.5,216.3L553.2,214.5L554,216.5L554.8,217.8L555.5,215.9L556.2,215.1L557,215.1L557.8,215.9L558.5,214.9L559.2,214.7L560,215.6L560.8,216L561.5,217.2L562.2,215.9L563,215.6L563.8,211L564.5,211.3L565.2,215.5L566,216.1L566.8,217.2L567.5,218.1L568.2,217.8L569,215.9L569.8,216.1L570.5,214.2L571.2,215.7L572,215.3L572.8,216.8L573.5,213.7L574.2,215.8L575,217.1L575.8,217.6L576.5,217.3L577.2,215.3L578,217.7L578.8,217.1L579.5,218.1L580.2,217.2L581,217.7L581.8,218L582.5,215.3L583.2,217.6L584,218.1L584.8,218.5L585.5,218.7L586.2,218.4L587,219.2L587.8,218.8L588.5,219.9L589.2,219.5L590,219.9L590.8,219L591.5,218.9L592.2,218.4L593,217L593.8,218.1L594.5,218L595.2,216.8L596,216.9L596.8,216.5L597.5,216.9L598.2,214.7L599,207.7L599.8,208L600.5,209.6L601.2,209.7L602,205.3L602.8,210.3L603.5,210L604.2,210.5L605,208.7L605.8,215.1L606.5,212.8L607.2,207.3L608,208.4L608.8,205.9L609.5,199.2L610.2,197.9L611,192.2L611.8,188.8L612.5,189.4L613.2,186.1L614,186.5L614.8,193.5L615.5,193.6L616.2,186.3L617,192.2L617.8,189.5L618.5,189.3L619.2,190.5L620,189.2L620.8,191.1L621.5,187.7L622.2,191.2L623,192.1L623.8,190.9L624.5,191.5L625.2,194L626,191.3L626.8,180.7L627.5,183.4L628.2,186.9L629,184.5L629.8,186L630.5,189.2L631.2,184.7L632,189.1L632.8,193.6L633.5,189.6L634.2,193L635,191L635.8,193.5L636.5,194.2L637.2,190.1L638,193.6L638.8,191.9L639.5,185.6L640.2,188.2L641,188L641.8,188.5L642.5,189.4L643.2,189.7L644,188.1L644.8,184.6L645.5,186.4L646.2,191.1L647,188.7L647.8,190.7L648.5,190.2L649.2,189.9L650,189.1L650.8,190L651.5,186.7L652.2,191.2L653,192.4L653.8,179L654.5,189.5L655.2,192.3L656,190L656.8,194.5L657.5,192.6L658.2,187.7L659,191.8L659.8,185.4L660.5,186.8L661.2,193.6L662,193.2L662.8,186.9L663.5,191.2L664.2,191L665,190.4L665.8,185.6L666.5,179.5L667.2,192.2L668,192.7L668.8,189.8L669.5,191.1L670.2,191.2L671,185.6L671.8,190.1L672.5,179.7L673.2,186.4L674,189.9L674.8,192.4L675.5,189.2L676.2,194.2L677,189.9L677.8,189.4L678.5,190.9L679.2,191.3L680,187.9L680.8,188.8L681.5,189L682.2,190.1L683,188.9L683.8,192.3L684.5,189.1L685.2,190.2L686,193.2L686.8,191L687.5,190.3L688.2,188.9L689,192.2L689.8,187.8L690.5,185.9L691.2,189.3L692,187.4L692.8,189L693.5,189L694.2,192.1L695,193.7L695.8,191.7L696.5,189.1L697.2,191.9L698,193.3L698.8,186.7L699.5,186.6L700.2,193L701,192.1L701.8,190.4L702.5,192.3L703.2,193L704,200.8L704.8,205.3L705.5,205.2L706.2,205L707,207.8L707.8,209L708.5,208.6L709.2,211.4L710,214.1L710.8,215.3L711.5,216.4L712.2,215.2L713,215.8L713.8,217.1L714.5,216.3L715.2,216.5L716,215.8L716.8,214.7L717.5,214.4L718.2,216.1L719,215.3L719.8,217.6L720.5,217.5L721.2,217.1L722,217.6L722.8,217.3L723.5,216.7L724.2,215.6L725,216.7L725.8,216.9L726.5,216L727.2,213L728,212.8L728.8,213.9L729.5,212.6L730.2,213L731,210.5L731.8,211.6L732.5,207.8L733.2,209L734,210.7L734.8,211L735.5,210.8L736.2,208.4L737,209.3L737.8,206.9L738.5,208.3L739.2,205.1L740,206.8L740.8,204.5L741.5,202.4L742.2,203.8L743,204.5L743.8,204.7L744.5,202.6L745.2,206.4L746,207L746.8,202.7L747.5,206L748.2,208.2L749,208.8L749.8,208.5L750.5,205.7L751.2,208.2L752,208.4L752.8,206L753.5,209.5L754.2,209.8L755,212.1L755.8,213.7L756.5,213.5L757.2,213.9L758,213.5L758.8,213L759.5,214.8L760.2,216.1L761,215.1L761.8,217.4L762.5,217.8L763.2,218.1L764,219.8L764.8,220.9L765.5,220.9L766.2,222.2L767,222.3L767.8,222.7L768.5,223.8L769.2,224.2L770,225.2L770.8,225.3L771.5,226.1L772.2,227L773,227.8L773.8,228.3L774.5,228.3L775.2,228.3L776,228.3L776.8,228.3L776.8,228.3L776,228.3L775.2,228.3L774.5,228.3L773.8,228.3L773,228.9L772.2,229.7L771.5,230.9L770.8,231.2L770,231.6L769.2,232L768.5,233L767.8,233.6L767,233.9L766.2,234.7L765.5,235.2L764.8,235.7L764,236.6L763.2,238L762.5,240.1L761.8,239.3L761,240.7L760.2,239.9L759.5,241.6L758.8,241.3L758,241.3L757.2,241.2L756.5,244.5L755.8,242.2L755,243.3L754.2,244.4L753.5,245.3L752.8,245.7L752,247.9L751.2,249L750.5,247.4L749.8,249.4L749,249.9L748.2,252.1L747.5,260.1L746.8,258.2L746,258.3L745.2,254.7L744.5,258.4L743.8,258.3L743,253.8L742.2,256.5L741.5,258.8L740.8,252.2L740,253.6L739.2,253.4L738.5,253.9L737.8,255.6L737,252.6L736.2,252.6L735.5,251.2L734.8,250.9L734,252L733.2,248L732.5,249.3L731.8,246.6L731,249.4L730.2,244.5L729.5,244L728.8,243.1L728,241.4L727.2,242L726.5,242L725.8,241.5L725,241.2L724.2,242L723.5,241.7L722.8,241.3L722,242.8L721.2,241.6L720.5,241.8L719.8,241.7L719,240.7L718.2,240.8L717.5,240.5L716.8,239.7L716,243.1L715.2,239.6L714.5,241.4L713.8,241.1L713,240.4L712.2,241.4L711.5,242.4L710.8,243.1L710,242.5L709.2,244L708.5,245.7L707.8,248.1L707,249.9L706.2,250.3L705.5,252.2L704.8,253.8L704,259.7L703.2,258.2L702.5,267.7L701.8,262.8L701,264.3L700.2,265.7L699.5,265.8L698.8,264.9L698,264.2L697.2,264.4L696.5,271.9L695.8,265.7L695,264.4L694.2,263.7L693.5,267.5L692.8,268.8L692,267.6L691.2,269.3L690.5,267.8L689.8,264.9L689,263.8L688.2,265.6L687.5,270.6L686.8,266.2L686,269.8L685.2,265.8L684.5,269.3L683.8,266.9L683,266.2L682.2,265.7L681.5,274.5L680.8,266.1L680,267L679.2,267.3L678.5,266.7L677.8,265.1L677,267.4L676.2,267.8L675.5,263.7L674.8,266.1L674,264.4L673.2,264.7L672.5,272.7L671.8,267.5L671,266.4L670.2,261.4L669.5,266.2L668.8,266.9L668,262.5L667.2,267.9L666.5,272.8L665.8,264.1L665,266.8L664.2,266L663.5,265.8L662.8,268.3L662,265.1L661.2,266.8L660.5,266L659.8,266.6L659,269.7L658.2,264.3L657.5,269.9L656.8,267.8L656,276.8L655.2,266.5L654.5,266L653.8,265L653,262.1L652.2,265.2L651.5,265.4L650.8,263.6L650,263.3L649.2,266.4L648.5,266.5L647.8,265.4L647,269L646.2,263.6L645.5,266.5L644.8,266.7L644,266.5L643.2,266.1L642.5,267.5L641.8,267.2L641,277.6L640.2,265.2L639.5,270.4L638.8,263.3L638,263.7L637.2,262.7L636.5,266.4L635.8,265.3L635,262.6L634.2,264.3L633.5,264.7L632.8,270.5L632,270L631.2,267.5L630.5,266.2L629.8,264.3L629,263.1L628.2,262.5L627.5,269.2L626.8,264.5L626,268.1L625.2,263.5L624.5,269.2L623.8,261.9L623,262.4L622.2,263.3L621.5,266.5L620.8,266.3L620,267.8L619.2,264.4L618.5,268.8L617.8,269.9L617,263.6L616.2,265.6L615.5,267.3L614.8,266.6L614,268.3L613.2,265.7L612.5,278.6L611.8,266.2L611,265.7L610.2,260.9L609.5,263.5L608.8,252.7L608,250.1L607.2,246.3L606.5,242.7L605.8,240.2L605,242.8L604.2,243.4L603.5,244.1L602.8,248.9L602,247.1L601.2,247.3L600.5,246.6L599.8,246.1L599,244.8L598.2,242.6L597.5,243L596.8,240.6L596,240.9L595.2,239.6L594.5,239.9L593.8,237.9L593,238L592.2,237.4L591.5,238.6L590.8,238.6L590,239L589.2,237.9L588.5,238.6L587.8,238.4L587,239.7L586.2,238.7L585.5,238.8L584.8,238.8L584,238.2L583.2,238.1L582.5,239.7L581.8,239.2L581,244.3L580.2,241.4L579.5,243.7L578.8,241.4L578,241.9L577.2,242.4L576.5,240.5L575.8,241.5L575,239.5L574.2,239.2L573.5,239.2L572.8,241.4L572,240.7L571.2,240L570.5,241.3L569.8,241.4L569,240.9L568.2,240.2L567.5,240.2L566.8,239.8L566,242.9L565.2,239.5L564.5,241.5L563.8,239.7L563,240.3L562.2,240.4L561.5,241.9L560.8,241.6L560,240.9L559.2,241.7L558.5,241.7L557.8,243.4L557,242.7L556.2,241.5L555.5,241L554.8,240.6L554,240.4L553.2,240.2L552.5,242.5L551.8,240.9L551,242.1L550.2,240.2L549.5,241.8L548.8,239.3L548,239.8L547.2,241L546.5,243.3L545.8,243.9L545,244.6L544.2,243.2L543.5,245.1L542.8,246L542,243.9L541.2,244.9L540.5,245.3L539.8,244.4L539,244.8L538.2,244.2L537.5,251.9L536.8,247.3L536,250.2L535.2,250.7L534.5,256.4L533.8,251.5L533,252.5L532.2,252.4L531.5,251.9L530.8,250.3L530,253L529.2,251.9L528.5,251.6L527.8,257.5L527,253.6L526.2,255.3L525.5,255.7L524.8,257L524,257.9L523.2,257.4L522.5,260.2L521.8,254.8L521,255L520.2,252.8L519.5,257.4L518.8,258.8L518,263.2L517.2,261.5L516.5,265.3L515.8,264.6L515,266.2L514.2,261.9L513.5,264.1L512.8,262.6L512,265.3L511.2,260.8L510.5,260.9L509.8,261.7L509,260.8L508.2,260.5L507.5,263.7L506.8,259.9L506,272.4L505.2,264.3L504.5,271.1L503.8,264.8L503,265.7L502.2,266.7L501.5,262L500.8,266.7L500,262.6L499.2,262.4L498.5,261L497.8,265L497,261.3L496.2,258.6L495.5,262.7L494.8,264.2L494,264.2L493.2,260.1L492.5,258.9L491.8,254.9L491,257.9L490.2,249.2L489.5,250.1L488.8,244.6L488,242.9L487.2,242.4L486.5,244.3L485.8,244.4L485,243.6L484.2,244.4L483.5,244.4L482.8,246.9L482,246.7L481.2,245.7L480.5,245L479.8,243.6L479,242.4L478.2,241.6L477.5,244.3L476.8,243.2L476,245.7L475.2,244.3L474.5,247L473.8,243.7L473,244L472.2,244.5L471.5,245.9L470.8,245.1L470,244.6L469.2,242.3L468.5,243.6L467.8,244.1L467,241.7L466.2,242.3L465.5,242.8L464.8,242.4L464,242.8L463.2,241.7L462.5,246.6L461.8,241.8L461,242.9L460.2,243.1L459.5,246.9L458.8,243.5L458,243.8L457.2,243.1L456.5,242.2L455.8,241L455,242.8L454.2,243.2L453.5,244.1L452.8,248.6L452,245.5L451.2,245.7L450.5,245.2L449.8,243.8L449,243.7L448.2,247.1L447.5,244.9L446.8,244.4L446,242.4L445.2,244.7L444.5,245.4L443.8,243.8L443,246.5L442.2,248.4L441.5,243.6L440.8,243.8L440,242.7L439.2,242.6L438.5,244.3L437.8,244L437,245.4L436.2,245.2L435.5,245.1L434.8,245.9L434,243.1L433.2,252.8L432.5,251.5L431.8,256.5L431,250.4L430.2,250.1L429.5,249.5L428.8,247.4L428,248.7L427.2,248.5L426.5,247.6L425.8,248.5L425,251.9L424.2,253.2L423.5,252.9L422.8,255.3L422,252.8L421.2,253.5L420.5,254.6L419.8,253.9L419,254.5L418.2,253.3L417.5,251L416.8,257.5L416,249.7L415.2,252.1L414.5,251.2L413.8,250.5L413,254L412.2,257.5L411.5,258.6L410.8,254.6L410,253.5L409.2,252.6L408.5,253.2L407.8,252.5L407,250.9L406.2,250.8L405.5,250.1L404.8,251.9L404,248.9L403.2,254.3L402.5,250.5L401.8,250.9L401,251L400.2,250.2L399.5,248.9L398.8,248L398,248L397.2,252.9L396.5,250.9L395.8,251.3L395,251L394.2,252.6L393.5,252.5L392.8,251.2L392,251.9L391.2,251L390.5,249.6L389.8,249.2L389,250.2L388.2,252.8L387.5,244.6L386.8,245.8L386,243.9L385.2,245.4L384.5,244.5L383.8,244.2L383,243.8L382.2,247.3L381.5,244.1L380.8,245.1L380,246.1L379.2,246.1L378.5,245.5L377.8,246.5L377,246.3L376.2,244L375.5,244.6L374.8,243.6L374,243.6L373.2,246.9L372.5,244.7L371.8,244L371,241.5L370.2,242.7L369.5,242.2L368.8,240.4L368,242.3L367.2,244.2L366.5,241.2L365.8,242.1L365,241.6L364.2,241.2L363.5,241.7L362.8,240.2L362,240.7L361.2,241.4L360.5,242.9L359.8,245.1L359,243.4L358.2,246.1L357.5,245.5L356.8,249.7L356,245L355.2,244L354.5,242.4L353.8,240.3L353,241.1L352.2,241.6L351.5,241.7L350.8,242.1L350,243L349.2,242L348.5,240.4L347.8,240.5L347,238.8L346.2,239.2L345.5,240.4L344.8,240.9L344,242L343.2,241.4L342.5,239.9L341.8,242.4L341,238.5L340.2,239.8L339.5,239.4L338.8,238.5L338,238.9L337.2,239.2L336.5,239.2L335.8,238.6L335,239.6L334.2,240.6L333.5,241.8L332.8,241.8L332,240.8L331.2,240.5L330.5,240.1L329.8,241L329,239.4L328.2,242.1L327.5,240.1L326.8,240.4L326,240.7L325.2,240.7L324.5,240.5L323.8,240.4L323,240.5L322.2,243L321.5,240.9L320.8,240.5L320,240.2L319.2,233.3L318.5,233.5L317.8,233.3L317,233.7L316.2,233.7L315.5,233.4L314.8,233.4L314,233.5L313.2,234L312.5,233.3L311.8,233.7L311,233.4L310.2,234.1L309.5,233.9L308.8,233.8L308,233.2L307.2,233.7L306.5,232.2L305.8,232L305,231.9L304.2,231.7L303.5,231.5L302.8,231.5L302,231.4L301.2,231.2L300.5,231.6L299.8,231.6L299,231.7L298.2,232.4L297.5,231.8L296.8,231.5L296,231L295.2,231.4L294.5,231.5L293.8,231.2L293,231.7L292.2,232.1L291.5,231.3L290.8,231.5L290,231.3L289.2,231.3L288.5,231.5L287.8,231.3L287,231.4L286.2,231.4L285.5,231.4L284.8,232L284,232.3L283.2,233.2L282.5,232L281.8,231.9L281,231.1L280.2,231L279.5,230.9L278.8,230.7L278,230.9L277.2,231L276.5,230.8L275.8,230.8L275,230.9L274.2,230.8L273.5,230.6L272.8,230.7L272,230.4L271.2,230.3L270.5,230.2L269.8,230.1L269,230.1L268.2,230L267.5,229.8L266.8,230.1L266,229.6L265.2,229.7L264.5,229.6L263.8,229.5L263,229.5L262.2,229.4L261.5,229.2L260.8,228.9L260,228.8L259.2,228.6L258.5,228.5L257.8,228.3L257,228.3L256.2,228.3L255.5,228.3L254.8,228.3L254,228.3Z" fill="#48c8ee"/></g>
<g clip-path="url(#fw-unc)"><path d="M254,359.6L254.8,359.6L255.5,359.6L256.2,359.6L257,359.6L257.8,359.6L258.5,359.5L259.2,359.2L260,359L260.8,358.8L261.5,358.3L262.2,358.1L263,358.5L263.8,358.4L264.5,358.3L265.2,357.9L266,358.1L266.8,357.9L267.5,357.9L268.2,358.1L269,357.7L269.8,357.5L270.5,357.2L271.2,357.6L272,357.4L272.8,357.2L273.5,357.2L274.2,356.9L275,357.3L275.8,356.9L276.5,357L277.2,357L278,356.3L278.8,356.2L279.5,355.8L280.2,356.5L281,356.1L281.8,356.7L282.5,352.5L283.2,349.4L284,350.8L284.8,354.9L285.5,356.4L286.2,356.5L287,356.1L287.8,356.1L288.5,355.4L289.2,356.1L290,356.1L290.8,356L291.5,356.1L292.2,356.2L293,356.2L293.8,356.5L294.5,356.2L295.2,356.6L296,356.7L296.8,356.1L297.5,355.7L298.2,355.7L299,356.2L299.8,355.4L300.5,356.1L301.2,356.2L302,356.3L302.8,355.4L303.5,355.1L304.2,354.8L305,354.2L305.8,354.5L306.5,354.6L307.2,354.1L308,354.3L308.8,353.5L309.5,352.8L310.2,354L311,353.1L311.8,354.4L312.5,353.2L313.2,354.3L314,353.5L314.8,352.9L315.5,353.4L316.2,353.8L317,354.6L317.8,354.1L318.5,353.9L319.2,353.8L320,345.6L320.8,343.2L321.5,339.9L322.2,341.6L323,342.2L323.8,345.6L324.5,345.3L325.2,344.6L326,345.5L326.8,346.6L327.5,344.2L328.2,348.3L329,346L329.8,345.8L330.5,344.5L331.2,345.9L332,344.1L332.8,345.3L333.5,342.6L334.2,344.3L335,344.9L335.8,347.2L336.5,347.5L337.2,346.4L338,345.9L338.8,347.4L339.5,345.3L340.2,344.3L341,345L341.8,341.9L342.5,345.7L343.2,341.6L344,345.2L344.8,344.2L345.5,345.3L346.2,342.1L347,345.9L347.8,343.9L348.5,344.6L349.2,341.9L350,345.3L350.8,343.6L351.5,346.1L352.2,344.3L353,345.2L353.8,345.2L354.5,341.5L355.2,340.5L356,339.9L356.8,339.7L357.5,337.7L358.2,342.9L359,342.1L359.8,342.7L360.5,344.3L361.2,344.6L362,341.7L362.8,343.8L363.5,342.6L364.2,339.3L365,339.6L365.8,335L366.5,333.2L367.2,340.1L368,340.9L368.8,341.9L369.5,338.3L370.2,344.5L371,340.5L371.8,338.9L372.5,340.7L373.2,343L374,341.6L374.8,342.2L375.5,341.7L376.2,342.6L377,338.7L377.8,339.4L378.5,337.4L379.2,337.6L380,337.6L380.8,339.5L381.5,340.6L382.2,341.7L383,339.5L383.8,339.8L384.5,338.7L385.2,338.2L386,338.4L386.8,343.4L387.5,338.2L388.2,339.4L389,335.8L389.8,334.3L390.5,335.1L391.2,335.7L392,334.3L392.8,337.1L393.5,334.4L394.2,334.6L395,333.8L395.8,337.3L396.5,330.5L397.2,325.8L398,334.8L398.8,332.5L399.5,333.6L400.2,331.6L401,334.8L401.8,332.7L402.5,336.6L403.2,330.4L404,334.6L404.8,331.6L405.5,333.7L406.2,333.8L407,335.2L407.8,333.4L408.5,337.1L409.2,325.5L410,325L410.8,322.8L411.5,323.8L412.2,330.8L413,332.3L413.8,335.7L414.5,332.8L415.2,333.6L416,326.2L416.8,326.8L417.5,323.7L418.2,329.3L419,330.8L419.8,334.4L420.5,332.9L421.2,325.6L422,331.9L422.8,332.3L423.5,326.7L424.2,326.7L425,332.2L425.8,331.6L426.5,326L427.2,329.2L428,328.2L428.8,330.5L429.5,329.1L430.2,328L431,330L431.8,326.7L432.5,329.2L433.2,330.2L434,322.6L434.8,323.8L435.5,339.9L436.2,330.3L437,338.2L437.8,327L438.5,332.7L439.2,335.8L440,337.5L440.8,329.2L441.5,337.4L442.2,338.4L443,335.5L443.8,337.2L444.5,332.7L445.2,332L446,328.1L446.8,329.9L447.5,339.3L448.2,327.3L449,336.5L449.8,335.1L450.5,332.3L451.2,321.5L452,337.6L452.8,326.9L453.5,329.4L454.2,333.4L455,335.9L455.8,329.4L456.5,323.6L457.2,333.9L458,323.9L458.8,324.2L459.5,321.9L460.2,328.8L461,336.4L461.8,324.7L462.5,333.6L463.2,332.5L464,322.6L464.8,331.9L465.5,330.4L466.2,337.3L467,330.5L467.8,339.5L468.5,336.5L469.2,326.9L470,336L470.8,325.6L471.5,327.2L472.2,335.2L473,326.1L473.8,336.9L474.5,336.8L475.2,330.1L476,323.5L476.8,326.4L477.5,325L478.2,338.7L479,325L479.8,335.9L480.5,328.8L481.2,324L482,337.9L482.8,338L483.5,328.9L484.2,334.3L485,328.6L485.8,319.4L486.5,320.1L487.2,331.6L488,335.2L488.8,319.9L489.5,335.7L490.2,334.3L491,326.8L491.8,326.8L492.5,330.2L493.2,321.7L494,320L494.8,314.6L495.5,320.5L496.2,314.2L497,317L497.8,311.5L498.5,312.5L499.2,314L500,318.4L500.8,314.3L501.5,317.3L502.2,318.6L503,314.4L503.8,314.5L504.5,322.1L505.2,319.9L506,318.4L506.8,318.5L507.5,319L508.2,316.1L509,317.8L509.8,314.2L510.5,317.4L511.2,322.9L512,313.5L512.8,312.8L513.5,313.4L514.2,310.4L515,323.4L515.8,325.4L516.5,327.4L517.2,320L518,314.1L518.8,316.2L519.5,327.6L520.2,329.2L521,329.6L521.8,327.5L522.5,327.9L523.2,330.1L524,323.5L524.8,319.8L525.5,323L526.2,322.6L527,329.4L527.8,333L528.5,330.7L529.2,336.4L530,334.3L530.8,332.8L531.5,333.5L532.2,327.9L533,334.3L533.8,334.9L534.5,331.7L535.2,328.4L536,337.8L536.8,336.8L537.5,336.4L538.2,335.4L539,337.1L539.8,340.2L540.5,343.1L541.2,338.2L542,342L542.8,343L543.5,343.6L544.2,339L545,342.1L545.8,343.8L546.5,340.7L547.2,342.1L548,344.2L548.8,345.2L549.5,346.9L550.2,343L551,346.4L551.8,343.7L552.5,346.1L553.2,345.9L554,345.1L554.8,346.2L555.5,346.1L556.2,344.9L557,345.4L557.8,346L558.5,345.1L559.2,344.8L560,342.3L560.8,342.7L561.5,343.8L562.2,343.4L563,343.3L563.8,342.1L564.5,347.9L565.2,344.5L566,345.7L566.8,343.8L567.5,341.7L568.2,343.5L569,343.7L569.8,342.2L570.5,345.4L571.2,346L572,341.7L572.8,344.9L573.5,346.3L574.2,344.9L575,344.5L575.8,344.4L576.5,346.5L577.2,346.2L578,347.8L578.8,341.4L579.5,345.1L580.2,346.8L581,345.1L581.8,344.5L582.5,346.7L583.2,346.8L584,345L584.8,344.2L585.5,347.2L586.2,348.4L587,346.2L587.8,347.6L588.5,346.8L589.2,347.2L590,348.3L590.8,347.2L591.5,347.2L592.2,348.2L593,347.4L593.8,347.2L594.5,346.8L595.2,342.3L596,345.9L596.8,344.8L597.5,346.1L598.2,345.1L599,339.6L599.8,337.8L600.5,337.1L601.2,338.6L602,338.4L602.8,338.1L603.5,340.9L604.2,344.6L605,343.2L605.8,344.8L606.5,344.1L607.2,342L608,335.1L608.8,334.5L609.5,328.4L610.2,327.9L611,322.3L611.8,318.2L612.5,318.6L613.2,315.7L614,322.6L614.8,312.6L615.5,317.6L616.2,322.9L617,319.4L617.8,318.7L618.5,321.4L619.2,309.4L620,315.6L620.8,320.9L621.5,318.2L622.2,320.2L623,312.1L623.8,315.7L624.5,317.4L625.2,307.3L626,320.4L626.8,317.3L627.5,315L628.2,318.4L629,318.4L629.8,311.3L630.5,322.2L631.2,313L632,319.1L632.8,313.4L633.5,316.9L634.2,316.5L635,319.3L635.8,313.2L636.5,317.3L637.2,317.3L638,317.4L638.8,315.9L639.5,318.5L640.2,309.1L641,316.5L641.8,315.9L642.5,321.6L643.2,314.7L644,318.4L644.8,319.8L645.5,320L646.2,307.3L647,314.3L647.8,313.8L648.5,317.2L649.2,317L650,322.3L650.8,318.7L651.5,323.2L652.2,321.6L653,319.3L653.8,317.3L654.5,315.4L655.2,317.8L656,317.1L656.8,316.4L657.5,309.7L658.2,319.5L659,318.8L659.8,316.3L660.5,319.2L661.2,318L662,320.2L662.8,318.5L663.5,320.8L664.2,320.5L665,314.2L665.8,319.8L666.5,318.7L667.2,317.8L668,316.1L668.8,318.7L669.5,309.3L670.2,319.5L671,316L671.8,314.5L672.5,319.6L673.2,316L674,309.7L674.8,315.7L675.5,318.2L676.2,316.6L677,315.7L677.8,319.4L678.5,314.4L679.2,309.4L680,318.6L680.8,314.6L681.5,310.4L682.2,321.7L683,322.4L683.8,320.9L684.5,323L685.2,322.3L686,323.7L686.8,317.9L687.5,315.1L688.2,317.2L689,316.2L689.8,320.7L690.5,321.5L691.2,313.9L692,318.3L692.8,314.5L693.5,317.1L694.2,320.5L695,320.8L695.8,320.2L696.5,317.1L697.2,318.4L698,317.5L698.8,317.2L699.5,314.2L700.2,321L701,321.9L701.8,318.1L702.5,322L703.2,325.3L704,322.3L704.8,326.1L705.5,333.9L706.2,335.6L707,337.7L707.8,337L708.5,336.9L709.2,339.9L710,341.3L710.8,343.7L711.5,344.3L712.2,345.2L713,343.7L713.8,345.8L714.5,341.1L715.2,344.6L716,344.5L716.8,345.2L717.5,343.8L718.2,344.3L719,342.3L719.8,344.1L720.5,345.3L721.2,346.6L722,344.7L722.8,344.2L723.5,343.3L724.2,344.8L725,340.5L725.8,343.8L726.5,345.3L727.2,344.1L728,344.1L728.8,343.5L729.5,343.1L730.2,341.2L731,342L731.8,340.1L732.5,342.3L733.2,339L734,339.1L734.8,337.4L735.5,332.5L736.2,336.5L737,336.6L737.8,331.4L738.5,331.3L739.2,335.1L740,334.3L740.8,328.5L741.5,332.1L742.2,325.2L743,330.6L743.8,328.9L744.5,332.2L745.2,330L746,331.2L746.8,327.3L747.5,333.8L748.2,336.7L749,329.3L749.8,337.7L750.5,336.6L751.2,331.7L752,336.7L752.8,339.8L753.5,340.1L754.2,340L755,342.9L755.8,342L756.5,344.4L757.2,342.3L758,344.2L758.8,343.8L759.5,345L760.2,341.5L761,345L761.8,348.2L762.5,349.8L763.2,350.6L764,351.9L764.8,352L765.5,352.9L766.2,353L767,353.5L767.8,354.3L768.5,353.8L769.2,354.8L770,355.6L770.8,356.7L771.5,357.5L772.2,358.2L773,359.1L773.8,359.6L774.5,359.6L775.2,359.6L776,359.6L776.8,359.6L776.8,359.6L776,359.6L775.2,359.6L774.5,359.6L773.8,359.6L773,360.2L772.2,361.1L771.5,361.9L770.8,362.2L770,362.7L769.2,363.1L768.5,363.6L767.8,364.7L767,365.3L766.2,366.4L765.5,366.9L764.8,368.5L764,370.1L763.2,374.2L762.5,370.7L761.8,372L761,373.4L760.2,373L759.5,373.1L758.8,376.1L758,375.9L757.2,378.9L756.5,380.3L755.8,380.1L755,379.6L754.2,379.3L753.5,378L752.8,379.8L752,379.8L751.2,380.2L750.5,380.8L749.8,381.2L749,383.8L748.2,390.9L747.5,386.2L746.8,387.9L746,390L745.2,391.2L744.5,390.6L743.8,398.6L743,391.4L742.2,391.2L741.5,391.2L740.8,389.9L740,389.7L739.2,386.4L738.5,385.8L737.8,386.4L737,383L736.2,385.1L735.5,382L734.8,379L734,378.4L733.2,379.5L732.5,381.3L731.8,379.5L731,379L730.2,379.2L729.5,377.3L728.8,377.7L728,376.2L727.2,373.5L726.5,375.5L725.8,375L725,377.5L724.2,375.2L723.5,375.6L722.8,373.1L722,373.4L721.2,372.5L720.5,373.8L719.8,373.2L719,372.5L718.2,375.6L717.5,373.2L716.8,372.1L716,371.7L715.2,374.5L714.5,373.6L713.8,376.5L713,375.9L712.2,375.5L711.5,377.3L710.8,375.9L710,375.8L709.2,378.2L708.5,377.5L707.8,377.5L707,381.5L706.2,387L705.5,387.3L704.8,392.8L704,392.3L703.2,396.7L702.5,394.5L701.8,396.5L701,396.6L700.2,406.9L699.5,402.5L698.8,411.8L698,399.6L697.2,400.3L696.5,401.5L695.8,396.9L695,398.4L694.2,398L693.5,396.5L692.8,399.1L692,398L691.2,399.8L690.5,397.7L689.8,399.8L689,400.1L688.2,409.7L687.5,395.1L686.8,398.2L686,401.4L685.2,399.7L684.5,399.6L683.8,406.5L683,402.9L682.2,406.9L681.5,406.7L680.8,404L680,403.2L679.2,403.1L678.5,399.7L677.8,401.3L677,400.2L676.2,400.3L675.5,400.7L674.8,400L674,401.9L673.2,407.5L672.5,396.4L671.8,398.1L671,400.8L670.2,400.1L669.5,398.4L668.8,407.5L668,400.2L667.2,402.1L666.5,405.3L665.8,404.3L665,405.6L664.2,402.3L663.5,402.7L662.8,405.5L662,400.9L661.2,407L660.5,404L659.8,401L659,402.1L658.2,404.6L657.5,406.6L656.8,401.6L656,399.6L655.2,400.6L654.5,397.8L653.8,400.9L653,400.4L652.2,396.7L651.5,401.9L650.8,400.2L650,405.2L649.2,399.9L648.5,402.2L647.8,398.8L647,401.4L646.2,401.2L645.5,397.1L644.8,399L644,396.4L643.2,402.4L642.5,398.6L641.8,396.4L641,408.6L640.2,398.7L639.5,401.9L638.8,400.7L638,402.2L637.2,400.6L636.5,397.4L635.8,405.8L635,403.6L634.2,402.2L633.5,398.6L632.8,401.5L632,403L631.2,400.7L630.5,397.7L629.8,400.2L629,403.9L628.2,397L627.5,401.9L626.8,403.1L626,407.6L625.2,402.9L624.5,402.2L623.8,403.6L623,399.5L622.2,400.4L621.5,399.5L620.8,398L620,409.1L619.2,397.4L618.5,403.5L617.8,399.2L617,400.7L616.2,403.6L615.5,404.6L614.8,398.9L614,401.8L613.2,404L612.5,402.7L611.8,401.9L611,399.9L610.2,395.4L609.5,389.8L608.8,386.5L608,383.3L607.2,379.6L606.5,376.9L605.8,377.4L605,379.7L604.2,376.9L603.5,376.1L602.8,377.2L602,378.3L601.2,377.2L600.5,378L599.8,377.4L599,374.2L598.2,374.5L597.5,371.1L596.8,370.4L596,372L595.2,372.1L594.5,373L593.8,371L593,370.9L592.2,370.7L591.5,372L590.8,372.7L590,370.1L589.2,370.9L588.5,370.5L587.8,372.5L587,375.2L586.2,373.5L585.5,373.8L584.8,372.8L584,374.6L583.2,371.7L582.5,372.2L581.8,374.9L581,375.1L580.2,373.2L579.5,374.5L578.8,373.8L578,372.9L577.2,372.4L576.5,373L575.8,375L575,373.2L574.2,372.8L573.5,373.1L572.8,373.7L572,373.7L571.2,374.4L570.5,372.5L569.8,373.2L569,371.9L568.2,374.8L567.5,373L566.8,371.2L566,375.7L565.2,372.3L564.5,372.8L563.8,373.2L563,374.4L562.2,375.3L561.5,374L560.8,378.2L560,376.9L559.2,376.2L558.5,374.1L557.8,375.4L557,376L556.2,374.7L555.5,373.7L554.8,374.6L554,377.3L553.2,373.6L552.5,375.3L551.8,376.7L551,377.7L550.2,375.4L549.5,373.9L548.8,375.8L548,375.3L547.2,376.3L546.5,377L545.8,375.9L545,380.6L544.2,374.8L543.5,379.7L542.8,376.9L542,377.3L541.2,380L540.5,381L539.8,377L539,380.3L538.2,381.6L537.5,380.6L536.8,381.7L536,382.3L535.2,382.8L534.5,384.5L533.8,385.3L533,385.6L532.2,385.2L531.5,385.4L530.8,390.5L530,393.9L529.2,389.5L528.5,386.8L527.8,386.1L527,385L526.2,384.3L525.5,387.3L524.8,389.3L524,387.4L523.2,392.5L522.5,387.4L521.8,386.9L521,390.8L520.2,391.4L519.5,394L518.8,395.3L518,397.5L517.2,397.8L516.5,402.8L515.8,405.9L515,399.3L514.2,400L513.5,397.1L512.8,400.5L512,406.1L511.2,400.1L510.5,400L509.8,396.8L509,402.1L508.2,393.4L507.5,394L506.8,401L506,400.7L505.2,394.8L504.5,399.3L503.8,397.6L503,396.9L502.2,396.6L501.5,398.8L500.8,406L500,401.6L499.2,401.1L498.5,402.3L497.8,403.5L497,402.6L496.2,403.3L495.5,396.4L494.8,398L494,394.4L493.2,403L492.5,397.6L491.8,389L491,401.9L490.2,391.8L489.5,389.4L488.8,391.5L488,390.5L487.2,393.4L486.5,383.1L485.8,397.8L485,391.8L484.2,390.6L483.5,383.2L482.8,388.8L482,388.7L481.2,381.3L480.5,379.2L479.8,380.5L479,395.8L478.2,382.5L477.5,384.9L476.8,393.5L476,392.3L475.2,390.2L474.5,383.3L473.8,394.6L473,394.2L472.2,394.3L471.5,395.3L470.8,388.1L470,393.8L469.2,380.9L468.5,397.7L467.8,389.3L467,387L466.2,391.8L465.5,391.1L464.8,378.7L464,387.9L463.2,390L462.5,385.7L461.8,388.7L461,385.7L460.2,384.3L459.5,391.6L458.8,387L458,384.9L457.2,385.6L456.5,381.4L455.8,392.3L455,394L454.2,390.4L453.5,380.7L452.8,381.2L452,384.8L451.2,387.4L450.5,390.2L449.8,395.9L449,389.1L448.2,379.4L447.5,389.7L446.8,396.6L446,386L445.2,385.9L444.5,386.1L443.8,381.7L443,382.7L442.2,398.4L441.5,387.5L440.8,392.3L440,391.5L439.2,388.9L438.5,393.8L437.8,390.3L437,397.6L436.2,392.6L435.5,390.3L434.8,383.6L434,387.8L433.2,390.7L432.5,385.9L431.8,385.6L431,387.9L430.2,387.9L429.5,390.2L428.8,388.4L428,382.8L427.2,386L426.5,383.9L425.8,389.3L425,385L424.2,388.2L423.5,385.3L422.8,389.1L422,388.3L421.2,392.3L420.5,390.7L419.8,388.4L419,395.9L418.2,389.9L417.5,387.9L416.8,386.5L416,391.1L415.2,387L414.5,390.3L413.8,389.9L413,389.7L412.2,391.7L411.5,388.6L410.8,387.4L410,391.7L409.2,387.5L408.5,385L407.8,385.6L407,387.7L406.2,384.3L405.5,389.3L404.8,388.9L404,388.8L403.2,387.3L402.5,388.8L401.8,388.2L401,393.6L400.2,389.1L399.5,394.1L398.8,385.5L398,383.8L397.2,385.2L396.5,381.7L395.8,382.1L395,380.2L394.2,380L393.5,382.9L392.8,383L392,385L391.2,383.8L390.5,386.2L389.8,384.8L389,390L388.2,380.2L387.5,377.7L386.8,378.9L386,376L385.2,375.8L384.5,378.7L383.8,378.4L383,382L382.2,382.7L381.5,380.9L380.8,380.8L380,379.8L379.2,377.8L378.5,377.7L377.8,377.5L377,376.4L376.2,375.8L375.5,375.2L374.8,377.4L374,378L373.2,373L372.5,374.5L371.8,376.6L371,376.2L370.2,377.4L369.5,381.2L368.8,377.8L368,378.5L367.2,386.2L366.5,380.4L365.8,382.2L365,380.6L364.2,379.3L363.5,380.5L362.8,377.5L362,379.5L361.2,378.1L360.5,377.1L359.8,376.8L359,378.8L358.2,381.1L357.5,378.4L356.8,378L356,378.7L355.2,377.4L354.5,377.7L353.8,376.1L353,373L352.2,374.8L351.5,373.4L350.8,375.5L350,372.6L349.2,374L348.5,373.2L347.8,375.8L347,375.7L346.2,377.1L345.5,375.1L344.8,372.6L344,374.9L343.2,371.5L342.5,371.1L341.8,370.9L341,374L340.2,373L339.5,374.9L338.8,374L338,373L337.2,373.2L336.5,371.5L335.8,371.5L335,373.8L334.2,372.7L333.5,372L332.8,372.7L332,373.8L331.2,371.8L330.5,374.1L329.8,373.8L329,373.6L328.2,373L327.5,373.8L326.8,373.8L326,377L325.2,375.5L324.5,379.2L323.8,374.6L323,373.1L322.2,373.3L321.5,371.3L320.8,372.2L320,372.3L319.2,364.8L318.5,365.6L317.8,365.5L317,365.5L316.2,364.9L315.5,365.3L314.8,364.9L314,366.2L313.2,364L312.5,364.7L311.8,365.3L311,364.8L310.2,365.3L309.5,366.6L308.8,366.3L308,366.5L307.2,365.7L306.5,364.5L305.8,364.3L305,364.2L304.2,363.9L303.5,364L302.8,363.9L302,363.8L301.2,363.7L300.5,363.4L299.8,363.5L299,363.6L298.2,362.5L297.5,362.8L296.8,363.1L296,362.8L295.2,362.7L294.5,363.2L293.8,362.7L293,362.9L292.2,363.7L291.5,363.3L290.8,363.7L290,363.5L289.2,363.5L288.5,363.9L287.8,363.5L287,364.2L286.2,363.8L285.5,363.6L284.8,364.1L284,368.2L283.2,372.5L282.5,364.8L281.8,362.7L281,363L280.2,362.9L279.5,363.1L278.8,362.9L278,362.3L277.2,362.5L276.5,362.2L275.8,362.7L275,362.2L274.2,362.5L273.5,362.2L272.8,362.4L272,362.2L271.2,362.4L270.5,362.1L269.8,361.8L269,362.2L268.2,361.6L267.5,361.3L266.8,361.1L266,361.4L265.2,361.1L264.5,361.2L263.8,361.1L263,360.9L262.2,360.8L261.5,360.5L260.8,360.3L260,360.2L259.2,359.9L258.5,359.7L257.8,359.6L257,359.6L256.2,359.6L255.5,359.6L254.8,359.6L254,359.6Z" fill="#5888ba" opacity="0.5"/><path d="M309.5,351.6V368M320,343V375.6M321.5,339.9V372M324.5,341.8V379.7M326,343.1V377.7M327.5,343V376.1M330.5,343.1V374.8M332,341.1V373.9M333.5,340.2V374.6M335,343.4V375.1M336.5,347.1V373.5M338,346.2V372.1M339.5,342.9V376M342.5,344.6V372.5M347,342.1V378.8M351.5,344.2V374.8M353,341.4V375.6M360.5,343.8V376.2M363.5,335.8V380.6M366.5,329.3V382.6M368,332.8V385.8M369.5,335.5V385M372.5,340.5V373.7M374,340.7V380.6M375.5,337.5V378.1M377,338.8V377.9M378.5,337.7V380.2M381.5,340.6V383.2M383,338.1V381.8M392,332.5V389.7M393.5,332.8V384.7M401,333.1V395.6M405.5,329.1V389.8M407,333.2V390.7M410,325.7V396.7M411.5,325V396.9M417.5,320.9V393.9M420.5,332.3V390.8M422,330.7V390.4M423.5,321.9V393.1M425,326.4V389.5M431,326.1V390M435.5,332.4V396.7M440,318.5V395M441.5,326.6V404.7M443,315.6V392.4M444.5,316.8V392M446,322.4V403.1M447.5,327.2V394.2M450.5,318.6V403.3M452,315.5V393.5M453.5,325.8V394M455,329.2V395M456.5,321.5V397.6M459.5,330.1V392M464,316V391.1M471.5,324.7V387.2M473,320.1V394.5M482,322.9V391.7M485,314.7V400.5M489.5,325.1V405.3M491,328.3V412.4M495.5,315.1V400.8M501.5,312.1V402.4M506,316.5V405.3M507.5,316.2V399.3M510.5,311.2V404.4M513.5,316.1V407.3M515,314.7V402.1M516.5,317V404.7M518,306.8V404.6M519.5,325.8V396.9M522.5,329.8V390.5M524,319.2V391.7M525.5,323.3V392.1M527,325.2V387.5M533,328.5V388.8M534.5,328V385.4M539,333.4V384.1M540.5,338V383.4M542,339.6V381.9M543.5,343V379.7M545,339.3V382.9M546.5,339V378.6M548,344.2V376.5M549.5,343.2V376M551,345.4V377.7M552.5,343.8V378.4M554,345.8V378.9M555.5,342.8V377.5M560,343.7V378.9M561.5,342.2V376.5M566,342.9V377.3M567.5,341.7V374.8M570.5,343.3V374.5M572,341.6V373.1M573.5,344.7V374.7M575,345.5V375.4M581,342.9V376.6M582.5,347V373.4M585.5,344.4V374.9M590,345.6V372.3M591.5,345.3V371.9M593,346.2V371.7M594.5,345.3V371.6M599,338.7V374.4M600.5,337.1V379.7M603.5,337.5V379M605,341.9V380.7M608,333.5V386.6M611,319.6V401.4M612.5,314.8V406.5M614,317.2V403.5M615.5,318.1V404.8M617,319.1V404.2M618.5,321.1V401.6M620,312.5V411.5M621.5,316.7V401.2M623,308.3V400.2M627.5,312.5V403.3M630.5,319.5V400.8M632,316.7V403.2M635,314.4V405.2M636.5,315.4V400.6M638,313.5V402M642.5,317.8V401.6M645.5,315.4V400.3M647,309.6V403.9M648.5,315.5V403.1M651.5,320.7V403.7M653,316.8V401.4M654.5,314.2V399M656,314.8V401M657.5,310.9V408.4M659,319.5V407.3M660.5,320.7V406.1M662,318.3V401.4M663.5,321.5V402.3M665,309.3V407.6M668,314V402.1M669.5,308.3V402M671,313.6V400.3M672.5,313.6V401.2M678.5,313.3V403M684.5,321.1V402.2M689,312V400.8M701,320.4V397.9M704,319.9V392.2M707,336.4V383.2M710,339.4V377.4M713,341.7V376M717.5,344.1V375.4M722,341.9V375.2M728,342.8V377.2M729.5,343.7V377M731,341V381.4M732.5,340.5V380.4M734,339V380.2M735.5,332.7V381.6M738.5,329.9V387M740,333.7V389.1M741.5,332.8V391M746,331.4V390.5M749,328.3V383.2M750.5,334.4V382.9M752,336V380.7M753.5,338.9V379.2M755,341.2V381M756.5,343.3V380.4M759.5,344.1V374.1M283.3,343.5V376.6M283.9,348.2V371.6M309,350.1V369.6M343,344.4V375.6M357,338.7V381.6M357.6,342.5V377.6M367.5,334V386.6M368.1,340.6V379.6M380,336.8V383.6M396,334V386.6M404,331.1V389.6M411.5,323.5V397.6M412.1,331.1V389.6M420,331.1V389.6M428,330.2V390.6M526,325.4V395.6M534,331.1V389.6M545,338.7V381.6M603,334V386.6" stroke="#6c9cc8" stroke-width="0.8" opacity="0.5" fill="none"/><path d="M254,359.6L254.8,359.6L255.5,359.6L256.2,359.6L257,359.6L257.8,359.6L258.5,359.5L259.2,359.3L260,359.1L260.8,359L261.5,358.7L262.2,358.5L263,358.6L263.8,358.5L264.5,358.4L265.2,358.4L266,358.3L266.8,358.3L267.5,358.2L268.2,358.2L269,358.1L269.8,357.9L270.5,357.8L271.2,357.7L272,357.8L272.8,357.6L273.5,357.4L274.2,357.2L275,357.5L275.8,357.3L276.5,357.5L277.2,357.2L278,356.9L278.8,356.8L279.5,356.6L280.2,356.8L281,357L281.8,357.1L282.5,356.2L283.2,355.9L284,355.8L284.8,355.6L285.5,356.8L286.2,356.8L287,356.7L287.8,356.4L288.5,356.6L289.2,356.6L290,356.7L290.8,356.6L291.5,356.9L292.2,356.7L293,357.1L293.8,357.2L294.5,357L295.2,356.9L296,357.1L296.8,356.9L297.5,356.5L298.2,356.3L299,356.4L299.8,356.1L300.5,356.3L301.2,356.5L302,356.5L302.8,355.7L303.5,356L304.2,355.1L305,355.2L305.8,354.9L306.5,355.1L307.2,355L308,354.8L308.8,354.3L309.5,354.5L310.2,354.8L311,354.5L311.8,355.2L312.5,354.5L313.2,354.6L314,354.5L314.8,353.9L315.5,354.6L316.2,354.2L317,355.1L317.8,355.2L318.5,354.4L319.2,354.7L320,346.6L320.8,345.4L321.5,342.4L322.2,342.9L323,344.3L323.8,346.5L324.5,346.6L325.2,347.1L326,347.9L326.8,347.8L327.5,346.7L328.2,349.4L329,348.9L329.8,348.5L330.5,347.6L331.2,347.3L332,344.9L332.8,346.2L333.5,344.7L334.2,347.8L335,346.8L335.8,348.2L336.5,349.6L337.2,349.2L338,348.8L338.8,348.3L339.5,347.3L340.2,346.9L341,346.5L341.8,344.7L342.5,347.3L343.2,345.1L344,347.6L344.8,346.1L345.5,346.6L346.2,345.9L347,346.9L347.8,346.3L348.5,345.5L349.2,344.8L350,346.2L350.8,344.6L351.5,347L352.2,347.5L353,346.3L353.8,346.4L354.5,345.2L355.2,341.8L356,342.1L356.8,340.9L357.5,342.3L358.2,344.5L359,346.4L359.8,345.1L360.5,347.2L361.2,347L362,345.2L362.8,345.5L363.5,344.3L364.2,342.3L365,342.5L365.8,344.2L366.5,341.9L367.2,343.4L368,345.2L368.8,346.3L369.5,345.5L370.2,346.1L371,344.4L371.8,343.8L372.5,344.7L373.2,344.6L374,343.7L374.8,344.3L375.5,343.3L376.2,344.8L377,342.9L377.8,341L378.5,341.2L379.2,341.1L380,341.5L380.8,342.7L381.5,344.6L382.2,344.3L383,343.4L383.8,343.8L384.5,342.9L385.2,342.7L386,341.6L386.8,344.5L387.5,340.9L388.2,341.7L389,340.3L389.8,336.2L390.5,337.1L391.2,338.1L392,339.1L392.8,338.5L393.5,339L394.2,337.7L395,338.8L395.8,339.7L396.5,336.2L397.2,331.6L398,337.3L398.8,336.4L399.5,337.6L400.2,335.2L401,338L401.8,337.3L402.5,339.5L403.2,337.2L404,336.5L404.8,333.2L405.5,337.1L406.2,337.3L407,339.3L407.8,339.4L408.5,339.7L409.2,332.7L410,333.7L410.8,327.8L411.5,332L412.2,334.1L413,336.2L413.8,338.4L414.5,337.1L415.2,335.7L416,333.8L416.8,332.9L417.5,330.6L418.2,335.1L419,334L419.8,336.7L420.5,337L421.2,332.4L422,336L422.8,336.7L423.5,331.6L424.2,330.3L425,334.9L425.8,335.1L426.5,329.9L427.2,330.8L428,333.7L428.8,333L429.5,333.3L430.2,332.7L431,332.3L431.8,332.2L432.5,334.6L433.2,332.9L434,341.4L434.8,343.2L435.5,345L436.2,346.8L437,343.8L437.8,340.6L438.5,341.1L439.2,342.9L440,343.5L440.8,342.7L441.5,343.4L442.2,343.6L443,343.8L443.8,343.6L444.5,343.1L445.2,343.3L446,339.2L446.8,343.3L447.5,345.7L448.2,343L449,346.5L449.8,345.6L450.5,342.2L451.2,340.7L452,342.3L452.8,343.2L453.5,343.7L454.2,343.4L455,344.2L455.8,344.2L456.5,344.5L457.2,343.3L458,341.3L458.8,339.3L459.5,342.5L460.2,338.6L461,342.1L461.8,342.1L462.5,342.1L463.2,344L464,342L464.8,344L465.5,344.5L466.2,345.9L467,344L467.8,347L468.5,346L469.2,346.5L470,343.7L470.8,343.2L471.5,342.1L472.2,341.7L473,343.4L473.8,343.8L474.5,344.3L475.2,345.7L476,343.7L476.8,346.1L477.5,344.7L478.2,345.1L479,343.3L479.8,341.2L480.5,345L481.2,344.9L482,342.8L482.8,342.6L483.5,342.6L484.2,340.4L485,342L485.8,340.1L486.5,341L487.2,341.1L488,342.2L488.8,340.6L489.5,341.6L490.2,339.7L491,340.9L491.8,336.3L492.5,333.6L493.2,332.3L494,325.6L494.8,321.7L495.5,325.6L496.2,324L497,323.7L497.8,314.8L498.5,320.5L499.2,323.2L500,324.6L500.8,323.5L501.5,325L502.2,327L503,325.3L503.8,325L504.5,326.6L505.2,323.9L506,327.4L506.8,327.9L507.5,326.9L508.2,324.8L509,325L509.8,324L510.5,321.4L511.2,325.7L512,322.2L512.8,321.5L513.5,323.7L514.2,315.8L515,326.2L515.8,328.2L516.5,330.3L517.2,325.5L518,318L518.8,323.1L519.5,331.6L520.2,331.7L521,332.4L521.8,334.9L522.5,336.1L523.2,335.1L524,330L524.8,327L525.5,330.9L526.2,324.8L527,331.6L527.8,334.8L528.5,335.1L529.2,338.5L530,337.6L530.8,338.9L531.5,337.4L532.2,334.2L533,335.9L533.8,338.5L534.5,336.9L535.2,335L536,339.7L536.8,338.6L537.5,340.1L538.2,337.4L539,340.5L539.8,342.5L540.5,345.2L541.2,342.2L542,346.8L542.8,346.3L543.5,346.4L544.2,344.1L545,345.9L545.8,345.5L546.5,344.9L547.2,346.6L548,347.5L548.8,347.3L549.5,348L550.2,345.2L551,348.2L551.8,346.9L552.5,347.2L553.2,347.7L554,349.1L554.8,348.7L555.5,347.8L556.2,346.4L557,346.6L557.8,347.4L558.5,347.3L559.2,347.4L560,345.9L560.8,344.9L561.5,346.4L562.2,345.8L563,347L563.8,345.8L564.5,348.7L565.2,345.7L566,346.7L566.8,346.4L567.5,345.2L568.2,346.1L569,344.5L569.8,344L570.5,346.8L571.2,346.8L572,345.1L572.8,348.1L573.5,347.5L574.2,348L575,348.1L575.8,347.8L576.5,348L577.2,347.9L578,348.7L578.8,345.2L579.5,347.9L580.2,347.8L581,347.7L581.8,348.3L582.5,349.2L583.2,347.9L584,347.2L584.8,347.6L585.5,348.3L586.2,349.4L587,349.3L587.8,349.6L588.5,349L589.2,349.4L590,349.2L590.8,348.4L591.5,348.5L592.2,349.5L593,349.3L593.8,348.7L594.5,348L595.2,345.5L596,347.9L596.8,347.2L597.5,347L598.2,346.6L599,342.1L599.8,339.2L600.5,340.7L601.2,339.7L602,339.9L602.8,340.8L603.5,342L604.2,345.6L605,345.7L605.8,347.2L606.5,346.3L607.2,343L608,338.3L608.8,335.8L609.5,330.7L610.2,329.2L611,323.4L611.8,320.8L612.5,320L613.2,321.4L614,324.6L614.8,314.5L615.5,321.5L616.2,324.5L617,322.7L617.8,324L618.5,324.4L619.2,311.1L620,318.6L620.8,323L621.5,322.8L622.2,321.7L623,313.6L623.8,319.7L624.5,322.9L625.2,311.2L626,321.9L626.8,318.6L627.5,319.1L628.2,322.4L629,322.5L629.8,316.9L630.5,323.4L631.2,317.2L632,322.8L632.8,318.4L633.5,318.4L634.2,320.3L635,320.6L635.8,318.2L636.5,319.6L637.2,321.8L638,320.9L638.8,319.6L639.5,321.8L640.2,312.2L641,318.8L641.8,319L642.5,323.5L643.2,317.7L644,321.1L644.8,321.5L645.5,322L646.2,311.4L647,316.3L647.8,316.8L648.5,319.3L649.2,321.1L650,325.3L650.8,320.5L651.5,325.5L652.2,323.9L653,323.5L653.8,319.2L654.5,319.2L655.2,321.5L656,319.2L656.8,318.8L657.5,315.1L658.2,323.3L659,323.4L659.8,318.6L660.5,323.7L661.2,321L662,322.2L662.8,322.6L663.5,325.6L664.2,323.2L665,316.4L665.8,321.5L666.5,320.8L667.2,322.7L668,320.9L668.8,321.4L669.5,313.7L670.2,321L671,318.7L671.8,318L672.5,320.9L673.2,318.5L674,312.1L674.8,317.9L675.5,321.8L676.2,317.9L677,319.3L677.8,321.1L678.5,319.6L679.2,312.9L680,320.8L680.8,316.8L681.5,313.9L682.2,323.2L683,324.6L683.8,323.3L684.5,324.5L685.2,324.2L686,325.6L686.8,320.4L687.5,319.7L688.2,319.2L689,319.1L689.8,322L690.5,323.4L691.2,318.3L692,321.6L692.8,319L693.5,319.1L694.2,323.3L695,322.2L695.8,322L696.5,318.5L697.2,320.8L698,320.6L698.8,321.3L699.5,319.8L700.2,324L701,324.2L701.8,319.7L702.5,324.1L703.2,328.3L704,324L704.8,330.3L705.5,335L706.2,337.9L707,339.2L707.8,338.6L708.5,340.4L709.2,341.5L710,343.5L710.8,345.2L711.5,345.3L712.2,346.6L713,344.9L713.8,346.5L714.5,343.9L715.2,346.6L716,346L716.8,346.1L717.5,345.8L718.2,346.2L719,344.1L719.8,345.6L720.5,346.9L721.2,348.1L722,345.5L722.8,346.2L723.5,345.1L724.2,346.5L725,341.9L725.8,345.5L726.5,346.5L727.2,346.8L728,346L728.8,345.3L729.5,345.8L730.2,343.2L731,344.4L731.8,342.5L732.5,342.9L733.2,340.4L734,341.1L734.8,339.9L735.5,335.1L736.2,337.2L737,337.2L737.8,333.2L738.5,332.1L739.2,336.1L740,336.9L740.8,331.4L741.5,334.3L742.2,327.9L743,332.7L743.8,329.6L744.5,333.8L745.2,332.3L746,333.1L746.8,329.4L747.5,334.6L748.2,337.7L749,331.5L749.8,339.4L750.5,337.4L751.2,334L752,338L752.8,340.3L753.5,341.8L754.2,340.9L755,343.8L755.8,343.4L756.5,345.6L757.2,344.2L758,345.3L758.8,344.4L759.5,345.8L760.2,342L761,346.1L761.8,348.9L762.5,350.3L763.2,350.9L764,352.4L764.8,352.8L765.5,353.6L766.2,353.8L767,354.3L767.8,354.8L768.5,354.2L769.2,355.4L770,355.7L770.8,356.9L771.5,357.6L772.2,358.3L773,359.1L773.8,359.6L774.5,359.6L775.2,359.6L776,359.6L776.8,359.6L776.8,359.6L776,359.6L775.2,359.6L774.5,359.6L773.8,359.6L773,360.2L772.2,361L771.5,361.7L770.8,362L770,362.4L769.2,362.9L768.5,363.3L767.8,364.1L767,364.8L766.2,365.9L765.5,366.4L764.8,367.3L764,369.3L763.2,373L762.5,370.3L761.8,370.6L761,371.7L760.2,372.4L759.5,372.3L758.8,375L758,374.7L757.2,377.1L756.5,378.8L755.8,379.5L755,378.3L754.2,378.3L753.5,376.7L752.8,379.1L752,378.5L751.2,379.4L750.5,380.1L749.8,380.5L749,381.4L748.2,389.7L747.5,385.7L746.8,386.1L746,387.4L745.2,389.9L744.5,389.2L743.8,397.7L743,390.7L742.2,390.6L741.5,388.3L740.8,388.5L740,387.5L739.2,384.1L738.5,383.9L737.8,383.9L737,380.9L736.2,382.4L735.5,379.8L734.8,376.9L734,377.4L733.2,378L732.5,378.6L731.8,378.3L731,377.8L730.2,377.8L729.5,375.1L728.8,375.3L728,374.1L727.2,372.7L726.5,373.8L725.8,373.9L725,375.2L724.2,374.3L723.5,374.2L722.8,372.5L722,371.5L721.2,371.3L720.5,371.2L719.8,371.1L719,371L718.2,372.9L717.5,372.3L716.8,370.7L716,371L715.2,373.2L714.5,372.8L713.8,375.5L713,373.8L712.2,373.2L711.5,375.5L710.8,374.8L710,374.7L709.2,376.1L708.5,376.5L707.8,376.5L707,380.3L706.2,384.9L705.5,386L704.8,389L704,388.3L703.2,395.1L702.5,392L701.8,393L701,392.3L700.2,402.4L699.5,398.2L698.8,406.4L698,395L697.2,399L696.5,398.4L695.8,394.1L695,394.8L694.2,396.3L693.5,393.9L692.8,395.3L692,395L691.2,396.9L690.5,395.2L689.8,394.2L689,396.7L688.2,405.3L687.5,393.4L686.8,393.3L686,395.9L685.2,397.9L684.5,397.2L683.8,403.4L683,399.5L682.2,401.9L681.5,402.6L680.8,402.4L680,400L679.2,400.5L678.5,396.6L677.8,399.7L677,397.1L676.2,398.4L675.5,399.2L674.8,398.5L674,396.6L673.2,404.9L672.5,395.2L671.8,394.1L671,395.2L670.2,397.5L669.5,395.6L668.8,405.9L668,399L667.2,400.8L666.5,399.6L665.8,401.5L665,401.2L664.2,397.6L663.5,398.9L662.8,400.6L662,396.6L661.2,401.5L660.5,399.7L659.8,396.8L659,400L658.2,401.4L657.5,401.2L656.8,399L656,397.2L655.2,397.7L654.5,393.4L653.8,396.1L653,396.1L652.2,395.1L651.5,398.7L650.8,398L650,400.5L649.2,398.1L648.5,399.3L647.8,397.6L647,397.7L646.2,396.6L645.5,395.1L644.8,396.7L644,394.6L643.2,396.9L642.5,394.2L641.8,394.9L641,404.5L640.2,395.6L639.5,399.7L638.8,397.1L638,398.8L637.2,396L636.5,395.4L635.8,400.3L635,399.4L634.2,398.1L633.5,396.2L632.8,397.7L632,399.3L631.2,398.8L630.5,396.2L629.8,398.9L629,398.9L628.2,395.3L627.5,400.1L626.8,398.7L626,403.9L625.2,399.1L624.5,400.4L623.8,398.7L623,394.3L622.2,395.5L621.5,394.2L620.8,394.6L620,405.5L619.2,396.1L618.5,398L617.8,395.6L617,397.6L616.2,399.1L615.5,400.1L614.8,397.4L614,398.2L613.2,400.5L612.5,400.6L611.8,398.9L611,397.9L610.2,393.7L609.5,386L608.8,384.1L608,381.5L607.2,377.5L606.5,376L605.8,374.9L605,377.1L604.2,374.4L603.5,375.2L602.8,376.2L602,376.6L601.2,374.9L600.5,375.5L599.8,374.7L599,371.9L598.2,371.9L597.5,369.5L596.8,369.6L596,369.8L595.2,370.2L594.5,369.6L593.8,369.8L593,369.6L592.2,369L591.5,369.2L590.8,369.2L590,369L589.2,368.5L588.5,369.7L587.8,370.3L587,371.5L586.2,370.8L585.5,372L584.8,371.9L584,371.6L583.2,370.9L582.5,371.1L581.8,372.7L581,372.8L580.2,372.2L579.5,371.5L578.8,372.6L578,371.1L577.2,370.4L576.5,371.9L575.8,371.6L575,372.4L574.2,370.5L573.5,371.2L572.8,370.7L572,370.5L571.2,371.3L570.5,371.1L569.8,371.6L569,370.7L568.2,371.1L567.5,370.1L566.8,370.2L566,372.9L565.2,370.2L564.5,371.3L563.8,370.8L563,372.1L562.2,372.2L561.5,372.7L560.8,374.5L560,374.1L559.2,373.4L558.5,372.5L557.8,372.8L557,373.4L556.2,373.4L555.5,372.7L554.8,373.7L554,373.7L553.2,372.3L552.5,374L551.8,373.4L551,374.9L550.2,372.5L549.5,372.4L548.8,371.9L548,371L547.2,372L546.5,372.2L545.8,372.8L545,377.2L544.2,373.5L543.5,374.1L542.8,373.1L542,374L541.2,374.9L540.5,375.8L539.8,375.2L539,376.1L538.2,377.5L537.5,378.1L536.8,378.1L536,379.8L535.2,380.6L534.5,379L533.8,381.6L533,382.6L532.2,381.6L531.5,383.7L530.8,385.3L530,388.7L529.2,384.2L528.5,385L527.8,384.2L527,381.5L526.2,379.5L525.5,381.8L524.8,383.4L524,382.2L523.2,386.7L522.5,383.9L521.8,385.2L521,386.2L520.2,387.5L519.5,387.1L518.8,392.2L518,393.7L517.2,392.7L516.5,394.5L515.8,395.3L515,396L514.2,392.8L513.5,394.7L512.8,393.7L512,395L511.2,391.9L510.5,394.6L509.8,394.2L509,393.2L508.2,390.9L507.5,390.9L506.8,394.3L506,393.8L505.2,391.5L504.5,390.2L503.8,394.1L503,391.6L502.2,390.5L501.5,395.7L500.8,396L500,399.1L499.2,394.2L498.5,396.6L497.8,394.6L497,392.9L496.2,394.2L495.5,392.4L494.8,393.4L494,391L493.2,390.1L492.5,385.9L491.8,384.5L491,388.2L490.2,381L489.5,381.6L488.8,378.5L488,377.7L487.2,376.3L486.5,375.6L485.8,377.1L485,376.1L484.2,375.4L483.5,374.3L482.8,374.4L482,374.6L481.2,374.2L480.5,373.6L479.8,375.7L479,376.8L478.2,375.9L477.5,378L476.8,376.8L476,378.4L475.2,375.9L474.5,376.4L473.8,376.2L473,374.9L472.2,375.9L471.5,375.3L470.8,375.5L470,380.4L469.2,376.3L468.5,377.2L467.8,375.7L467,375.4L466.2,374.5L465.5,373.9L464.8,373L464,374.3L463.2,376.7L462.5,377.9L461.8,377.4L461,377.9L460.2,377.3L459.5,374.7L458.8,375.6L458,375.8L457.2,375L456.5,376.5L455.8,377.3L455,379L454.2,375.4L453.5,375.7L452.8,375.8L452,375L451.2,374.1L450.5,375.4L449.8,375.2L449,378.7L448.2,374.7L447.5,374.4L446.8,375L446,376.1L445.2,375.3L444.5,379.9L443.8,377L443,377.8L442.2,377.1L441.5,377.2L440.8,376.2L440,374.1L439.2,374.6L438.5,375.8L437.8,374.8L437,377.5L436.2,376.9L435.5,375.4L434.8,376.3L434,376.4L433.2,383.5L432.5,382.5L431.8,382.4L431,384L430.2,382.1L429.5,383.8L428.8,382.7L428,380.7L427.2,381.6L426.5,381L425.8,383L425,382.6L424.2,384.3L423.5,383.7L422.8,384L422,385L421.2,385.4L420.5,384.9L419.8,384.5L419,388.6L418.2,387.7L417.5,384.3L416.8,384.5L416,387.8L415.2,384.9L414.5,387.7L413.8,383.4L413,382L412.2,385.5L411.5,384.6L410.8,384L410,385.6L409.2,385L408.5,382.8L407.8,383.2L407,383.9L406.2,382L405.5,383L404.8,382.5L404,386.5L403.2,383.7L402.5,384.1L401.8,382.7L401,388.3L400.2,384L399.5,387.8L398.8,380.2L398,382.3L397.2,381.7L396.5,378.6L395.8,378.1L395,378.3L394.2,377.2L393.5,378.8L392.8,379.8L392,381.9L391.2,381.2L390.5,380.4L389.8,381.4L389,385.6L388.2,378.5L387.5,373.6L386.8,374.3L386,374.5L385.2,373.7L384.5,376.1L383.8,375.5L383,377.8L382.2,379.3L381.5,379.6L380.8,378.1L380,377.7L379.2,375.2L378.5,376.3L377.8,375L377,374.9L376.2,374.5L375.5,373.9L374.8,373L374,375.7L373.2,372L372.5,371.2L371.8,371.6L371,373.4L370.2,373.9L369.5,378.8L368.8,375.7L368,376L367.2,375.1L366.5,375.4L365.8,375.1L365,373.7L364.2,374.2L363.5,374.9L362.8,373.3L362,374.9L361.2,374.5L360.5,373.6L359.8,375.1L359,376.2L358.2,376.6L357.5,376.2L356.8,376L356,376.3L355.2,373.9L354.5,374L353.8,372.9L353,371.8L352.2,372.5L351.5,371.9L350.8,372.3L350,371.4L349.2,372.1L348.5,372.3L347.8,373.3L347,374L346.2,373.6L345.5,372.2L344.8,370.7L344,371.3L343.2,370.4L342.5,369.3L341.8,369.9L341,372.3L340.2,371.9L339.5,373.7L338.8,371.2L338,370L337.2,371L336.5,370.2L335.8,370.3L335,371.4L334.2,371.6L333.5,370.9L332.8,371.5L332,371.8L331.2,370.6L330.5,370.8L329.8,370.4L329,372.3L328.2,371L327.5,371.2L326.8,370.8L326,374L325.2,372.6L324.5,375.5L323.8,371.5L323,372.2L322.2,371.2L321.5,369.5L320.8,369.8L320,371.2L319.2,364.2L318.5,364.7L317.8,364.7L317,364.8L316.2,364.3L315.5,363.9L314.8,364.1L314,365.1L313.2,363.6L312.5,363.5L311.8,363.8L311,364.2L310.2,364.3L309.5,365.2L308.8,364.7L308,364.6L307.2,364.4L306.5,364.2L305.8,363.7L305,363.7L304.2,363.3L303.5,363.7L302.8,363.4L302,363.5L301.2,363.4L300.5,363.1L299.8,362.7L299,363.1L298.2,362.3L297.5,362.1L296.8,362.2L296,362.3L295.2,362.2L294.5,362.9L293.8,362.5L293,362.6L292.2,362.5L291.5,362.7L290.8,362.7L290,362.5L289.2,362.6L288.5,362.8L287.8,362.5L287,362.9L286.2,362.8L285.5,362.5L284.8,363L284,364L283.2,364.2L282.5,363L281.8,362.3L281,362.5L280.2,362.2L279.5,362.4L278.8,362.3L278,362L277.2,362.1L276.5,362L275.8,362.1L275,362L274.2,362.2L273.5,362L272.8,362L272,361.9L271.2,361.8L270.5,361.6L269.8,361.5L269,361.6L268.2,361.4L267.5,361.1L266.8,361L266,361.1L265.2,361L264.5,361L263.8,360.7L263,360.5L262.2,360.6L261.5,360.4L260.8,360.2L260,360.1L259.2,359.9L258.5,359.7L257.8,359.6L257,359.6L256.2,359.6L255.5,359.6L254.8,359.6L254,359.6Z" fill="#2c1529"/></g>
<g clip-path="url(#fw-selc)"><path d="M254,359.6L254.8,359.6L255.5,359.6L256.2,359.6L257,359.6L257.8,359.6L258.5,359.5L259.2,359.2L260,359L260.8,358.8L261.5,358.3L262.2,358.1L263,358.5L263.8,358.4L264.5,358.3L265.2,357.9L266,358.1L266.8,357.9L267.5,357.9L268.2,358.1L269,357.7L269.8,357.5L270.5,357.2L271.2,357.6L272,357.4L272.8,357.2L273.5,357.2L274.2,356.9L275,357.3L275.8,356.9L276.5,357L277.2,357L278,356.3L278.8,356.2L279.5,355.8L280.2,356.5L281,356.1L281.8,356.7L282.5,352.5L283.2,349.4L284,350.8L284.8,354.9L285.5,356.4L286.2,356.5L287,356.1L287.8,356.1L288.5,355.4L289.2,356.1L290,356.1L290.8,356L291.5,356.1L292.2,356.2L293,356.2L293.8,356.5L294.5,356.2L295.2,356.6L296,356.7L296.8,356.1L297.5,355.7L298.2,355.7L299,356.2L299.8,355.4L300.5,356.1L301.2,356.2L302,356.3L302.8,355.4L303.5,355.1L304.2,354.8L305,354.2L305.8,354.5L306.5,354.6L307.2,354.1L308,354.3L308.8,353.5L309.5,352.8L310.2,354L311,353.1L311.8,354.4L312.5,353.2L313.2,354.3L314,353.5L314.8,352.9L315.5,353.4L316.2,353.8L317,354.6L317.8,354.1L318.5,353.9L319.2,353.8L320,345.6L320.8,343.2L321.5,339.9L322.2,341.6L323,342.2L323.8,345.6L324.5,345.3L325.2,344.6L326,345.5L326.8,346.6L327.5,344.2L328.2,348.3L329,346L329.8,345.8L330.5,344.5L331.2,345.9L332,344.1L332.8,345.3L333.5,342.6L334.2,344.3L335,344.9L335.8,347.2L336.5,347.5L337.2,346.4L338,345.9L338.8,347.4L339.5,345.3L340.2,344.3L341,345L341.8,341.9L342.5,345.7L343.2,341.6L344,345.2L344.8,344.2L345.5,345.3L346.2,342.1L347,345.9L347.8,343.9L348.5,344.6L349.2,341.9L350,345.3L350.8,343.6L351.5,346.1L352.2,344.3L353,345.2L353.8,345.2L354.5,341.5L355.2,340.5L356,339.9L356.8,339.7L357.5,337.7L358.2,342.9L359,342.1L359.8,342.7L360.5,344.3L361.2,344.6L362,341.7L362.8,343.8L363.5,342.6L364.2,339.3L365,339.6L365.8,335L366.5,333.2L367.2,340.1L368,340.9L368.8,341.9L369.5,338.3L370.2,344.5L371,340.5L371.8,338.9L372.5,340.7L373.2,343L374,341.6L374.8,342.2L375.5,341.7L376.2,342.6L377,338.7L377.8,339.4L378.5,337.4L379.2,337.6L380,337.6L380.8,339.5L381.5,340.6L382.2,341.7L383,339.5L383.8,339.8L384.5,338.7L385.2,338.2L386,338.4L386.8,343.4L387.5,338.2L388.2,339.4L389,335.8L389.8,334.3L390.5,335.1L391.2,335.7L392,334.3L392.8,337.1L393.5,334.4L394.2,334.6L395,333.8L395.8,337.3L396.5,330.5L397.2,325.8L398,334.8L398.8,332.5L399.5,333.6L400.2,331.6L401,334.8L401.8,332.7L402.5,336.6L403.2,330.4L404,334.6L404.8,331.6L405.5,333.7L406.2,333.8L407,335.2L407.8,333.4L408.5,337.1L409.2,325.5L410,325L410.8,322.8L411.5,323.8L412.2,330.8L413,332.3L413.8,335.7L414.5,332.8L415.2,333.6L416,326.2L416.8,326.8L417.5,323.7L418.2,329.3L419,330.8L419.8,334.4L420.5,332.9L421.2,325.6L422,331.9L422.8,332.3L423.5,326.7L424.2,326.7L425,332.2L425.8,331.6L426.5,326L427.2,329.2L428,328.2L428.8,330.5L429.5,329.1L430.2,328L431,330L431.8,326.7L432.5,329.2L433.2,330.2L434,322.6L434.8,323.8L435.5,339.9L436.2,330.3L437,338.2L437.8,327L438.5,332.7L439.2,335.8L440,337.5L440.8,329.2L441.5,337.4L442.2,338.4L443,335.5L443.8,337.2L444.5,332.7L445.2,332L446,328.1L446.8,329.9L447.5,339.3L448.2,327.3L449,336.5L449.8,335.1L450.5,332.3L451.2,321.5L452,337.6L452.8,326.9L453.5,329.4L454.2,333.4L455,335.9L455.8,329.4L456.5,323.6L457.2,333.9L458,323.9L458.8,324.2L459.5,321.9L460.2,328.8L461,336.4L461.8,324.7L462.5,333.6L463.2,332.5L464,322.6L464.8,331.9L465.5,330.4L466.2,337.3L467,330.5L467.8,339.5L468.5,336.5L469.2,326.9L470,336L470.8,325.6L471.5,327.2L472.2,335.2L473,326.1L473.8,336.9L474.5,336.8L475.2,330.1L476,323.5L476.8,326.4L477.5,325L478.2,338.7L479,325L479.8,335.9L480.5,328.8L481.2,324L482,337.9L482.8,338L483.5,328.9L484.2,334.3L485,328.6L485.8,319.4L486.5,320.1L487.2,331.6L488,335.2L488.8,319.9L489.5,335.7L490.2,334.3L491,326.8L491.8,326.8L492.5,330.2L493.2,321.7L494,320L494.8,314.6L495.5,320.5L496.2,314.2L497,317L497.8,311.5L498.5,312.5L499.2,314L500,318.4L500.8,314.3L501.5,317.3L502.2,318.6L503,314.4L503.8,314.5L504.5,322.1L505.2,319.9L506,318.4L506.8,318.5L507.5,319L508.2,316.1L509,317.8L509.8,314.2L510.5,317.4L511.2,322.9L512,313.5L512.8,312.8L513.5,313.4L514.2,310.4L515,323.4L515.8,325.4L516.5,327.4L517.2,320L518,314.1L518.8,316.2L519.5,327.6L520.2,329.2L521,329.6L521.8,327.5L522.5,327.9L523.2,330.1L524,323.5L524.8,319.8L525.5,323L526.2,322.6L527,329.4L527.8,333L528.5,330.7L529.2,336.4L530,334.3L530.8,332.8L531.5,333.5L532.2,327.9L533,334.3L533.8,334.9L534.5,331.7L535.2,328.4L536,337.8L536.8,336.8L537.5,336.4L538.2,335.4L539,337.1L539.8,340.2L540.5,343.1L541.2,338.2L542,342L542.8,343L543.5,343.6L544.2,339L545,342.1L545.8,343.8L546.5,340.7L547.2,342.1L548,344.2L548.8,345.2L549.5,346.9L550.2,343L551,346.4L551.8,343.7L552.5,346.1L553.2,345.9L554,345.1L554.8,346.2L555.5,346.1L556.2,344.9L557,345.4L557.8,346L558.5,345.1L559.2,344.8L560,342.3L560.8,342.7L561.5,343.8L562.2,343.4L563,343.3L563.8,342.1L564.5,347.9L565.2,344.5L566,345.7L566.8,343.8L567.5,341.7L568.2,343.5L569,343.7L569.8,342.2L570.5,345.4L571.2,346L572,341.7L572.8,344.9L573.5,346.3L574.2,344.9L575,344.5L575.8,344.4L576.5,346.5L577.2,346.2L578,347.8L578.8,341.4L579.5,345.1L580.2,346.8L581,345.1L581.8,344.5L582.5,346.7L583.2,346.8L584,345L584.8,344.2L585.5,347.2L586.2,348.4L587,346.2L587.8,347.6L588.5,346.8L589.2,347.2L590,348.3L590.8,347.2L591.5,347.2L592.2,348.2L593,347.4L593.8,347.2L594.5,346.8L595.2,342.3L596,345.9L596.8,344.8L597.5,346.1L598.2,345.1L599,339.6L599.8,337.8L600.5,337.1L601.2,338.6L602,338.4L602.8,338.1L603.5,340.9L604.2,344.6L605,343.2L605.8,344.8L606.5,344.1L607.2,342L608,335.1L608.8,334.5L609.5,328.4L610.2,327.9L611,322.3L611.8,318.2L612.5,318.6L613.2,315.7L614,322.6L614.8,312.6L615.5,317.6L616.2,322.9L617,319.4L617.8,318.7L618.5,321.4L619.2,309.4L620,315.6L620.8,320.9L621.5,318.2L622.2,320.2L623,312.1L623.8,315.7L624.5,317.4L625.2,307.3L626,320.4L626.8,317.3L627.5,315L628.2,318.4L629,318.4L629.8,311.3L630.5,322.2L631.2,313L632,319.1L632.8,313.4L633.5,316.9L634.2,316.5L635,319.3L635.8,313.2L636.5,317.3L637.2,317.3L638,317.4L638.8,315.9L639.5,318.5L640.2,309.1L641,316.5L641.8,315.9L642.5,321.6L643.2,314.7L644,318.4L644.8,319.8L645.5,320L646.2,307.3L647,314.3L647.8,313.8L648.5,317.2L649.2,317L650,322.3L650.8,318.7L651.5,323.2L652.2,321.6L653,319.3L653.8,317.3L654.5,315.4L655.2,317.8L656,317.1L656.8,316.4L657.5,309.7L658.2,319.5L659,318.8L659.8,316.3L660.5,319.2L661.2,318L662,320.2L662.8,318.5L663.5,320.8L664.2,320.5L665,314.2L665.8,319.8L666.5,318.7L667.2,317.8L668,316.1L668.8,318.7L669.5,309.3L670.2,319.5L671,316L671.8,314.5L672.5,319.6L673.2,316L674,309.7L674.8,315.7L675.5,318.2L676.2,316.6L677,315.7L677.8,319.4L678.5,314.4L679.2,309.4L680,318.6L680.8,314.6L681.5,310.4L682.2,321.7L683,322.4L683.8,320.9L684.5,323L685.2,322.3L686,323.7L686.8,317.9L687.5,315.1L688.2,317.2L689,316.2L689.8,320.7L690.5,321.5L691.2,313.9L692,318.3L692.8,314.5L693.5,317.1L694.2,320.5L695,320.8L695.8,320.2L696.5,317.1L697.2,318.4L698,317.5L698.8,317.2L699.5,314.2L700.2,321L701,321.9L701.8,318.1L702.5,322L703.2,325.3L704,322.3L704.8,326.1L705.5,333.9L706.2,335.6L707,337.7L707.8,337L708.5,336.9L709.2,339.9L710,341.3L710.8,343.7L711.5,344.3L712.2,345.2L713,343.7L713.8,345.8L714.5,341.1L715.2,344.6L716,344.5L716.8,345.2L717.5,343.8L718.2,344.3L719,342.3L719.8,344.1L720.5,345.3L721.2,346.6L722,344.7L722.8,344.2L723.5,343.3L724.2,344.8L725,340.5L725.8,343.8L726.5,345.3L727.2,344.1L728,344.1L728.8,343.5L729.5,343.1L730.2,341.2L731,342L731.8,340.1L732.5,342.3L733.2,339L734,339.1L734.8,337.4L735.5,332.5L736.2,336.5L737,336.6L737.8,331.4L738.5,331.3L739.2,335.1L740,334.3L740.8,328.5L741.5,332.1L742.2,325.2L743,330.6L743.8,328.9L744.5,332.2L745.2,330L746,331.2L746.8,327.3L747.5,333.8L748.2,336.7L749,329.3L749.8,337.7L750.5,336.6L751.2,331.7L752,336.7L752.8,339.8L753.5,340.1L754.2,340L755,342.9L755.8,342L756.5,344.4L757.2,342.3L758,344.2L758.8,343.8L759.5,345L760.2,341.5L761,345L761.8,348.2L762.5,349.8L763.2,350.6L764,351.9L764.8,352L765.5,352.9L766.2,353L767,353.5L767.8,354.3L768.5,353.8L769.2,354.8L770,355.6L770.8,356.7L771.5,357.5L772.2,358.2L773,359.1L773.8,359.6L774.5,359.6L775.2,359.6L776,359.6L776.8,359.6L776.8,359.6L776,359.6L775.2,359.6L774.5,359.6L773.8,359.6L773,360.2L772.2,361.1L771.5,361.9L770.8,362.2L770,362.7L769.2,363.1L768.5,363.6L767.8,364.7L767,365.3L766.2,366.4L765.5,366.9L764.8,368.5L764,370.1L763.2,374.2L762.5,370.7L761.8,372L761,373.4L760.2,373L759.5,373.1L758.8,376.1L758,375.9L757.2,378.9L756.5,380.3L755.8,380.1L755,379.6L754.2,379.3L753.5,378L752.8,379.8L752,379.8L751.2,380.2L750.5,380.8L749.8,381.2L749,383.8L748.2,390.9L747.5,386.2L746.8,387.9L746,390L745.2,391.2L744.5,390.6L743.8,398.6L743,391.4L742.2,391.2L741.5,391.2L740.8,389.9L740,389.7L739.2,386.4L738.5,385.8L737.8,386.4L737,383L736.2,385.1L735.5,382L734.8,379L734,378.4L733.2,379.5L732.5,381.3L731.8,379.5L731,379L730.2,379.2L729.5,377.3L728.8,377.7L728,376.2L727.2,373.5L726.5,375.5L725.8,375L725,377.5L724.2,375.2L723.5,375.6L722.8,373.1L722,373.4L721.2,372.5L720.5,373.8L719.8,373.2L719,372.5L718.2,375.6L717.5,373.2L716.8,372.1L716,371.7L715.2,374.5L714.5,373.6L713.8,376.5L713,375.9L712.2,375.5L711.5,377.3L710.8,375.9L710,375.8L709.2,378.2L708.5,377.5L707.8,377.5L707,381.5L706.2,387L705.5,387.3L704.8,392.8L704,392.3L703.2,396.7L702.5,394.5L701.8,396.5L701,396.6L700.2,406.9L699.5,402.5L698.8,411.8L698,399.6L697.2,400.3L696.5,401.5L695.8,396.9L695,398.4L694.2,398L693.5,396.5L692.8,399.1L692,398L691.2,399.8L690.5,397.7L689.8,399.8L689,400.1L688.2,409.7L687.5,395.1L686.8,398.2L686,401.4L685.2,399.7L684.5,399.6L683.8,406.5L683,402.9L682.2,406.9L681.5,406.7L680.8,404L680,403.2L679.2,403.1L678.5,399.7L677.8,401.3L677,400.2L676.2,400.3L675.5,400.7L674.8,400L674,401.9L673.2,407.5L672.5,396.4L671.8,398.1L671,400.8L670.2,400.1L669.5,398.4L668.8,407.5L668,400.2L667.2,402.1L666.5,405.3L665.8,404.3L665,405.6L664.2,402.3L663.5,402.7L662.8,405.5L662,400.9L661.2,407L660.5,404L659.8,401L659,402.1L658.2,404.6L657.5,406.6L656.8,401.6L656,399.6L655.2,400.6L654.5,397.8L653.8,400.9L653,400.4L652.2,396.7L651.5,401.9L650.8,400.2L650,405.2L649.2,399.9L648.5,402.2L647.8,398.8L647,401.4L646.2,401.2L645.5,397.1L644.8,399L644,396.4L643.2,402.4L642.5,398.6L641.8,396.4L641,408.6L640.2,398.7L639.5,401.9L638.8,400.7L638,402.2L637.2,400.6L636.5,397.4L635.8,405.8L635,403.6L634.2,402.2L633.5,398.6L632.8,401.5L632,403L631.2,400.7L630.5,397.7L629.8,400.2L629,403.9L628.2,397L627.5,401.9L626.8,403.1L626,407.6L625.2,402.9L624.5,402.2L623.8,403.6L623,399.5L622.2,400.4L621.5,399.5L620.8,398L620,409.1L619.2,397.4L618.5,403.5L617.8,399.2L617,400.7L616.2,403.6L615.5,404.6L614.8,398.9L614,401.8L613.2,404L612.5,402.7L611.8,401.9L611,399.9L610.2,395.4L609.5,389.8L608.8,386.5L608,383.3L607.2,379.6L606.5,376.9L605.8,377.4L605,379.7L604.2,376.9L603.5,376.1L602.8,377.2L602,378.3L601.2,377.2L600.5,378L599.8,377.4L599,374.2L598.2,374.5L597.5,371.1L596.8,370.4L596,372L595.2,372.1L594.5,373L593.8,371L593,370.9L592.2,370.7L591.5,372L590.8,372.7L590,370.1L589.2,370.9L588.5,370.5L587.8,372.5L587,375.2L586.2,373.5L585.5,373.8L584.8,372.8L584,374.6L583.2,371.7L582.5,372.2L581.8,374.9L581,375.1L580.2,373.2L579.5,374.5L578.8,373.8L578,372.9L577.2,372.4L576.5,373L575.8,375L575,373.2L574.2,372.8L573.5,373.1L572.8,373.7L572,373.7L571.2,374.4L570.5,372.5L569.8,373.2L569,371.9L568.2,374.8L567.5,373L566.8,371.2L566,375.7L565.2,372.3L564.5,372.8L563.8,373.2L563,374.4L562.2,375.3L561.5,374L560.8,378.2L560,376.9L559.2,376.2L558.5,374.1L557.8,375.4L557,376L556.2,374.7L555.5,373.7L554.8,374.6L554,377.3L553.2,373.6L552.5,375.3L551.8,376.7L551,377.7L550.2,375.4L549.5,373.9L548.8,375.8L548,375.3L547.2,376.3L546.5,377L545.8,375.9L545,380.6L544.2,374.8L543.5,379.7L542.8,376.9L542,377.3L541.2,380L540.5,381L539.8,377L539,380.3L538.2,381.6L537.5,380.6L536.8,381.7L536,382.3L535.2,382.8L534.5,384.5L533.8,385.3L533,385.6L532.2,385.2L531.5,385.4L530.8,390.5L530,393.9L529.2,389.5L528.5,386.8L527.8,386.1L527,385L526.2,384.3L525.5,387.3L524.8,389.3L524,387.4L523.2,392.5L522.5,387.4L521.8,386.9L521,390.8L520.2,391.4L519.5,394L518.8,395.3L518,397.5L517.2,397.8L516.5,402.8L515.8,405.9L515,399.3L514.2,400L513.5,397.1L512.8,400.5L512,406.1L511.2,400.1L510.5,400L509.8,396.8L509,402.1L508.2,393.4L507.5,394L506.8,401L506,400.7L505.2,394.8L504.5,399.3L503.8,397.6L503,396.9L502.2,396.6L501.5,398.8L500.8,406L500,401.6L499.2,401.1L498.5,402.3L497.8,403.5L497,402.6L496.2,403.3L495.5,396.4L494.8,398L494,394.4L493.2,403L492.5,397.6L491.8,389L491,401.9L490.2,391.8L489.5,389.4L488.8,391.5L488,390.5L487.2,393.4L486.5,383.1L485.8,397.8L485,391.8L484.2,390.6L483.5,383.2L482.8,388.8L482,388.7L481.2,381.3L480.5,379.2L479.8,380.5L479,395.8L478.2,382.5L477.5,384.9L476.8,393.5L476,392.3L475.2,390.2L474.5,383.3L473.8,394.6L473,394.2L472.2,394.3L471.5,395.3L470.8,388.1L470,393.8L469.2,380.9L468.5,397.7L467.8,389.3L467,387L466.2,391.8L465.5,391.1L464.8,378.7L464,387.9L463.2,390L462.5,385.7L461.8,388.7L461,385.7L460.2,384.3L459.5,391.6L458.8,387L458,384.9L457.2,385.6L456.5,381.4L455.8,392.3L455,394L454.2,390.4L453.5,380.7L452.8,381.2L452,384.8L451.2,387.4L450.5,390.2L449.8,395.9L449,389.1L448.2,379.4L447.5,389.7L446.8,396.6L446,386L445.2,385.9L444.5,386.1L443.8,381.7L443,382.7L442.2,398.4L441.5,387.5L440.8,392.3L440,391.5L439.2,388.9L438.5,393.8L437.8,390.3L437,397.6L436.2,392.6L435.5,390.3L434.8,383.6L434,387.8L433.2,390.7L432.5,385.9L431.8,385.6L431,387.9L430.2,387.9L429.5,390.2L428.8,388.4L428,382.8L427.2,386L426.5,383.9L425.8,389.3L425,385L424.2,388.2L423.5,385.3L422.8,389.1L422,388.3L421.2,392.3L420.5,390.7L419.8,388.4L419,395.9L418.2,389.9L417.5,387.9L416.8,386.5L416,391.1L415.2,387L414.5,390.3L413.8,389.9L413,389.7L412.2,391.7L411.5,388.6L410.8,387.4L410,391.7L409.2,387.5L408.5,385L407.8,385.6L407,387.7L406.2,384.3L405.5,389.3L404.8,388.9L404,388.8L403.2,387.3L402.5,388.8L401.8,388.2L401,393.6L400.2,389.1L399.5,394.1L398.8,385.5L398,383.8L397.2,385.2L396.5,381.7L395.8,382.1L395,380.2L394.2,380L393.5,382.9L392.8,383L392,385L391.2,383.8L390.5,386.2L389.8,384.8L389,390L388.2,380.2L387.5,377.7L386.8,378.9L386,376L385.2,375.8L384.5,378.7L383.8,378.4L383,382L382.2,382.7L381.5,380.9L380.8,380.8L380,379.8L379.2,377.8L378.5,377.7L377.8,377.5L377,376.4L376.2,375.8L375.5,375.2L374.8,377.4L374,378L373.2,373L372.5,374.5L371.8,376.6L371,376.2L370.2,377.4L369.5,381.2L368.8,377.8L368,378.5L367.2,386.2L366.5,380.4L365.8,382.2L365,380.6L364.2,379.3L363.5,380.5L362.8,377.5L362,379.5L361.2,378.1L360.5,377.1L359.8,376.8L359,378.8L358.2,381.1L357.5,378.4L356.8,378L356,378.7L355.2,377.4L354.5,377.7L353.8,376.1L353,373L352.2,374.8L351.5,373.4L350.8,375.5L350,372.6L349.2,374L348.5,373.2L347.8,375.8L347,375.7L346.2,377.1L345.5,375.1L344.8,372.6L344,374.9L343.2,371.5L342.5,371.1L341.8,370.9L341,374L340.2,373L339.5,374.9L338.8,374L338,373L337.2,373.2L336.5,371.5L335.8,371.5L335,373.8L334.2,372.7L333.5,372L332.8,372.7L332,373.8L331.2,371.8L330.5,374.1L329.8,373.8L329,373.6L328.2,373L327.5,373.8L326.8,373.8L326,377L325.2,375.5L324.5,379.2L323.8,374.6L323,373.1L322.2,373.3L321.5,371.3L320.8,372.2L320,372.3L319.2,364.8L318.5,365.6L317.8,365.5L317,365.5L316.2,364.9L315.5,365.3L314.8,364.9L314,366.2L313.2,364L312.5,364.7L311.8,365.3L311,364.8L310.2,365.3L309.5,366.6L308.8,366.3L308,366.5L307.2,365.7L306.5,364.5L305.8,364.3L305,364.2L304.2,363.9L303.5,364L302.8,363.9L302,363.8L301.2,363.7L300.5,363.4L299.8,363.5L299,363.6L298.2,362.5L297.5,362.8L296.8,363.1L296,362.8L295.2,362.7L294.5,363.2L293.8,362.7L293,362.9L292.2,363.7L291.5,363.3L290.8,363.7L290,363.5L289.2,363.5L288.5,363.9L287.8,363.5L287,364.2L286.2,363.8L285.5,363.6L284.8,364.1L284,368.2L283.2,372.5L282.5,364.8L281.8,362.7L281,363L280.2,362.9L279.5,363.1L278.8,362.9L278,362.3L277.2,362.5L276.5,362.2L275.8,362.7L275,362.2L274.2,362.5L273.5,362.2L272.8,362.4L272,362.2L271.2,362.4L270.5,362.1L269.8,361.8L269,362.2L268.2,361.6L267.5,361.3L266.8,361.1L266,361.4L265.2,361.1L264.5,361.2L263.8,361.1L263,360.9L262.2,360.8L261.5,360.5L260.8,360.3L260,360.2L259.2,359.9L258.5,359.7L257.8,359.6L257,359.6L256.2,359.6L255.5,359.6L254.8,359.6L254,359.6Z" fill="#3aa8d8" opacity="0.36"/><path d="M309.5,351.6V368M320,343V375.6M321.5,339.9V372M324.5,341.8V379.7M326,343.1V377.7M327.5,343V376.1M330.5,343.1V374.8M332,341.1V373.9M333.5,340.2V374.6M335,343.4V375.1M336.5,347.1V373.5M338,346.2V372.1M339.5,342.9V376M342.5,344.6V372.5M347,342.1V378.8M351.5,344.2V374.8M353,341.4V375.6M360.5,343.8V376.2M363.5,335.8V380.6M366.5,329.3V382.6M368,332.8V385.8M369.5,335.5V385M372.5,340.5V373.7M374,340.7V380.6M375.5,337.5V378.1M377,338.8V377.9M378.5,337.7V380.2M381.5,340.6V383.2M383,338.1V381.8M392,332.5V389.7M393.5,332.8V384.7M401,333.1V395.6M405.5,329.1V389.8M407,333.2V390.7M410,325.7V396.7M411.5,325V396.9M417.5,320.9V393.9M420.5,332.3V390.8M422,330.7V390.4M423.5,321.9V393.1M425,326.4V389.5M431,326.1V390M435.5,332.4V396.7M440,318.5V395M441.5,326.6V404.7M443,315.6V392.4M444.5,316.8V392M446,322.4V403.1M447.5,327.2V394.2M450.5,318.6V403.3M452,315.5V393.5M453.5,325.8V394M455,329.2V395M456.5,321.5V397.6M459.5,330.1V392M464,316V391.1M471.5,324.7V387.2M473,320.1V394.5M482,322.9V391.7M485,314.7V400.5M489.5,325.1V405.3M491,328.3V412.4M495.5,315.1V400.8M501.5,312.1V402.4M506,316.5V405.3M507.5,316.2V399.3M510.5,311.2V404.4M513.5,316.1V407.3M515,314.7V402.1M516.5,317V404.7M518,306.8V404.6M519.5,325.8V396.9M522.5,329.8V390.5M524,319.2V391.7M525.5,323.3V392.1M527,325.2V387.5M533,328.5V388.8M534.5,328V385.4M539,333.4V384.1M540.5,338V383.4M542,339.6V381.9M543.5,343V379.7M545,339.3V382.9M546.5,339V378.6M548,344.2V376.5M549.5,343.2V376M551,345.4V377.7M552.5,343.8V378.4M554,345.8V378.9M555.5,342.8V377.5M560,343.7V378.9M561.5,342.2V376.5M566,342.9V377.3M567.5,341.7V374.8M570.5,343.3V374.5M572,341.6V373.1M573.5,344.7V374.7M575,345.5V375.4M581,342.9V376.6M582.5,347V373.4M585.5,344.4V374.9M590,345.6V372.3M591.5,345.3V371.9M593,346.2V371.7M594.5,345.3V371.6M599,338.7V374.4M600.5,337.1V379.7M603.5,337.5V379M605,341.9V380.7M608,333.5V386.6M611,319.6V401.4M612.5,314.8V406.5M614,317.2V403.5M615.5,318.1V404.8M617,319.1V404.2M618.5,321.1V401.6M620,312.5V411.5M621.5,316.7V401.2M623,308.3V400.2M627.5,312.5V403.3M630.5,319.5V400.8M632,316.7V403.2M635,314.4V405.2M636.5,315.4V400.6M638,313.5V402M642.5,317.8V401.6M645.5,315.4V400.3M647,309.6V403.9M648.5,315.5V403.1M651.5,320.7V403.7M653,316.8V401.4M654.5,314.2V399M656,314.8V401M657.5,310.9V408.4M659,319.5V407.3M660.5,320.7V406.1M662,318.3V401.4M663.5,321.5V402.3M665,309.3V407.6M668,314V402.1M669.5,308.3V402M671,313.6V400.3M672.5,313.6V401.2M678.5,313.3V403M684.5,321.1V402.2M689,312V400.8M701,320.4V397.9M704,319.9V392.2M707,336.4V383.2M710,339.4V377.4M713,341.7V376M717.5,344.1V375.4M722,341.9V375.2M728,342.8V377.2M729.5,343.7V377M731,341V381.4M732.5,340.5V380.4M734,339V380.2M735.5,332.7V381.6M738.5,329.9V387M740,333.7V389.1M741.5,332.8V391M746,331.4V390.5M749,328.3V383.2M750.5,334.4V382.9M752,336V380.7M753.5,338.9V379.2M755,341.2V381M756.5,343.3V380.4M759.5,344.1V374.1M283.3,343.5V376.6M283.9,348.2V371.6M309,350.1V369.6M343,344.4V375.6M357,338.7V381.6M357.6,342.5V377.6M367.5,334V386.6M368.1,340.6V379.6M380,336.8V383.6M396,334V386.6M404,331.1V389.6M411.5,323.5V397.6M412.1,331.1V389.6M420,331.1V389.6M428,330.2V390.6M526,325.4V395.6M534,331.1V389.6M545,338.7V381.6M603,334V386.6" stroke="#4fc2ea" stroke-width="0.85" opacity="0.62" fill="none"/><path d="M254,359.6L254.8,359.6L255.5,359.6L256.2,359.6L257,359.6L257.8,359.6L258.5,359.5L259.2,359.3L260,359.1L260.8,359L261.5,358.7L262.2,358.5L263,358.6L263.8,358.5L264.5,358.4L265.2,358.4L266,358.3L266.8,358.3L267.5,358.2L268.2,358.2L269,358.1L269.8,357.9L270.5,357.8L271.2,357.7L272,357.8L272.8,357.6L273.5,357.4L274.2,357.2L275,357.5L275.8,357.3L276.5,357.5L277.2,357.2L278,356.9L278.8,356.8L279.5,356.6L280.2,356.8L281,357L281.8,357.1L282.5,356.2L283.2,355.9L284,355.8L284.8,355.6L285.5,356.8L286.2,356.8L287,356.7L287.8,356.4L288.5,356.6L289.2,356.6L290,356.7L290.8,356.6L291.5,356.9L292.2,356.7L293,357.1L293.8,357.2L294.5,357L295.2,356.9L296,357.1L296.8,356.9L297.5,356.5L298.2,356.3L299,356.4L299.8,356.1L300.5,356.3L301.2,356.5L302,356.5L302.8,355.7L303.5,356L304.2,355.1L305,355.2L305.8,354.9L306.5,355.1L307.2,355L308,354.8L308.8,354.3L309.5,354.5L310.2,354.8L311,354.5L311.8,355.2L312.5,354.5L313.2,354.6L314,354.5L314.8,353.9L315.5,354.6L316.2,354.2L317,355.1L317.8,355.2L318.5,354.4L319.2,354.7L320,346.6L320.8,345.4L321.5,342.4L322.2,342.9L323,344.3L323.8,346.5L324.5,346.6L325.2,347.1L326,347.9L326.8,347.8L327.5,346.7L328.2,349.4L329,348.9L329.8,348.5L330.5,347.6L331.2,347.3L332,344.9L332.8,346.2L333.5,344.7L334.2,347.8L335,346.8L335.8,348.2L336.5,349.6L337.2,349.2L338,348.8L338.8,348.3L339.5,347.3L340.2,346.9L341,346.5L341.8,344.7L342.5,347.3L343.2,345.1L344,347.6L344.8,346.1L345.5,346.6L346.2,345.9L347,346.9L347.8,346.3L348.5,345.5L349.2,344.8L350,346.2L350.8,344.6L351.5,347L352.2,347.5L353,346.3L353.8,346.4L354.5,345.2L355.2,341.8L356,342.1L356.8,340.9L357.5,342.3L358.2,344.5L359,346.4L359.8,345.1L360.5,347.2L361.2,347L362,345.2L362.8,345.5L363.5,344.3L364.2,342.3L365,342.5L365.8,344.2L366.5,341.9L367.2,343.4L368,345.2L368.8,346.3L369.5,345.5L370.2,346.1L371,344.4L371.8,343.8L372.5,344.7L373.2,344.6L374,343.7L374.8,344.3L375.5,343.3L376.2,344.8L377,342.9L377.8,341L378.5,341.2L379.2,341.1L380,341.5L380.8,342.7L381.5,344.6L382.2,344.3L383,343.4L383.8,343.8L384.5,342.9L385.2,342.7L386,341.6L386.8,344.5L387.5,340.9L388.2,341.7L389,340.3L389.8,336.2L390.5,337.1L391.2,338.1L392,339.1L392.8,338.5L393.5,339L394.2,337.7L395,338.8L395.8,339.7L396.5,336.2L397.2,331.6L398,337.3L398.8,336.4L399.5,337.6L400.2,335.2L401,338L401.8,337.3L402.5,339.5L403.2,337.2L404,336.5L404.8,333.2L405.5,337.1L406.2,337.3L407,339.3L407.8,339.4L408.5,339.7L409.2,332.7L410,333.7L410.8,327.8L411.5,332L412.2,334.1L413,336.2L413.8,338.4L414.5,337.1L415.2,335.7L416,333.8L416.8,332.9L417.5,330.6L418.2,335.1L419,334L419.8,336.7L420.5,337L421.2,332.4L422,336L422.8,336.7L423.5,331.6L424.2,330.3L425,334.9L425.8,335.1L426.5,329.9L427.2,330.8L428,333.7L428.8,333L429.5,333.3L430.2,332.7L431,332.3L431.8,332.2L432.5,334.6L433.2,332.9L434,341.4L434.8,343.2L435.5,345L436.2,346.8L437,343.8L437.8,340.6L438.5,341.1L439.2,342.9L440,343.5L440.8,342.7L441.5,343.4L442.2,343.6L443,343.8L443.8,343.6L444.5,343.1L445.2,343.3L446,339.2L446.8,343.3L447.5,345.7L448.2,343L449,346.5L449.8,345.6L450.5,342.2L451.2,340.7L452,342.3L452.8,343.2L453.5,343.7L454.2,343.4L455,344.2L455.8,344.2L456.5,344.5L457.2,343.3L458,341.3L458.8,339.3L459.5,342.5L460.2,338.6L461,342.1L461.8,342.1L462.5,342.1L463.2,344L464,342L464.8,344L465.5,344.5L466.2,345.9L467,344L467.8,347L468.5,346L469.2,346.5L470,343.7L470.8,343.2L471.5,342.1L472.2,341.7L473,343.4L473.8,343.8L474.5,344.3L475.2,345.7L476,343.7L476.8,346.1L477.5,344.7L478.2,345.1L479,343.3L479.8,341.2L480.5,345L481.2,344.9L482,342.8L482.8,342.6L483.5,342.6L484.2,340.4L485,342L485.8,340.1L486.5,341L487.2,341.1L488,342.2L488.8,340.6L489.5,341.6L490.2,339.7L491,340.9L491.8,336.3L492.5,333.6L493.2,332.3L494,325.6L494.8,321.7L495.5,325.6L496.2,324L497,323.7L497.8,314.8L498.5,320.5L499.2,323.2L500,324.6L500.8,323.5L501.5,325L502.2,327L503,325.3L503.8,325L504.5,326.6L505.2,323.9L506,327.4L506.8,327.9L507.5,326.9L508.2,324.8L509,325L509.8,324L510.5,321.4L511.2,325.7L512,322.2L512.8,321.5L513.5,323.7L514.2,315.8L515,326.2L515.8,328.2L516.5,330.3L517.2,325.5L518,318L518.8,323.1L519.5,331.6L520.2,331.7L521,332.4L521.8,334.9L522.5,336.1L523.2,335.1L524,330L524.8,327L525.5,330.9L526.2,324.8L527,331.6L527.8,334.8L528.5,335.1L529.2,338.5L530,337.6L530.8,338.9L531.5,337.4L532.2,334.2L533,335.9L533.8,338.5L534.5,336.9L535.2,335L536,339.7L536.8,338.6L537.5,340.1L538.2,337.4L539,340.5L539.8,342.5L540.5,345.2L541.2,342.2L542,346.8L542.8,346.3L543.5,346.4L544.2,344.1L545,345.9L545.8,345.5L546.5,344.9L547.2,346.6L548,347.5L548.8,347.3L549.5,348L550.2,345.2L551,348.2L551.8,346.9L552.5,347.2L553.2,347.7L554,349.1L554.8,348.7L555.5,347.8L556.2,346.4L557,346.6L557.8,347.4L558.5,347.3L559.2,347.4L560,345.9L560.8,344.9L561.5,346.4L562.2,345.8L563,347L563.8,345.8L564.5,348.7L565.2,345.7L566,346.7L566.8,346.4L567.5,345.2L568.2,346.1L569,344.5L569.8,344L570.5,346.8L571.2,346.8L572,345.1L572.8,348.1L573.5,347.5L574.2,348L575,348.1L575.8,347.8L576.5,348L577.2,347.9L578,348.7L578.8,345.2L579.5,347.9L580.2,347.8L581,347.7L581.8,348.3L582.5,349.2L583.2,347.9L584,347.2L584.8,347.6L585.5,348.3L586.2,349.4L587,349.3L587.8,349.6L588.5,349L589.2,349.4L590,349.2L590.8,348.4L591.5,348.5L592.2,349.5L593,349.3L593.8,348.7L594.5,348L595.2,345.5L596,347.9L596.8,347.2L597.5,347L598.2,346.6L599,342.1L599.8,339.2L600.5,340.7L601.2,339.7L602,339.9L602.8,340.8L603.5,342L604.2,345.6L605,345.7L605.8,347.2L606.5,346.3L607.2,343L608,338.3L608.8,335.8L609.5,330.7L610.2,329.2L611,323.4L611.8,320.8L612.5,320L613.2,321.4L614,324.6L614.8,314.5L615.5,321.5L616.2,324.5L617,322.7L617.8,324L618.5,324.4L619.2,311.1L620,318.6L620.8,323L621.5,322.8L622.2,321.7L623,313.6L623.8,319.7L624.5,322.9L625.2,311.2L626,321.9L626.8,318.6L627.5,319.1L628.2,322.4L629,322.5L629.8,316.9L630.5,323.4L631.2,317.2L632,322.8L632.8,318.4L633.5,318.4L634.2,320.3L635,320.6L635.8,318.2L636.5,319.6L637.2,321.8L638,320.9L638.8,319.6L639.5,321.8L640.2,312.2L641,318.8L641.8,319L642.5,323.5L643.2,317.7L644,321.1L644.8,321.5L645.5,322L646.2,311.4L647,316.3L647.8,316.8L648.5,319.3L649.2,321.1L650,325.3L650.8,320.5L651.5,325.5L652.2,323.9L653,323.5L653.8,319.2L654.5,319.2L655.2,321.5L656,319.2L656.8,318.8L657.5,315.1L658.2,323.3L659,323.4L659.8,318.6L660.5,323.7L661.2,321L662,322.2L662.8,322.6L663.5,325.6L664.2,323.2L665,316.4L665.8,321.5L666.5,320.8L667.2,322.7L668,320.9L668.8,321.4L669.5,313.7L670.2,321L671,318.7L671.8,318L672.5,320.9L673.2,318.5L674,312.1L674.8,317.9L675.5,321.8L676.2,317.9L677,319.3L677.8,321.1L678.5,319.6L679.2,312.9L680,320.8L680.8,316.8L681.5,313.9L682.2,323.2L683,324.6L683.8,323.3L684.5,324.5L685.2,324.2L686,325.6L686.8,320.4L687.5,319.7L688.2,319.2L689,319.1L689.8,322L690.5,323.4L691.2,318.3L692,321.6L692.8,319L693.5,319.1L694.2,323.3L695,322.2L695.8,322L696.5,318.5L697.2,320.8L698,320.6L698.8,321.3L699.5,319.8L700.2,324L701,324.2L701.8,319.7L702.5,324.1L703.2,328.3L704,324L704.8,330.3L705.5,335L706.2,337.9L707,339.2L707.8,338.6L708.5,340.4L709.2,341.5L710,343.5L710.8,345.2L711.5,345.3L712.2,346.6L713,344.9L713.8,346.5L714.5,343.9L715.2,346.6L716,346L716.8,346.1L717.5,345.8L718.2,346.2L719,344.1L719.8,345.6L720.5,346.9L721.2,348.1L722,345.5L722.8,346.2L723.5,345.1L724.2,346.5L725,341.9L725.8,345.5L726.5,346.5L727.2,346.8L728,346L728.8,345.3L729.5,345.8L730.2,343.2L731,344.4L731.8,342.5L732.5,342.9L733.2,340.4L734,341.1L734.8,339.9L735.5,335.1L736.2,337.2L737,337.2L737.8,333.2L738.5,332.1L739.2,336.1L740,336.9L740.8,331.4L741.5,334.3L742.2,327.9L743,332.7L743.8,329.6L744.5,333.8L745.2,332.3L746,333.1L746.8,329.4L747.5,334.6L748.2,337.7L749,331.5L749.8,339.4L750.5,337.4L751.2,334L752,338L752.8,340.3L753.5,341.8L754.2,340.9L755,343.8L755.8,343.4L756.5,345.6L757.2,344.2L758,345.3L758.8,344.4L759.5,345.8L760.2,342L761,346.1L761.8,348.9L762.5,350.3L763.2,350.9L764,352.4L764.8,352.8L765.5,353.6L766.2,353.8L767,354.3L767.8,354.8L768.5,354.2L769.2,355.4L770,355.7L770.8,356.9L771.5,357.6L772.2,358.3L773,359.1L773.8,359.6L774.5,359.6L775.2,359.6L776,359.6L776.8,359.6L776.8,359.6L776,359.6L775.2,359.6L774.5,359.6L773.8,359.6L773,360.2L772.2,361L771.5,361.7L770.8,362L770,362.4L769.2,362.9L768.5,363.3L767.8,364.1L767,364.8L766.2,365.9L765.5,366.4L764.8,367.3L764,369.3L763.2,373L762.5,370.3L761.8,370.6L761,371.7L760.2,372.4L759.5,372.3L758.8,375L758,374.7L757.2,377.1L756.5,378.8L755.8,379.5L755,378.3L754.2,378.3L753.5,376.7L752.8,379.1L752,378.5L751.2,379.4L750.5,380.1L749.8,380.5L749,381.4L748.2,389.7L747.5,385.7L746.8,386.1L746,387.4L745.2,389.9L744.5,389.2L743.8,397.7L743,390.7L742.2,390.6L741.5,388.3L740.8,388.5L740,387.5L739.2,384.1L738.5,383.9L737.8,383.9L737,380.9L736.2,382.4L735.5,379.8L734.8,376.9L734,377.4L733.2,378L732.5,378.6L731.8,378.3L731,377.8L730.2,377.8L729.5,375.1L728.8,375.3L728,374.1L727.2,372.7L726.5,373.8L725.8,373.9L725,375.2L724.2,374.3L723.5,374.2L722.8,372.5L722,371.5L721.2,371.3L720.5,371.2L719.8,371.1L719,371L718.2,372.9L717.5,372.3L716.8,370.7L716,371L715.2,373.2L714.5,372.8L713.8,375.5L713,373.8L712.2,373.2L711.5,375.5L710.8,374.8L710,374.7L709.2,376.1L708.5,376.5L707.8,376.5L707,380.3L706.2,384.9L705.5,386L704.8,389L704,388.3L703.2,395.1L702.5,392L701.8,393L701,392.3L700.2,402.4L699.5,398.2L698.8,406.4L698,395L697.2,399L696.5,398.4L695.8,394.1L695,394.8L694.2,396.3L693.5,393.9L692.8,395.3L692,395L691.2,396.9L690.5,395.2L689.8,394.2L689,396.7L688.2,405.3L687.5,393.4L686.8,393.3L686,395.9L685.2,397.9L684.5,397.2L683.8,403.4L683,399.5L682.2,401.9L681.5,402.6L680.8,402.4L680,400L679.2,400.5L678.5,396.6L677.8,399.7L677,397.1L676.2,398.4L675.5,399.2L674.8,398.5L674,396.6L673.2,404.9L672.5,395.2L671.8,394.1L671,395.2L670.2,397.5L669.5,395.6L668.8,405.9L668,399L667.2,400.8L666.5,399.6L665.8,401.5L665,401.2L664.2,397.6L663.5,398.9L662.8,400.6L662,396.6L661.2,401.5L660.5,399.7L659.8,396.8L659,400L658.2,401.4L657.5,401.2L656.8,399L656,397.2L655.2,397.7L654.5,393.4L653.8,396.1L653,396.1L652.2,395.1L651.5,398.7L650.8,398L650,400.5L649.2,398.1L648.5,399.3L647.8,397.6L647,397.7L646.2,396.6L645.5,395.1L644.8,396.7L644,394.6L643.2,396.9L642.5,394.2L641.8,394.9L641,404.5L640.2,395.6L639.5,399.7L638.8,397.1L638,398.8L637.2,396L636.5,395.4L635.8,400.3L635,399.4L634.2,398.1L633.5,396.2L632.8,397.7L632,399.3L631.2,398.8L630.5,396.2L629.8,398.9L629,398.9L628.2,395.3L627.5,400.1L626.8,398.7L626,403.9L625.2,399.1L624.5,400.4L623.8,398.7L623,394.3L622.2,395.5L621.5,394.2L620.8,394.6L620,405.5L619.2,396.1L618.5,398L617.8,395.6L617,397.6L616.2,399.1L615.5,400.1L614.8,397.4L614,398.2L613.2,400.5L612.5,400.6L611.8,398.9L611,397.9L610.2,393.7L609.5,386L608.8,384.1L608,381.5L607.2,377.5L606.5,376L605.8,374.9L605,377.1L604.2,374.4L603.5,375.2L602.8,376.2L602,376.6L601.2,374.9L600.5,375.5L599.8,374.7L599,371.9L598.2,371.9L597.5,369.5L596.8,369.6L596,369.8L595.2,370.2L594.5,369.6L593.8,369.8L593,369.6L592.2,369L591.5,369.2L590.8,369.2L590,369L589.2,368.5L588.5,369.7L587.8,370.3L587,371.5L586.2,370.8L585.5,372L584.8,371.9L584,371.6L583.2,370.9L582.5,371.1L581.8,372.7L581,372.8L580.2,372.2L579.5,371.5L578.8,372.6L578,371.1L577.2,370.4L576.5,371.9L575.8,371.6L575,372.4L574.2,370.5L573.5,371.2L572.8,370.7L572,370.5L571.2,371.3L570.5,371.1L569.8,371.6L569,370.7L568.2,371.1L567.5,370.1L566.8,370.2L566,372.9L565.2,370.2L564.5,371.3L563.8,370.8L563,372.1L562.2,372.2L561.5,372.7L560.8,374.5L560,374.1L559.2,373.4L558.5,372.5L557.8,372.8L557,373.4L556.2,373.4L555.5,372.7L554.8,373.7L554,373.7L553.2,372.3L552.5,374L551.8,373.4L551,374.9L550.2,372.5L549.5,372.4L548.8,371.9L548,371L547.2,372L546.5,372.2L545.8,372.8L545,377.2L544.2,373.5L543.5,374.1L542.8,373.1L542,374L541.2,374.9L540.5,375.8L539.8,375.2L539,376.1L538.2,377.5L537.5,378.1L536.8,378.1L536,379.8L535.2,380.6L534.5,379L533.8,381.6L533,382.6L532.2,381.6L531.5,383.7L530.8,385.3L530,388.7L529.2,384.2L528.5,385L527.8,384.2L527,381.5L526.2,379.5L525.5,381.8L524.8,383.4L524,382.2L523.2,386.7L522.5,383.9L521.8,385.2L521,386.2L520.2,387.5L519.5,387.1L518.8,392.2L518,393.7L517.2,392.7L516.5,394.5L515.8,395.3L515,396L514.2,392.8L513.5,394.7L512.8,393.7L512,395L511.2,391.9L510.5,394.6L509.8,394.2L509,393.2L508.2,390.9L507.5,390.9L506.8,394.3L506,393.8L505.2,391.5L504.5,390.2L503.8,394.1L503,391.6L502.2,390.5L501.5,395.7L500.8,396L500,399.1L499.2,394.2L498.5,396.6L497.8,394.6L497,392.9L496.2,394.2L495.5,392.4L494.8,393.4L494,391L493.2,390.1L492.5,385.9L491.8,384.5L491,388.2L490.2,381L489.5,381.6L488.8,378.5L488,377.7L487.2,376.3L486.5,375.6L485.8,377.1L485,376.1L484.2,375.4L483.5,374.3L482.8,374.4L482,374.6L481.2,374.2L480.5,373.6L479.8,375.7L479,376.8L478.2,375.9L477.5,378L476.8,376.8L476,378.4L475.2,375.9L474.5,376.4L473.8,376.2L473,374.9L472.2,375.9L471.5,375.3L470.8,375.5L470,380.4L469.2,376.3L468.5,377.2L467.8,375.7L467,375.4L466.2,374.5L465.5,373.9L464.8,373L464,374.3L463.2,376.7L462.5,377.9L461.8,377.4L461,377.9L460.2,377.3L459.5,374.7L458.8,375.6L458,375.8L457.2,375L456.5,376.5L455.8,377.3L455,379L454.2,375.4L453.5,375.7L452.8,375.8L452,375L451.2,374.1L450.5,375.4L449.8,375.2L449,378.7L448.2,374.7L447.5,374.4L446.8,375L446,376.1L445.2,375.3L444.5,379.9L443.8,377L443,377.8L442.2,377.1L441.5,377.2L440.8,376.2L440,374.1L439.2,374.6L438.5,375.8L437.8,374.8L437,377.5L436.2,376.9L435.5,375.4L434.8,376.3L434,376.4L433.2,383.5L432.5,382.5L431.8,382.4L431,384L430.2,382.1L429.5,383.8L428.8,382.7L428,380.7L427.2,381.6L426.5,381L425.8,383L425,382.6L424.2,384.3L423.5,383.7L422.8,384L422,385L421.2,385.4L420.5,384.9L419.8,384.5L419,388.6L418.2,387.7L417.5,384.3L416.8,384.5L416,387.8L415.2,384.9L414.5,387.7L413.8,383.4L413,382L412.2,385.5L411.5,384.6L410.8,384L410,385.6L409.2,385L408.5,382.8L407.8,383.2L407,383.9L406.2,382L405.5,383L404.8,382.5L404,386.5L403.2,383.7L402.5,384.1L401.8,382.7L401,388.3L400.2,384L399.5,387.8L398.8,380.2L398,382.3L397.2,381.7L396.5,378.6L395.8,378.1L395,378.3L394.2,377.2L393.5,378.8L392.8,379.8L392,381.9L391.2,381.2L390.5,380.4L389.8,381.4L389,385.6L388.2,378.5L387.5,373.6L386.8,374.3L386,374.5L385.2,373.7L384.5,376.1L383.8,375.5L383,377.8L382.2,379.3L381.5,379.6L380.8,378.1L380,377.7L379.2,375.2L378.5,376.3L377.8,375L377,374.9L376.2,374.5L375.5,373.9L374.8,373L374,375.7L373.2,372L372.5,371.2L371.8,371.6L371,373.4L370.2,373.9L369.5,378.8L368.8,375.7L368,376L367.2,375.1L366.5,375.4L365.8,375.1L365,373.7L364.2,374.2L363.5,374.9L362.8,373.3L362,374.9L361.2,374.5L360.5,373.6L359.8,375.1L359,376.2L358.2,376.6L357.5,376.2L356.8,376L356,376.3L355.2,373.9L354.5,374L353.8,372.9L353,371.8L352.2,372.5L351.5,371.9L350.8,372.3L350,371.4L349.2,372.1L348.5,372.3L347.8,373.3L347,374L346.2,373.6L345.5,372.2L344.8,370.7L344,371.3L343.2,370.4L342.5,369.3L341.8,369.9L341,372.3L340.2,371.9L339.5,373.7L338.8,371.2L338,370L337.2,371L336.5,370.2L335.8,370.3L335,371.4L334.2,371.6L333.5,370.9L332.8,371.5L332,371.8L331.2,370.6L330.5,370.8L329.8,370.4L329,372.3L328.2,371L327.5,371.2L326.8,370.8L326,374L325.2,372.6L324.5,375.5L323.8,371.5L323,372.2L322.2,371.2L321.5,369.5L320.8,369.8L320,371.2L319.2,364.2L318.5,364.7L317.8,364.7L317,364.8L316.2,364.3L315.5,363.9L314.8,364.1L314,365.1L313.2,363.6L312.5,363.5L311.8,363.8L311,364.2L310.2,364.3L309.5,365.2L308.8,364.7L308,364.6L307.2,364.4L306.5,364.2L305.8,363.7L305,363.7L304.2,363.3L303.5,363.7L302.8,363.4L302,363.5L301.2,363.4L300.5,363.1L299.8,362.7L299,363.1L298.2,362.3L297.5,362.1L296.8,362.2L296,362.3L295.2,362.2L294.5,362.9L293.8,362.5L293,362.6L292.2,362.5L291.5,362.7L290.8,362.7L290,362.5L289.2,362.6L288.5,362.8L287.8,362.5L287,362.9L286.2,362.8L285.5,362.5L284.8,363L284,364L283.2,364.2L282.5,363L281.8,362.3L281,362.5L280.2,362.2L279.5,362.4L278.8,362.3L278,362L277.2,362.1L276.5,362L275.8,362.1L275,362L274.2,362.2L273.5,362L272.8,362L272,361.9L271.2,361.8L270.5,361.6L269.8,361.5L269,361.6L268.2,361.4L267.5,361.1L266.8,361L266,361.1L265.2,361L264.5,361L263.8,360.7L263,360.5L262.2,360.6L261.5,360.4L260.8,360.2L260,360.1L259.2,359.9L258.5,359.7L257.8,359.6L257,359.6L256.2,359.6L255.5,359.6L254.8,359.6L254,359.6Z" fill="#48c8ee"/></g>
<rect x="319.6" y="173" width="0.9" height="110.7" fill="#6a9cc6" opacity="0.6"/>
<rect x="387.6" y="173" width="0.9" height="110.7" fill="#6a9cc6" opacity="0.6"/>
<rect x="433.2" y="173" width="0.9" height="110.7" fill="#7fbfe2" opacity="0.4"/>
<rect x="518.2" y="173" width="0.9" height="110.7" fill="#7fbfe2" opacity="0.5"/>
<rect x="616.4" y="173" width="1.2" height="110.7" fill="#7fc8e8" opacity="0.75"/>
<line x1="777.3" y1="173" x2="777.3" y2="283.7" stroke="#e0484c" stroke-width="0.8" stroke-dasharray="1.2,1"/>
<line x1="254" y1="173" x2="254" y2="283.7" stroke="#e0a080" stroke-width="0.7" stroke-dasharray="1.2,1" opacity="0.7"/>
<rect x="319.6" y="304.2" width="0.9" height="110.8" fill="#6a9cc6" opacity="0.6"/>
<rect x="387.6" y="304.2" width="0.9" height="110.8" fill="#6a9cc6" opacity="0.6"/>
<rect x="433.2" y="304.2" width="0.9" height="110.8" fill="#7fbfe2" opacity="0.4"/>
<rect x="518.2" y="304.2" width="0.9" height="110.8" fill="#7fbfe2" opacity="0.5"/>
<rect x="616.4" y="304.2" width="1.2" height="110.8" fill="#7fc8e8" opacity="0.75"/>
<line x1="777.3" y1="304.2" x2="777.3" y2="415" stroke="#e0484c" stroke-width="0.8" stroke-dasharray="1.2,1"/>
<line x1="254" y1="304.2" x2="254" y2="415" stroke="#e0a080" stroke-width="0.7" stroke-dasharray="1.2,1" opacity="0.7"/>
<path d="M320.6,167 h-3.6 v6.6 l3.6,3.4z" fill="#86d4f3" stroke="#c6ecfc" stroke-width="0.4" opacity="0.92"/>
<path d="M388,167 h3.8 v6.6 l-3.8,3.4z" fill="#86d4f3" stroke="#c6ecfc" stroke-width="0.4" opacity="0.92"/>
<path d="M433.8,167 h-5 v11.2 l5,5.8z" fill="#86d4f3" stroke="#c6ecfc" stroke-width="0.4" opacity="0.92"/>
<path d="M518.2,167 h4.8 v11.2 l-4.8,5.8z" fill="#86d4f3" stroke="#c6ecfc" stroke-width="0.4" opacity="0.92"/>
<path d="M614.7,167 h4.2 v6 l-2.1,3 l-2.1,-3z" fill="#86d4f3" stroke="#c6ecfc" stroke-width="0.4" opacity="0.92"/>
<rect x="253.8" y="172.6" width="2" height="3.6" fill="#e8e4c0" rx="0.8"/>
<rect x="775.4" y="172.6" width="2" height="3.6" fill="#e8e4c0" rx="0.8"/>
<path d="M320.8,421.5 h-4.6 v-7.4 l4.6,-3.8z" fill="#58c5ed" stroke="#a4e2fb" stroke-width="0.4" opacity="0.95"/>
<path d="M387.6,421.5 h4.4 v-7.4 l-4.4,-3.8z" fill="#58c5ed" stroke="#a4e2fb" stroke-width="0.4" opacity="0.95"/>
<path d="M434.4,421.5 h-5.6 v-11.6 l5.6,-6z" fill="#58c5ed" stroke="#a4e2fb" stroke-width="0.4" opacity="0.95"/>
<path d="M517.5,421.5 h5.6 v-11.6 l-5.6,-6z" fill="#58c5ed" stroke="#a4e2fb" stroke-width="0.4" opacity="0.95"/>
<rect x="548" y="173" width="1.3" height="248" fill="#e38b5a"/>
<path d="M545.8,171.3 a1.3,1.3 0 0 1 1.3,-1.3 h3 a1.3,1.3 0 0 1 1.3,1.3 v1.6 q0,1.8 -2.8,3.4 q-2.8,-1.6 -2.8,-3.4z" fill="#f8cc4e" stroke="#e8903e" stroke-width="0.6"/>
<rect x="777.6" y="159.3" width="10.9" height="261.9" fill="#2d2459"/>
<rect x="777.6" y="159.3" width="10.9" height="7.5" fill="#30204a"/>
<rect x="779" y="250" width="3.6" height="171" fill="url(#fw-meter)"/>
<rect x="784" y="243" width="3.6" height="178" fill="url(#fw-meter)"/>
<rect x="244" y="141.4" width="9.6" height="279.8" fill="#2b7fbb"/>
<rect x="244" y="159.3" width="9.6" height="7.5" fill="#252a60"/>
<text x="248.8" y="176.5" font-family='"Liberation Sans", sans-serif' font-size="3.6" font-weight="bold" fill="#1a5690" opacity="0.85" text-anchor="middle">0</text>
<text x="248.8" y="283.8" font-family='"Liberation Sans", sans-serif' font-size="3.6" font-weight="bold" fill="#1a5690" opacity="0.85" text-anchor="middle">0</text>
<text x="248.8" y="190.5" font-family='"Liberation Sans", sans-serif' font-size="3.6" font-weight="bold" fill="#1a5690" opacity="0.85" text-anchor="middle">3</text>
<text x="248.8" y="268.8" font-family='"Liberation Sans", sans-serif' font-size="3.6" font-weight="bold" fill="#1a5690" opacity="0.85" text-anchor="middle">3</text>
<text x="248.8" y="202" font-family='"Liberation Sans", sans-serif' font-size="3.6" font-weight="bold" fill="#1a5690" opacity="0.85" text-anchor="middle">6</text>
<text x="248.8" y="257.3" font-family='"Liberation Sans", sans-serif' font-size="3.6" font-weight="bold" fill="#1a5690" opacity="0.85" text-anchor="middle">6</text>
<text x="248.8" y="210.1" font-family='"Liberation Sans", sans-serif' font-size="3.6" font-weight="bold" fill="#1a5690" opacity="0.85" text-anchor="middle">9</text>
<text x="248.8" y="249.2" font-family='"Liberation Sans", sans-serif' font-size="3.6" font-weight="bold" fill="#1a5690" opacity="0.85" text-anchor="middle">9</text>
<text x="248.8" y="215.8" font-family='"Liberation Sans", sans-serif' font-size="3.6" font-weight="bold" fill="#1a5690" opacity="0.85" text-anchor="middle">12</text>
<text x="248.8" y="243.5" font-family='"Liberation Sans", sans-serif' font-size="3.6" font-weight="bold" fill="#1a5690" opacity="0.85" text-anchor="middle">12</text>
<text x="248.8" y="222.7" font-family='"Liberation Sans", sans-serif' font-size="3.6" font-weight="bold" fill="#1a5690" opacity="0.85" text-anchor="middle">18</text>
<text x="248.8" y="236.6" font-family='"Liberation Sans", sans-serif' font-size="3.6" font-weight="bold" fill="#1a5690" opacity="0.85" text-anchor="middle">18</text>
<circle cx="248.6" cy="228.3" r="3.4" fill="#2ad24a" stroke="#1a9a36" stroke-width="0.5"/>
<rect x="247.2" y="227.9" width="2.8" height="0.8" fill="#8af09a" opacity="0.7"/>
<text x="248.8" y="307.7" font-family='"Liberation Sans", sans-serif' font-size="3.6" font-weight="bold" fill="#1a5690" opacity="0.85" text-anchor="middle">0</text>
<text x="248.8" y="415.1" font-family='"Liberation Sans", sans-serif' font-size="3.6" font-weight="bold" fill="#1a5690" opacity="0.85" text-anchor="middle">0</text>
<text x="248.8" y="321.7" font-family='"Liberation Sans", sans-serif' font-size="3.6" font-weight="bold" fill="#1a5690" opacity="0.85" text-anchor="middle">3</text>
<text x="248.8" y="400.1" font-family='"Liberation Sans", sans-serif' font-size="3.6" font-weight="bold" fill="#1a5690" opacity="0.85" text-anchor="middle">3</text>
<text x="248.8" y="333.2" font-family='"Liberation Sans", sans-serif' font-size="3.6" font-weight="bold" fill="#1a5690" opacity="0.85" text-anchor="middle">6</text>
<text x="248.8" y="388.6" font-family='"Liberation Sans", sans-serif' font-size="3.6" font-weight="bold" fill="#1a5690" opacity="0.85" text-anchor="middle">6</text>
<text x="248.8" y="341.3" font-family='"Liberation Sans", sans-serif' font-size="3.6" font-weight="bold" fill="#1a5690" opacity="0.85" text-anchor="middle">9</text>
<text x="248.8" y="380.5" font-family='"Liberation Sans", sans-serif' font-size="3.6" font-weight="bold" fill="#1a5690" opacity="0.85" text-anchor="middle">9</text>
<text x="248.8" y="347.1" font-family='"Liberation Sans", sans-serif' font-size="3.6" font-weight="bold" fill="#1a5690" opacity="0.85" text-anchor="middle">12</text>
<text x="248.8" y="374.8" font-family='"Liberation Sans", sans-serif' font-size="3.6" font-weight="bold" fill="#1a5690" opacity="0.85" text-anchor="middle">12</text>
<text x="248.8" y="353.9" font-family='"Liberation Sans", sans-serif' font-size="3.6" font-weight="bold" fill="#1a5690" opacity="0.85" text-anchor="middle">18</text>
<text x="248.8" y="367.9" font-family='"Liberation Sans", sans-serif' font-size="3.6" font-weight="bold" fill="#1a5690" opacity="0.85" text-anchor="middle">18</text>
<circle cx="248.6" cy="359.6" r="3.4" fill="#2ad24a" stroke="#1a9a36" stroke-width="0.5"/>
<rect x="247.2" y="359.2" width="2.8" height="0.8" fill="#8af09a" opacity="0.7"/>
<rect x="244" y="421.2" width="544.5" height="8.4" fill="#33255b"/>
<rect x="244" y="429.6" width="544.5" height="15.2" fill="#170f38"/>
<rect x="244" y="444.8" width="544.5" height="12" fill="#b1b1b6"/>
<path d="M244,428 L376.7,428 L393,444.8 L788.5,444.8 L788.5,456.5 L244,456.5Z" fill="url(#fw-tp)"/>
<path d="M244,428 L376.7,428 L393,444.8 L788.5,444.8" fill="none" stroke="#b05a6a" stroke-width="0.6" opacity="0.8"/>
<rect x="260.4" y="435.8" width="75" height="13" rx="7" fill="#9f9aac" opacity="0.85"/>
<circle cx="266.4" cy="442.3" r="8.2" fill="url(#fw-btn)" stroke="#81768f" stroke-width="1.5"/>
<circle cx="266.4" cy="442.3" r="7.1" fill="none" stroke="#ffffff" stroke-width="0.6" opacity="0.6"/>
<circle cx="286.5" cy="442.3" r="9.8" fill="url(#fw-btn)" stroke="#81768f" stroke-width="1.5"/>
<circle cx="286.5" cy="442.3" r="8.7" fill="none" stroke="#ffffff" stroke-width="0.6" opacity="0.6"/>
<circle cx="309" cy="442.3" r="9.8" fill="url(#fw-btn)" stroke="#81768f" stroke-width="1.5"/>
<circle cx="309" cy="442.3" r="8.7" fill="none" stroke="#ffffff" stroke-width="0.6" opacity="0.6"/>
<circle cx="329.4" cy="442.3" r="8.2" fill="url(#fw-btn)" stroke="#81768f" stroke-width="1.5"/>
<circle cx="329.4" cy="442.3" r="7.1" fill="none" stroke="#ffffff" stroke-width="0.6" opacity="0.6"/>
<circle cx="350.9" cy="442.3" r="6.3" fill="url(#fw-btn)" stroke="#81768f" stroke-width="1.5"/>
<circle cx="350.9" cy="442.3" r="5.2" fill="none" stroke="#ffffff" stroke-width="0.6" opacity="0.6"/>
<circle cx="368" cy="442.3" r="6.3" fill="url(#fw-btn)" stroke="#81768f" stroke-width="1.5"/>
<circle cx="368" cy="442.3" r="5.2" fill="none" stroke="#ffffff" stroke-width="0.6" opacity="0.6"/>
<rect x="264" y="439.9" width="4.8" height="4.8" fill="#434d66" rx="0.6"/>
<circle cx="286.5" cy="442.3" r="3.1" fill="#d2303a"/>
<circle cx="286.5" cy="442.3" r="4.2" fill="none" stroke="#c86a70" stroke-width="0.7" opacity="0.6"/>
<rect x="306.1" y="439.3" width="2" height="6" fill="#434d66" rx="0.4"/>
<rect x="309.9" y="439.3" width="2" height="6" fill="#434d66" rx="0.4"/>
<path d="M326.8,439.7 l3.8,2.6 l-3.8,2.6z" fill="#434d66"/>
<rect x="331.1" y="439.8" width="1.2" height="5" fill="#434d66"/>
<path d="M352.5,440.1 a2.7,2.7 0 1 0 1.1,2.2" fill="none" stroke="#434d66" stroke-width="1.1"/>
<path d="M351.5,438.7 l2.6,0.4 l-1.8,2z" fill="#434d66"/>
<text x="368" y="443.9" font-family='"Liberation Sans", sans-serif' font-size="4.2" font-weight="bold" font-style="italic" fill="#434d66" text-anchor="middle">FX</text>
<line x1="776" y1="446.5" x2="776" y2="455" stroke="#8a8a92" stroke-width="0.6"/>
<path d="M777.6,450.6 q3.6,-4.4 7.2,0 q-3.6,4.4 -7.2,0z" fill="#2a2a34"/><circle cx="781.2" cy="450.6" r="1.1" fill="#c8c8cc"/>
</g></svg>

<div class="t title" style="left:499px;top:132px;">starwaves.vpj</div>
<svg width="870" height="490"><path d="M492.3,132.6 h3.4 l1.6,1.6 v4.8 h-5z" fill="#f6f6f8" stroke="#b4b4ba" stroke-width="0.5" transform="rotate(-14 494.8 135.8)"/></svg>
<div class="t time" style="left:681.5px;top:142.4px;">002:04.360</div>
<div class="t rl" style="left:291.6px;top:161.2px;color:#3fc298;">00:16.000</div>
<div class="t rl" style="left:291.6px;top:291.8px;color:#74d4d8;">00:16.000</div>
<div class="t rl" style="left:329.6px;top:161.2px;color:#3fc298;">00:32.000</div>
<div class="t rl" style="left:329.6px;top:291.8px;color:#74d4d8;">00:32.000</div>
<div class="t rl" style="left:367.6px;top:161.2px;color:#3fc298;">00:48.000</div>
<div class="t rl" style="left:367.6px;top:291.8px;color:#74d4d8;">00:48.000</div>
<div class="t rl" style="left:405.6px;top:161.2px;color:#3fc298;">01:04.000</div>
<div class="t rl" style="left:405.6px;top:291.8px;color:#74d4d8;">01:04.000</div>
<div class="t rl" style="left:443.6px;top:161.2px;color:#3fc298;">01:20.000</div>
<div class="t rl" style="left:443.6px;top:291.8px;color:#74d4d8;">01:20.000</div>
<div class="t rl" style="left:481.6px;top:161.2px;color:#3fc298;">01:36.000</div>
<div class="t rl" style="left:481.6px;top:291.8px;color:#74d4d8;">01:36.000</div>
<div class="t rl" style="left:519.6px;top:161.2px;color:#3fc298;">01:52.000</div>
<div class="t rl" style="left:519.6px;top:291.8px;color:#74d4d8;">01:52.000</div>
<div class="t rl" style="left:557.6px;top:161.2px;color:#3fc298;">02:08.000</div>
<div class="t rl" style="left:557.6px;top:291.8px;color:#74d4d8;">02:08.000</div>
<div class="t rl" style="left:595.6px;top:161.2px;color:#3fc298;">02:24.000</div>
<div class="t rl" style="left:595.6px;top:291.8px;color:#74d4d8;">02:24.000</div>
<div class="t rl" style="left:633.6px;top:161.2px;color:#3fc298;">02:40.000</div>
<div class="t rl" style="left:633.6px;top:291.8px;color:#74d4d8;">02:40.000</div>
<div class="t rl" style="left:671.6px;top:161.2px;color:#3fc298;">02:56.000</div>
<div class="t rl" style="left:671.6px;top:291.8px;color:#74d4d8;">02:56.000</div>
<div class="t rl" style="left:709.6px;top:161.2px;color:#3fc298;">03:12.000</div>
<div class="t rl" style="left:709.6px;top:291.8px;color:#74d4d8;">03:12.000</div>
<div class="t rl" style="left:747.6px;top:161.2px;color:#3fc298;">03:28.000</div>
<div class="t rl" style="left:747.6px;top:291.8px;color:#74d4d8;">03:28.000</div>
<div class="t mk" style="left:342px;top:167.3px;color:#37a0d6;">Marker #1</div>
<div class="t mk" style="left:463px;top:167.2px;color:#1f6a5a;">Marker #2</div>
<div class="t mk" style="left:621px;top:167.3px;color:#37a0d6;">Marker #3</div>
<div class="t status" style="left:602.5px;top:447.4px;">Selection: 00:00:35.662 [00:01:15.777 - 00:01:51.440]</div>

</div></body></html>
